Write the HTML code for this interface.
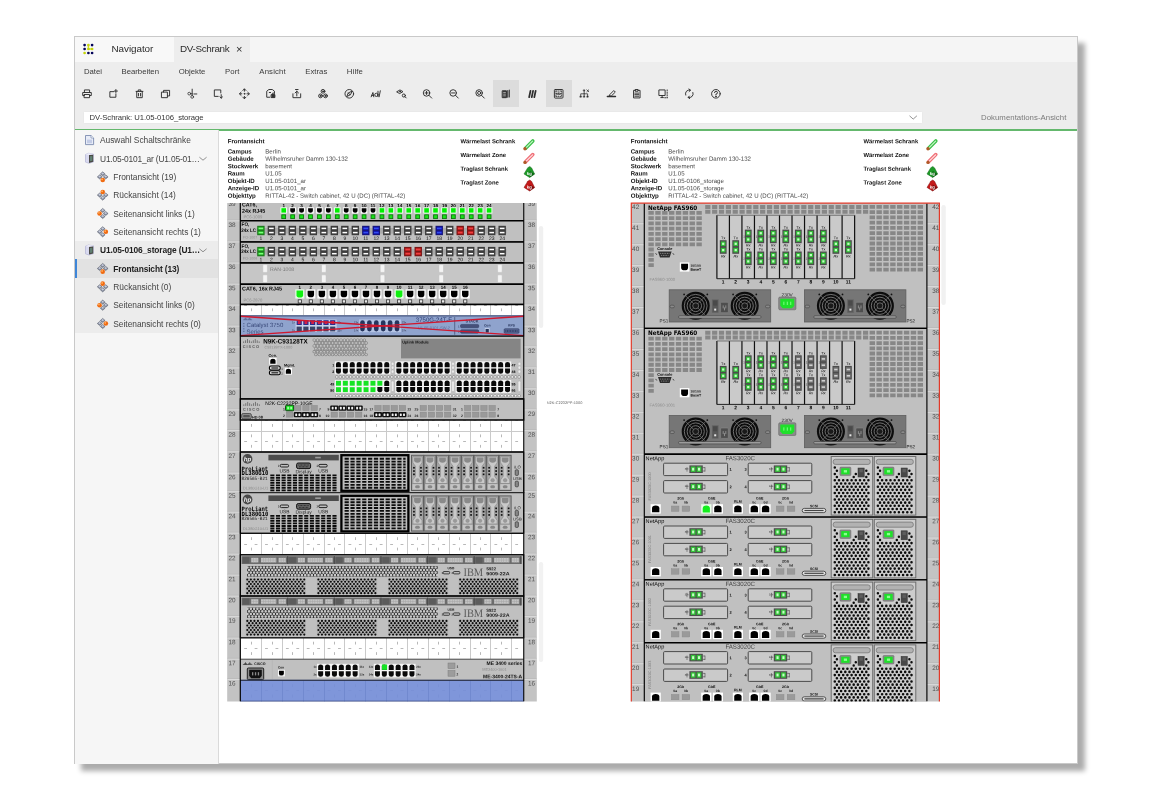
<!DOCTYPE html>
<html lang="de"><head><meta charset="utf-8"><title>DV-Schrank</title>
<style>

*{box-sizing:border-box}
html,body{margin:0;padding:0;background:#fff;width:1152px;height:800px;overflow:hidden}
body{font-family:"Liberation Sans",sans-serif;color:#333;position:relative}
.win{position:absolute;left:74px;top:36px;width:1004.3px;height:728.3px;background:#fff;border:1px solid #c9c9c9;box-shadow:7px 7px 5px rgba(0,0,0,.33)}
.abs{position:absolute;white-space:nowrap}
.tabbar{position:absolute;left:75px;top:37px;width:1002px;height:25px;background:#f5f5f5}
.tabnav{position:absolute;left:75px;top:37px;width:99px;height:25px;background:#f8f8f8}
.tabact{position:absolute;left:174px;top:37px;width:76px;height:25px;background:#ededed}
.menubar{position:absolute;left:75px;top:62px;width:1002px;height:48px;background:#ededed}
.tbline{position:absolute;left:75px;top:110px;width:1002px;height:1px;background:#ededed}
.comborow{position:absolute;left:75px;top:111px;width:1002px;height:18px;background:#ededed}
.combo{position:absolute;left:83px;top:110.6px;width:839.8px;height:13.6px;background:#fff;border:1px solid #e9e9e9;border-radius:1.5px}
.green{position:absolute;left:75px;top:128.8px;width:1002px;height:2.2px;background:#64b86d}
.side{position:absolute;left:75px;top:130px;width:144px;height:633.6px;background:#f6f6f6;border-right:1px solid #dadada}
.selgrp{position:absolute;left:75px;top:241px;width:143px;height:92px;background:#ececec}
.selrow{position:absolute;left:75px;top:259px;width:143px;height:19px;background:#e2e2e2}
.selbar{position:absolute;left:75px;top:259px;width:2.2px;height:19px;background:#3f86d8}
.mt{font-size:7.75px;color:#3a3a3a;top:66.6px;line-height:10px}
.tt{font-size:9.9px;color:#2b2b2b;top:43px;line-height:12px}
.st{font-size:8.4px;color:#444;letter-spacing:-.02px;line-height:10px}
.tbact{position:absolute;top:80px;width:26px;height:27px;background:#dcdcdc}

</style></head><body>
<div class="win"></div>
<div class="tabbar"></div><div class="tabnav"></div><div class="tabact"></div>
<div class="menubar"></div><div class="tbline"></div><div class="comborow"></div><div class="combo"></div><div class="green"></div>
<div class="side"></div><div class="selgrp"></div><div class="selrow"></div><div class="selbar"></div>
<div class="tbact" style="left:493px"></div><div class="tbact" style="left:546px"></div>
<div style="position:absolute;left:0;top:0;width:1152px;height:800px;will-change:transform">
<div class="abs tt" style="left:111.5px;letter-spacing:-0.06px">Navigator</div>
<div class="abs tt" style="left:180px;letter-spacing:-0.33px">DV-Schrank</div>
<div class="abs tt" style="left:236px;font-size:11px;top:42.5px">×</div>
<div class="abs mt" style="left:84px;letter-spacing:-0.02px">Datei</div>
<div class="abs mt" style="left:121.5px;letter-spacing:0px">Bearbeiten</div>
<div class="abs mt" style="left:178.7px;letter-spacing:0px">Objekte</div>
<div class="abs mt" style="left:225px;letter-spacing:0.1px">Port</div>
<div class="abs mt" style="left:259.3px;letter-spacing:0.17px">Ansicht</div>
<div class="abs mt" style="left:305.3px;letter-spacing:0px">Extras</div>
<div class="abs mt" style="left:346.8px;letter-spacing:0.13px">Hilfe</div>
<div class="abs" style="left:89.6px;top:112.8px;font-size:7.7px;line-height:10px;color:#333;letter-spacing:-0.05px">DV-Schrank: U1.05-0106_storage</div>
<div class="abs" style="left:981px;top:112.8px;font-size:7.8px;line-height:10px;color:#7a7a7a;letter-spacing:0.04px">Dokumentations-Ansicht</div>
<div class="abs st" style="left:100px;top:135.3px;font-weight:400;color:#444">Auswahl Schaltschränke</div>
<div class="abs st" style="left:100px;top:153.60000000000002px;font-weight:400;color:#444;letter-spacing:-.17px">U1.05-0101_ar (U1.05-01…</div>
<div class="abs st" style="left:113.3px;top:172.0px;font-weight:400;color:#444">Frontansicht (19)</div>
<div class="abs st" style="left:113.3px;top:190.20000000000002px;font-weight:400;color:#444">Rückansicht (14)</div>
<div class="abs st" style="left:113.3px;top:208.60000000000002px;font-weight:400;color:#444">Seitenansicht links (1)</div>
<div class="abs st" style="left:113.3px;top:226.9px;font-weight:400;color:#444">Seitenansicht rechts (1)</div>
<div class="abs st" style="left:100px;top:245.3px;font-weight:700;color:#222;letter-spacing:-.12px">U1.05-0106_storage (U1…</div>
<div class="abs st" style="left:113.3px;top:263.6px;font-weight:700;color:#222;letter-spacing:-.12px">Frontansicht (13)</div>
<div class="abs st" style="left:113.3px;top:281.90000000000003px;font-weight:400;color:#444">Rückansicht (0)</div>
<div class="abs st" style="left:113.3px;top:300.3px;font-weight:400;color:#444">Seitenansicht links (0)</div>
<div class="abs st" style="left:113.3px;top:318.6px;font-weight:400;color:#444">Seitenansicht rechts (0)</div>
</div>
<svg class="abs" style="left:0;top:0" width="1152" height="800" viewBox="0 0 1152 800"><path d="M88.4 45.1V49H92.1" stroke="#c4d40a" stroke-width="1.5" fill="none" stroke-linecap="round" opacity=".8"/><circle cx="84.6" cy="45.1" r="1.35" fill="#04045a"/><circle cx="88.4" cy="45.1" r="1.35" fill="#c4d40a"/><circle cx="92.1" cy="45.1" r="1.35" fill="#04045a"/><circle cx="84.6" cy="49" r="1.35" fill="#04045a"/><circle cx="88.4" cy="49" r="1.35" fill="#c4d40a"/><circle cx="92.1" cy="49" r="1.35" fill="#c4d40a"/><circle cx="84.6" cy="53" r="1.35" fill="#c4d40a"/><circle cx="88.4" cy="53" r="1.35" fill="#04045a"/><circle cx="92.1" cy="53" r="1.35" fill="#04045a"/><g transform="translate(87,93.8) scale(0.86)" stroke="#2e2e2e" stroke-width="1.1" fill="none" stroke-linecap="round" stroke-linejoin="round"><path d="M-3-1.5V-4.5H3V-1.5M-3 2H-5V-1.5H5V2H3M-3 .8H3V4.5H-3Z"/></g>
<g transform="translate(113.3,93.8) scale(0.86)" stroke="#2e2e2e" stroke-width="1.1" fill="none" stroke-linecap="round" stroke-linejoin="round"><path d="M0.5-2.5H-4V4H3V0M3-5V-1.5M1.2-3.2H4.8"/></g>
<g transform="translate(139.5,93.8) scale(0.86)" stroke="#2e2e2e" stroke-width="1.1" fill="none" stroke-linecap="round" stroke-linejoin="round"><path d="M-4-2.8H4M-1.5-2.8V-4.5H1.5V-2.8M-3.2-2.8V4.5H3.2V-2.8M-1.2-.5V2.5M1.2-.5V2.5"/></g>
<g transform="translate(165.7,93.8) scale(0.86)" stroke="#2e2e2e" stroke-width="1.1" fill="none" stroke-linecap="round" stroke-linejoin="round"><path d="M-4.5-2H2V4.5H-4.5ZM-2.5-2V-4H4.5V2.5H2"/></g>
<g transform="translate(192,93.8) scale(0.86)" stroke="#2e2e2e" stroke-width="1.1" fill="none" stroke-linecap="round" stroke-linejoin="round"><circle cx="-3.2" cy="-.2" r="1.6" stroke-width=".9"/><circle cx=".2" cy="3.6" r="1.6" stroke-width=".9"/><path d="M.2-5.4V2M-1.6 0H.2M2.2 .2H5.6"/></g>
<g transform="translate(218.2,93.8) scale(0.86)" stroke="#2e2e2e" stroke-width="1.1" fill="none" stroke-linecap="round" stroke-linejoin="round"><path d="M3-1V-4.5H-4.5V3H0M3.5 1V5M2 3.6L3.5 5L5 3.6"/></g>
<g transform="translate(244.4,93.8) scale(0.86)" stroke="#2e2e2e" stroke-width="1.1" fill="none" stroke-linecap="round" stroke-linejoin="round"><path d="M-1.8-3.9L0-5.8L1.8-3.9M-1.8 3.9L0 5.8L1.8 3.9M-3.9-1.8L-5.8 0L-3.9 1.8M3.9-1.8L5.8 0L3.9 1.8M0-5.4V-3M0 5.4V3M-5.4 0H-3M5.4 0H3"/><circle cx="0" cy="0" r=".5" fill="#333"/></g>
<g transform="translate(270.6,93.8) scale(0.86)" stroke="#2e2e2e" stroke-width="1.1" fill="none" stroke-linecap="round" stroke-linejoin="round"><path d="M-1 4H-4.5V-3L-2-5H2L4.5-3V-.5M-1.5-1.5H0"/><rect x="1" y="1" width="4" height="3.4" fill="#333"/><path d="M2 1V0A1 1 0 0 1 4 0V1"/></g>
<g transform="translate(296.8,93.8) scale(0.86)" stroke="#2e2e2e" stroke-width="1.1" fill="none" stroke-linecap="round" stroke-linejoin="round"><path d="M-4.5 0V4.5H4.5V0M0 2.5V-3M-2-1L0-3L2-1M-1.5-5H1.5"/></g>
<g transform="translate(323,93.8) scale(0.86)" stroke="#2e2e2e" stroke-width="1.1" fill="none" stroke-linecap="round" stroke-linejoin="round"><circle cx="0" cy="-2.9" r="2.2"/><circle cx="-2.9" cy="2.4" r="2.2"/><circle cx="2.9" cy="2.4" r="2.2"/><circle cx="0" cy="-2.9" r=".6" fill="#333"/><circle cx="-2.9" cy="2.4" r=".6" fill="#333"/><circle cx="2.9" cy="2.4" r=".6" fill="#333"/></g>
<g transform="translate(349.3,93.8) scale(0.86)" stroke="#2e2e2e" stroke-width="1.1" fill="none" stroke-linecap="round" stroke-linejoin="round"><circle cx="0" cy="0" r="5"/><path d="M3-3L-1.2-1L-3 3.2L1 1.2ZM-1.2-1L1 1.2"/></g>
<g transform="translate(375.5,93.8) scale(0.86)" stroke="#2e2e2e" stroke-width="1.1" fill="none" stroke-linecap="round" stroke-linejoin="round"><path d="M-5 3.5L-3-1.5L-2 3.5M-4.4 1.8H-2.4"/><circle cx="1" cy="1.2" r="1.9"/><path d="M2.9-3L2.9 3.3M4.2 3.5L5.6-3.5"/></g>
<g transform="translate(401.7,93.8) scale(0.86)" stroke="#2e2e2e" stroke-width="1.1" fill="none" stroke-linecap="round" stroke-linejoin="round"><path d="M-5.5-2.5L-2-4.5L1.5-2.5L-2-.5Z"/><circle cx="-2" cy="-2.5" r=".6"/><circle cx="2.5" cy="2" r="1.8"/><path d="M3.8 3.3L5.2 4.8"/></g>
<g transform="translate(427.4,93.8) scale(0.86)" stroke="#2e2e2e" stroke-width="1.1" fill="none" stroke-linecap="round" stroke-linejoin="round"><circle cx="-1" cy="-1" r="3.8"/><path d="M1.8 1.8L5 5M-1-2.8V.8M-2.8-1H.8"/></g>
<g transform="translate(454,93.8) scale(0.86)" stroke="#2e2e2e" stroke-width="1.1" fill="none" stroke-linecap="round" stroke-linejoin="round"><circle cx="-1" cy="-1" r="3.8"/><path d="M1.8 1.8L5 5M-2.8-1H.8"/></g>
<g transform="translate(480,93.8) scale(0.86)" stroke="#2e2e2e" stroke-width="1.1" fill="none" stroke-linecap="round" stroke-linejoin="round"><circle cx="-1" cy="-1" r="3.8"/><circle cx="-1" cy="-1" r="1.8"/><path d="M1.8 1.8L5 5"/></g>
<g transform="translate(506.2,93.8) scale(0.86)" stroke="#2e2e2e" stroke-width="1.1" fill="none" stroke-linecap="round" stroke-linejoin="round"><path d="M-4.2-3.5H.3V4.5H-4.2Z" fill="#333"/><path d="M-3-1.6H-.9M-3 .4H-.9M-3 2.4H-.9" stroke="#dcdcdc" stroke-width=".8"/><path d="M1.8-3.8V4M3.6-4.4V3.6" stroke-width="1.2"/></g>
<g transform="translate(532.4,93.8) scale(0.86)" stroke="#2e2e2e" stroke-width="1.1" fill="none" stroke-linecap="round" stroke-linejoin="round"><path d="M-3.8 4L-2.2-3.5M-.8 4L.8-3.5M2.2 4L3.8-3.5" stroke-width="2"/></g>
<g transform="translate(558.7,93.8) scale(0.86)" stroke="#2e2e2e" stroke-width="1.1" fill="none" stroke-linecap="round" stroke-linejoin="round"><rect x="-5" y="-5" width="10" height="10" rx="1"/><path d="M-3.2-3.2H3.2M-3.2 3.2H3.2M-3.2-3.2V3.2M3.2-3.2V3.2" stroke-dasharray="1 1.4" stroke-width=".9"/><path d="M-2.8 0Q0-2.6 2.8 0Q0 2.6-2.8 0Z" stroke-width=".8"/><circle cx="0" cy="0" r=".8" fill="#333" stroke="none"/></g>
<g transform="translate(584.6,93.8) scale(0.86)" stroke="#2e2e2e" stroke-width="1.1" fill="none" stroke-linecap="round" stroke-linejoin="round"><path d="M-.5-3.5V0M-4.5 3V0H3.5V3M-.5 0V3" stroke-width=".9"/><path d="M-5.2 2.6h1.4v1.4h-1.4zM-1.2 2.6h1.4v1.4h-1.4zM2.8 2.6h1.4v1.4h-1.4zM-1.2-4.6h1.4v1.4h-1.4z" fill="#333" stroke-width=".5"/><path d="M2.6-4.6L4.8-2.4M4.8-4.6L2.6-2.4" stroke-width=".9"/></g>
<g transform="translate(611.2,93.8) scale(0.86)" stroke="#2e2e2e" stroke-width="1.1" fill="none" stroke-linecap="round" stroke-linejoin="round"><path d="M-4.5 3.2H5" stroke-width="1.6"/><path d="M-1.5 .8L3-3.8L4.8-2L.3 2.4L-2 2.6Z"/></g>
<g transform="translate(636.8,93.8) scale(0.86)" stroke="#2e2e2e" stroke-width="1.1" fill="none" stroke-linecap="round" stroke-linejoin="round"><path d="M-1.5-4H-3.8V4.8H3.8V-4H1.5M-1.5-5H1.5V-3H-1.5ZM-2.3-.8H2.3M-2.3 1H2.3M-2.3 2.8H2.3"/></g>
<g transform="translate(663.4,93.8) scale(0.86)" stroke="#2e2e2e" stroke-width="1.1" fill="none" stroke-linecap="round" stroke-linejoin="round"><path d="M-4.8-4.5H2V2H-4.8ZM-1.5 2V4.4M-3 4.4H0" /><path d="M4.4-4.5V4.6M1.5 4.6H4.4" stroke-dasharray="1.2 1.6"/></g>
<g transform="translate(689.3,93.8) scale(0.86)" stroke="#2e2e2e" stroke-width="1.1" fill="none" stroke-linecap="round" stroke-linejoin="round"><path d="M-4.2 1.5A4.4 4.4 0 0 1 1.2-4.2M4.2-1.5A4.4 4.4 0 0 1-1.2 4.2M-.4-5.6L1.4-4.2L-.2-2.6M.4 5.6L-1.4 4.2L.2 2.6"/></g>
<g transform="translate(715.9,93.8) scale(0.86)" stroke="#2e2e2e" stroke-width="1.1" fill="none" stroke-linecap="round" stroke-linejoin="round"><circle cx="0" cy="0" r="5"/><path d="M-1.6-1.4A1.7 1.7 0 1 1 0 .4V1.3"/><circle cx="0" cy="3" r=".35" fill="#333"/></g><path d="M85.5 135.5H91L93.6 138V144.6H85.5Z" fill="#e8ecf7" stroke="#7d8cb0" stroke-width=".9"/><path d="M91 135.5V138H93.6" fill="#fff" stroke="#7d8cb0" stroke-width=".7"/><rect x="87" y="139.6" width="5" height="3.6" fill="#c3cce6"/><path d="M85.5 154.5L88.5 153.3L93.5 154.10000000000002V161.9L89 163.3L85.5 162.10000000000002Z" fill="#d9daf0" stroke="#a9abd0" stroke-width=".6"/><path d="M89 155.10000000000002L93.2 154.70000000000002V161.70000000000002L89 162.9Z" fill="#4a4a44"/><path d="M90 156.3L92.4 156.0V160.70000000000002L90 161.3Z" fill="#5f7f72"/><path d="M85.5 154.5L88.5 153.3L93.5 154.10000000000002L89 155.10000000000002Z" fill="#eeeefa"/><path d="M85.5 246.2L88.5 245L93.5 245.8V253.6L89 255L85.5 253.8Z" fill="#d9daf0" stroke="#a9abd0" stroke-width=".6"/><path d="M89 246.8L93.2 246.4V253.4L89 254.6Z" fill="#4a4a44"/><path d="M90 248L92.4 247.7V252.4L90 253Z" fill="#5f7f72"/><path d="M85.5 246.2L88.5 245L93.5 245.8L89 246.8Z" fill="#eeeefa"/><path d="M102.7 171.8L105.10000000000001 173.9L102.7 176.0L100.3 173.9Z" fill="#858c9e" stroke="#4f5462" stroke-width=".5"/><path d="M102.7 172.4L104.10000000000001 173.6L102.7 174.5L101.3 173.6Z" fill="#c9cede"/><path d="M99.7 174.8L102.10000000000001 176.9L99.7 179.0L97.3 176.9Z" fill="#858c9e" stroke="#4f5462" stroke-width=".5"/><path d="M99.7 175.4L101.10000000000001 176.6L99.7 177.5L98.3 176.6Z" fill="#c9cede"/><path d="M105.7 174.8L108.10000000000001 176.9L105.7 179.0L103.3 176.9Z" fill="#858c9e" stroke="#4f5462" stroke-width=".5"/><path d="M105.7 175.4L107.10000000000001 176.6L105.7 177.5L104.3 176.6Z" fill="#c9cede"/><circle cx="102.7" cy="180.05" r="2.3" fill="#f06a10"/><circle cx="102.10000000000001" cy="179.35000000000002" r=".9" fill="#ffb060"/><path d="M102.7 196.0L105.10000000000001 198.1L102.7 200.2L100.3 198.1Z" fill="#858c9e" stroke="#4f5462" stroke-width=".5"/><path d="M102.7 196.6L104.10000000000001 197.79999999999998L102.7 198.7L101.3 197.79999999999998Z" fill="#c9cede"/><path d="M99.7 193.0L102.10000000000001 195.1L99.7 197.2L97.3 195.1Z" fill="#858c9e" stroke="#4f5462" stroke-width=".5"/><path d="M99.7 193.6L101.10000000000001 194.79999999999998L99.7 195.7L98.3 194.79999999999998Z" fill="#c9cede"/><path d="M105.7 193.0L108.10000000000001 195.1L105.7 197.2L103.3 195.1Z" fill="#858c9e" stroke="#4f5462" stroke-width=".5"/><path d="M105.7 193.6L107.10000000000001 194.79999999999998L105.7 195.7L104.3 194.79999999999998Z" fill="#c9cede"/><circle cx="102.7" cy="191.95" r="2.3" fill="#f06a10"/><circle cx="102.10000000000001" cy="191.25" r=".9" fill="#ffb060"/><path d="M102.7 208.4L105.10000000000001 210.5L102.7 212.6L100.3 210.5Z" fill="#858c9e" stroke="#4f5462" stroke-width=".5"/><path d="M102.7 209.0L104.10000000000001 210.2L102.7 211.1L101.3 210.2Z" fill="#c9cede"/><path d="M102.7 214.4L105.10000000000001 216.5L102.7 218.6L100.3 216.5Z" fill="#858c9e" stroke="#4f5462" stroke-width=".5"/><path d="M102.7 215.0L104.10000000000001 216.2L102.7 217.1L101.3 216.2Z" fill="#c9cede"/><path d="M105.7 211.4L108.10000000000001 213.5L105.7 215.6L103.3 213.5Z" fill="#858c9e" stroke="#4f5462" stroke-width=".5"/><path d="M105.7 212.0L107.10000000000001 213.2L105.7 214.1L104.3 213.2Z" fill="#c9cede"/><circle cx="99.55" cy="213.5" r="2.3" fill="#f06a10"/><circle cx="98.95" cy="212.8" r=".9" fill="#ffb060"/><path d="M102.7 226.70000000000002L105.10000000000001 228.8L102.7 230.9L100.3 228.8Z" fill="#858c9e" stroke="#4f5462" stroke-width=".5"/><path d="M102.7 227.3L104.10000000000001 228.5L102.7 229.4L101.3 228.5Z" fill="#c9cede"/><path d="M102.7 232.70000000000002L105.10000000000001 234.8L102.7 236.9L100.3 234.8Z" fill="#858c9e" stroke="#4f5462" stroke-width=".5"/><path d="M102.7 233.3L104.10000000000001 234.5L102.7 235.4L101.3 234.5Z" fill="#c9cede"/><path d="M99.7 229.70000000000002L102.10000000000001 231.8L99.7 233.9L97.3 231.8Z" fill="#858c9e" stroke="#4f5462" stroke-width=".5"/><path d="M99.7 230.3L101.10000000000001 231.5L99.7 232.4L98.3 231.5Z" fill="#c9cede"/><circle cx="105.85000000000001" cy="231.8" r="2.3" fill="#f06a10"/><circle cx="105.25000000000001" cy="231.10000000000002" r=".9" fill="#ffb060"/><path d="M102.7 263.4L105.10000000000001 265.5L102.7 267.6L100.3 265.5Z" fill="#858c9e" stroke="#4f5462" stroke-width=".5"/><path d="M102.7 264.0L104.10000000000001 265.2L102.7 266.1L101.3 265.2Z" fill="#c9cede"/><path d="M99.7 266.4L102.10000000000001 268.5L99.7 270.6L97.3 268.5Z" fill="#858c9e" stroke="#4f5462" stroke-width=".5"/><path d="M99.7 267.0L101.10000000000001 268.2L99.7 269.1L98.3 268.2Z" fill="#c9cede"/><path d="M105.7 266.4L108.10000000000001 268.5L105.7 270.6L103.3 268.5Z" fill="#858c9e" stroke="#4f5462" stroke-width=".5"/><path d="M105.7 267.0L107.10000000000001 268.2L105.7 269.1L104.3 268.2Z" fill="#c9cede"/><circle cx="102.7" cy="271.65" r="2.3" fill="#f06a10"/><circle cx="102.10000000000001" cy="270.95" r=".9" fill="#ffb060"/><path d="M102.7 287.7L105.10000000000001 289.8L102.7 291.90000000000003L100.3 289.8Z" fill="#858c9e" stroke="#4f5462" stroke-width=".5"/><path d="M102.7 288.3L104.10000000000001 289.5L102.7 290.40000000000003L101.3 289.5Z" fill="#c9cede"/><path d="M99.7 284.7L102.10000000000001 286.8L99.7 288.90000000000003L97.3 286.8Z" fill="#858c9e" stroke="#4f5462" stroke-width=".5"/><path d="M99.7 285.3L101.10000000000001 286.5L99.7 287.40000000000003L98.3 286.5Z" fill="#c9cede"/><path d="M105.7 284.7L108.10000000000001 286.8L105.7 288.90000000000003L103.3 286.8Z" fill="#858c9e" stroke="#4f5462" stroke-width=".5"/><path d="M105.7 285.3L107.10000000000001 286.5L105.7 287.40000000000003L104.3 286.5Z" fill="#c9cede"/><circle cx="102.7" cy="283.65000000000003" r="2.3" fill="#f06a10"/><circle cx="102.10000000000001" cy="282.95000000000005" r=".9" fill="#ffb060"/><path d="M102.7 300.09999999999997L105.10000000000001 302.2L102.7 304.3L100.3 302.2Z" fill="#858c9e" stroke="#4f5462" stroke-width=".5"/><path d="M102.7 300.7L104.10000000000001 301.9L102.7 302.8L101.3 301.9Z" fill="#c9cede"/><path d="M102.7 306.09999999999997L105.10000000000001 308.2L102.7 310.3L100.3 308.2Z" fill="#858c9e" stroke="#4f5462" stroke-width=".5"/><path d="M102.7 306.7L104.10000000000001 307.9L102.7 308.8L101.3 307.9Z" fill="#c9cede"/><path d="M105.7 303.09999999999997L108.10000000000001 305.2L105.7 307.3L103.3 305.2Z" fill="#858c9e" stroke="#4f5462" stroke-width=".5"/><path d="M105.7 303.7L107.10000000000001 304.9L105.7 305.8L104.3 304.9Z" fill="#c9cede"/><circle cx="99.55" cy="305.2" r="2.3" fill="#f06a10"/><circle cx="98.95" cy="304.5" r=".9" fill="#ffb060"/><path d="M102.7 318.4L105.10000000000001 320.5L102.7 322.6L100.3 320.5Z" fill="#858c9e" stroke="#4f5462" stroke-width=".5"/><path d="M102.7 319.0L104.10000000000001 320.2L102.7 321.1L101.3 320.2Z" fill="#c9cede"/><path d="M102.7 324.4L105.10000000000001 326.5L102.7 328.6L100.3 326.5Z" fill="#858c9e" stroke="#4f5462" stroke-width=".5"/><path d="M102.7 325.0L104.10000000000001 326.2L102.7 327.1L101.3 326.2Z" fill="#c9cede"/><path d="M99.7 321.4L102.10000000000001 323.5L99.7 325.6L97.3 323.5Z" fill="#858c9e" stroke="#4f5462" stroke-width=".5"/><path d="M99.7 322.0L101.10000000000001 323.2L99.7 324.1L98.3 323.2Z" fill="#c9cede"/><circle cx="105.85000000000001" cy="323.5" r="2.3" fill="#f06a10"/><circle cx="105.25000000000001" cy="322.8" r=".9" fill="#ffb060"/><path d="M199.4 157.2L203 160.2L206.6 157.2" stroke="#777" stroke-width=".8" fill="none"/><path d="M199.4 248.8L203 251.8L206.6 248.8" stroke="#777" stroke-width=".8" fill="none"/><path d="M909.5 115.80000000000001L913.2 119.10000000000001L916.9000000000001 115.80000000000001" stroke="#777" stroke-width=".8" fill="none"/></svg>
<svg class="abs" style="left:0;top:0;will-change:transform" width="1152" height="800" viewBox="0 0 1152 800" font-family="Liberation Sans, sans-serif" text-rendering="geometricPrecision"><text x="227.7" y="143.3" transform="rotate(.03 227.7 143.3)" font-size="6.1" fill="#111" font-weight="700">Frontansicht</text><text x="227.7" y="153.4" transform="rotate(.03 227.7 153.4)" font-size="6.1" fill="#111" font-weight="700">Campus</text><text x="265.3" y="153.4" transform="rotate(.03 265.3 153.4)" font-size="6.1" fill="#4a4a4a">Berlin</text><text x="227.7" y="160.78" transform="rotate(.03 227.7 160.78)" font-size="6.1" fill="#111" font-weight="700">Gebäude</text><text x="265.3" y="160.78" transform="rotate(.03 265.3 160.78)" font-size="6.1" fill="#4a4a4a">Wilhelmsruher Damm 130-132</text><text x="227.7" y="168.16" transform="rotate(.03 227.7 168.16)" font-size="6.1" fill="#111" font-weight="700">Stockwerk</text><text x="265.3" y="168.16" transform="rotate(.03 265.3 168.16)" font-size="6.1" fill="#4a4a4a">basement</text><text x="227.7" y="175.54" transform="rotate(.03 227.7 175.54)" font-size="6.1" fill="#111" font-weight="700">Raum</text><text x="265.3" y="175.54" transform="rotate(.03 265.3 175.54)" font-size="6.1" fill="#4a4a4a">U1.05</text><text x="227.7" y="182.92" transform="rotate(.03 227.7 182.92)" font-size="6.1" fill="#111" font-weight="700">Objekt-ID</text><text x="265.3" y="182.92" transform="rotate(.03 265.3 182.92)" font-size="6.1" fill="#4a4a4a">U1.05-0101_ar</text><text x="227.7" y="190.3" transform="rotate(.03 227.7 190.3)" font-size="6.1" fill="#111" font-weight="700">Anzeige-ID</text><text x="265.3" y="190.3" transform="rotate(.03 265.3 190.3)" font-size="6.1" fill="#4a4a4a">U1.05-0101_ar</text><text x="227.7" y="197.68" transform="rotate(.03 227.7 197.68)" font-size="6.1" fill="#111" font-weight="700">Objekttyp</text><text x="265.3" y="197.68" transform="rotate(.03 265.3 197.68)" font-size="6.1" fill="#4a4a4a">RITTAL-42 - Switch cabinet, 42 U (DC) (RITTAL-42)</text><text x="460.5" y="143.3" transform="rotate(.03 460.5 143.3)" font-size="5.9" fill="#111" font-weight="700">Wärmelast Schrank</text><text x="460.5" y="157" transform="rotate(.03 460.5 157)" font-size="5.9" fill="#111" font-weight="700">Wärmelast Zone</text><text x="460.5" y="170.7" transform="rotate(.03 460.5 170.7)" font-size="5.9" fill="#111" font-weight="700">Traglast Schrank</text><text x="460.5" y="184.4" transform="rotate(.03 460.5 184.4)" font-size="5.9" fill="#111" font-weight="700">Traglast Zone</text><path d="M525.6 148.2L532.8 141" fill="none" stroke="#3cc04a" stroke-width="3.6" stroke-linecap="round"/><path d="M526.2 147.6L532.6 141.2" fill="none" stroke="#c8f5c8" stroke-width="1.2" stroke-linecap="round"/><circle cx="525" cy="148.8" r="1.7" fill="#b05a28"/><path d="M525.6 161.8L532.8 154.6" fill="none" stroke="#f07078" stroke-width="3.6" stroke-linecap="round"/><path d="M526.2 161.2L532.6 154.8" fill="none" stroke="#ffe0e0" stroke-width="1.2" stroke-linecap="round"/><circle cx="525" cy="162.4" r="1.7" fill="#b05a28"/><path d="M527.8 167.7L529.8 166.5L531.6 167.9L534.6 174.1L529.6 177.5L524 173.9Z" fill="#1e9a28" stroke="#0c6414" stroke-width="0.5"/><path d="M529.6 171.1L534.6 174.1L529.6 177.5Z" fill="#0c6414"/><text x="529.3" y="175.1" transform="rotate(.03 529.3 175.1)" font-size="4.2" fill="#fff" font-weight="700" text-anchor="middle">kg</text><path d="M527.8 181.2L529.8 180L531.6 181.4L534.6 187.6L529.6 191L524 187.4Z" fill="#c41a1a" stroke="#7c0c0c" stroke-width="0.5"/><path d="M529.6 184.6L534.6 187.6L529.6 191Z" fill="#7c0c0c"/><text x="529.3" y="188.6" transform="rotate(.03 529.3 188.6)" font-size="4.2" fill="#fff" font-weight="700" text-anchor="middle">kg</text><rect x="227.2" y="203" width="309.6" height="498.5" fill="#c3c3c3"/><clipPath id="clipL"><rect x="227.2" y="203" width="309.6" height="498.5"/></clipPath><g clip-path="url(#clipL)"><text x="228.4" y="206" transform="rotate(.03 228.4 206)" font-size="6.4" fill="#505050">39</text><text x="527.95" y="206" transform="rotate(.03 527.95 206)" font-size="6.4" fill="#505050">39</text><path d="M227.2 199.1L240.2 199.1" stroke="#b4b4b4" stroke-width="0.7"/><path d="M227.2 199.9L240.2 199.9" stroke="#dedede" stroke-width="0.9"/><path d="M523.75 199.1L536.75 199.1" stroke="#b4b4b4" stroke-width="0.7"/><path d="M523.75 199.9L536.75 199.9" stroke="#dedede" stroke-width="0.9"/><text x="228.4" y="226.9" transform="rotate(.03 228.4 226.9)" font-size="6.4" fill="#505050">38</text><text x="527.95" y="226.9" transform="rotate(.03 527.95 226.9)" font-size="6.4" fill="#505050">38</text><path d="M227.2 220L240.2 220" stroke="#b4b4b4" stroke-width="0.7"/><path d="M227.2 220.8L240.2 220.8" stroke="#dedede" stroke-width="0.9"/><path d="M523.75 220L536.75 220" stroke="#b4b4b4" stroke-width="0.7"/><path d="M523.75 220.8L536.75 220.8" stroke="#dedede" stroke-width="0.9"/><text x="228.4" y="248" transform="rotate(.03 228.4 248)" font-size="6.4" fill="#505050">37</text><text x="527.95" y="248" transform="rotate(.03 527.95 248)" font-size="6.4" fill="#505050">37</text><path d="M227.2 241.1L240.2 241.1" stroke="#b4b4b4" stroke-width="0.7"/><path d="M227.2 241.9L240.2 241.9" stroke="#dedede" stroke-width="0.9"/><path d="M523.75 241.1L536.75 241.1" stroke="#b4b4b4" stroke-width="0.7"/><path d="M523.75 241.9L536.75 241.9" stroke="#dedede" stroke-width="0.9"/><text x="228.4" y="269.1" transform="rotate(.03 228.4 269.1)" font-size="6.4" fill="#505050">36</text><text x="527.95" y="269.1" transform="rotate(.03 527.95 269.1)" font-size="6.4" fill="#505050">36</text><path d="M227.2 262.2L240.2 262.2" stroke="#b4b4b4" stroke-width="0.7"/><path d="M227.2 263L240.2 263" stroke="#dedede" stroke-width="0.9"/><path d="M523.75 262.2L536.75 262.2" stroke="#b4b4b4" stroke-width="0.7"/><path d="M523.75 263L536.75 263" stroke="#dedede" stroke-width="0.9"/><text x="228.4" y="290.2" transform="rotate(.03 228.4 290.2)" font-size="6.4" fill="#505050">35</text><text x="527.95" y="290.2" transform="rotate(.03 527.95 290.2)" font-size="6.4" fill="#505050">35</text><path d="M227.2 283.3L240.2 283.3" stroke="#b4b4b4" stroke-width="0.7"/><path d="M227.2 284.1L240.2 284.1" stroke="#dedede" stroke-width="0.9"/><path d="M523.75 283.3L536.75 283.3" stroke="#b4b4b4" stroke-width="0.7"/><path d="M523.75 284.1L536.75 284.1" stroke="#dedede" stroke-width="0.9"/><text x="228.4" y="311.1" transform="rotate(.03 228.4 311.1)" font-size="6.4" fill="#505050">34</text><text x="527.95" y="311.1" transform="rotate(.03 527.95 311.1)" font-size="6.4" fill="#505050">34</text><path d="M227.2 304.2L240.2 304.2" stroke="#b4b4b4" stroke-width="0.7"/><path d="M227.2 305L240.2 305" stroke="#dedede" stroke-width="0.9"/><path d="M523.75 304.2L536.75 304.2" stroke="#b4b4b4" stroke-width="0.7"/><path d="M523.75 305L536.75 305" stroke="#dedede" stroke-width="0.9"/><text x="228.4" y="332.2" transform="rotate(.03 228.4 332.2)" font-size="6.4" fill="#505050">33</text><text x="527.95" y="332.2" transform="rotate(.03 527.95 332.2)" font-size="6.4" fill="#505050">33</text><path d="M227.2 325.3L240.2 325.3" stroke="#b4b4b4" stroke-width="0.7"/><path d="M227.2 326.1L240.2 326.1" stroke="#dedede" stroke-width="0.9"/><path d="M523.75 325.3L536.75 325.3" stroke="#b4b4b4" stroke-width="0.7"/><path d="M523.75 326.1L536.75 326.1" stroke="#dedede" stroke-width="0.9"/><text x="228.4" y="353" transform="rotate(.03 228.4 353)" font-size="6.4" fill="#505050">32</text><text x="527.95" y="353" transform="rotate(.03 527.95 353)" font-size="6.4" fill="#505050">32</text><path d="M227.2 346.1L240.2 346.1" stroke="#b4b4b4" stroke-width="0.7"/><path d="M227.2 346.9L240.2 346.9" stroke="#dedede" stroke-width="0.9"/><path d="M523.75 346.1L536.75 346.1" stroke="#b4b4b4" stroke-width="0.7"/><path d="M523.75 346.9L536.75 346.9" stroke="#dedede" stroke-width="0.9"/><text x="228.4" y="374" transform="rotate(.03 228.4 374)" font-size="6.4" fill="#505050">31</text><text x="527.95" y="374" transform="rotate(.03 527.95 374)" font-size="6.4" fill="#505050">31</text><path d="M227.2 367.1L240.2 367.1" stroke="#b4b4b4" stroke-width="0.7"/><path d="M227.2 367.9L240.2 367.9" stroke="#dedede" stroke-width="0.9"/><path d="M523.75 367.1L536.75 367.1" stroke="#b4b4b4" stroke-width="0.7"/><path d="M523.75 367.9L536.75 367.9" stroke="#dedede" stroke-width="0.9"/><text x="228.4" y="394.9" transform="rotate(.03 228.4 394.9)" font-size="6.4" fill="#505050">30</text><text x="527.95" y="394.9" transform="rotate(.03 527.95 394.9)" font-size="6.4" fill="#505050">30</text><path d="M227.2 388L240.2 388" stroke="#b4b4b4" stroke-width="0.7"/><path d="M227.2 388.8L240.2 388.8" stroke="#dedede" stroke-width="0.9"/><path d="M523.75 388L536.75 388" stroke="#b4b4b4" stroke-width="0.7"/><path d="M523.75 388.8L536.75 388.8" stroke="#dedede" stroke-width="0.9"/><text x="228.4" y="415.95" transform="rotate(.03 228.4 415.95)" font-size="6.4" fill="#505050">29</text><text x="527.95" y="415.95" transform="rotate(.03 527.95 415.95)" font-size="6.4" fill="#505050">29</text><path d="M227.2 409.05L240.2 409.05" stroke="#b4b4b4" stroke-width="0.7"/><path d="M227.2 409.85L240.2 409.85" stroke="#dedede" stroke-width="0.9"/><path d="M523.75 409.05L536.75 409.05" stroke="#b4b4b4" stroke-width="0.7"/><path d="M523.75 409.85L536.75 409.85" stroke="#dedede" stroke-width="0.9"/><text x="228.4" y="436.7" transform="rotate(.03 228.4 436.7)" font-size="6.4" fill="#505050">28</text><text x="527.95" y="436.7" transform="rotate(.03 527.95 436.7)" font-size="6.4" fill="#505050">28</text><path d="M227.2 429.8L240.2 429.8" stroke="#b4b4b4" stroke-width="0.7"/><path d="M227.2 430.6L240.2 430.6" stroke="#dedede" stroke-width="0.9"/><path d="M523.75 429.8L536.75 429.8" stroke="#b4b4b4" stroke-width="0.7"/><path d="M523.75 430.6L536.75 430.6" stroke="#dedede" stroke-width="0.9"/><text x="228.4" y="457.9" transform="rotate(.03 228.4 457.9)" font-size="6.4" fill="#505050">27</text><text x="527.95" y="457.9" transform="rotate(.03 527.95 457.9)" font-size="6.4" fill="#505050">27</text><path d="M227.2 451L240.2 451" stroke="#b4b4b4" stroke-width="0.7"/><path d="M227.2 451.8L240.2 451.8" stroke="#dedede" stroke-width="0.9"/><path d="M523.75 451L536.75 451" stroke="#b4b4b4" stroke-width="0.7"/><path d="M523.75 451.8L536.75 451.8" stroke="#dedede" stroke-width="0.9"/><text x="228.4" y="479.2" transform="rotate(.03 228.4 479.2)" font-size="6.4" fill="#505050">26</text><text x="527.95" y="479.2" transform="rotate(.03 527.95 479.2)" font-size="6.4" fill="#505050">26</text><path d="M227.2 472.3L240.2 472.3" stroke="#b4b4b4" stroke-width="0.7"/><path d="M227.2 473.1L240.2 473.1" stroke="#dedede" stroke-width="0.9"/><path d="M523.75 472.3L536.75 472.3" stroke="#b4b4b4" stroke-width="0.7"/><path d="M523.75 473.1L536.75 473.1" stroke="#dedede" stroke-width="0.9"/><text x="228.4" y="497.8" transform="rotate(.03 228.4 497.8)" font-size="6.4" fill="#505050">25</text><text x="527.95" y="497.8" transform="rotate(.03 527.95 497.8)" font-size="6.4" fill="#505050">25</text><path d="M227.2 490.9L240.2 490.9" stroke="#b4b4b4" stroke-width="0.7"/><path d="M227.2 491.7L240.2 491.7" stroke="#dedede" stroke-width="0.9"/><path d="M523.75 490.9L536.75 490.9" stroke="#b4b4b4" stroke-width="0.7"/><path d="M523.75 491.7L536.75 491.7" stroke="#dedede" stroke-width="0.9"/><text x="228.4" y="518.3" transform="rotate(.03 228.4 518.3)" font-size="6.4" fill="#505050">24</text><text x="527.95" y="518.3" transform="rotate(.03 527.95 518.3)" font-size="6.4" fill="#505050">24</text><path d="M227.2 511.4L240.2 511.4" stroke="#b4b4b4" stroke-width="0.7"/><path d="M227.2 512.2L240.2 512.2" stroke="#dedede" stroke-width="0.9"/><path d="M523.75 511.4L536.75 511.4" stroke="#b4b4b4" stroke-width="0.7"/><path d="M523.75 512.2L536.75 512.2" stroke="#dedede" stroke-width="0.9"/><text x="228.4" y="539.2" transform="rotate(.03 228.4 539.2)" font-size="6.4" fill="#505050">23</text><text x="527.95" y="539.2" transform="rotate(.03 527.95 539.2)" font-size="6.4" fill="#505050">23</text><path d="M227.2 532.3L240.2 532.3" stroke="#b4b4b4" stroke-width="0.7"/><path d="M227.2 533.1L240.2 533.1" stroke="#dedede" stroke-width="0.9"/><path d="M523.75 532.3L536.75 532.3" stroke="#b4b4b4" stroke-width="0.7"/><path d="M523.75 533.1L536.75 533.1" stroke="#dedede" stroke-width="0.9"/><text x="228.4" y="560.2" transform="rotate(.03 228.4 560.2)" font-size="6.4" fill="#505050">22</text><text x="527.95" y="560.2" transform="rotate(.03 527.95 560.2)" font-size="6.4" fill="#505050">22</text><path d="M227.2 553.3L240.2 553.3" stroke="#b4b4b4" stroke-width="0.7"/><path d="M227.2 554.1L240.2 554.1" stroke="#dedede" stroke-width="0.9"/><path d="M523.75 553.3L536.75 553.3" stroke="#b4b4b4" stroke-width="0.7"/><path d="M523.75 554.1L536.75 554.1" stroke="#dedede" stroke-width="0.9"/><text x="228.4" y="581.2" transform="rotate(.03 228.4 581.2)" font-size="6.4" fill="#505050">21</text><text x="527.95" y="581.2" transform="rotate(.03 527.95 581.2)" font-size="6.4" fill="#505050">21</text><path d="M227.2 574.3L240.2 574.3" stroke="#b4b4b4" stroke-width="0.7"/><path d="M227.2 575.1L240.2 575.1" stroke="#dedede" stroke-width="0.9"/><path d="M523.75 574.3L536.75 574.3" stroke="#b4b4b4" stroke-width="0.7"/><path d="M523.75 575.1L536.75 575.1" stroke="#dedede" stroke-width="0.9"/><text x="228.4" y="602.2" transform="rotate(.03 228.4 602.2)" font-size="6.4" fill="#505050">20</text><text x="527.95" y="602.2" transform="rotate(.03 527.95 602.2)" font-size="6.4" fill="#505050">20</text><path d="M227.2 595.3L240.2 595.3" stroke="#b4b4b4" stroke-width="0.7"/><path d="M227.2 596.1L240.2 596.1" stroke="#dedede" stroke-width="0.9"/><path d="M523.75 595.3L536.75 595.3" stroke="#b4b4b4" stroke-width="0.7"/><path d="M523.75 596.1L536.75 596.1" stroke="#dedede" stroke-width="0.9"/><text x="228.4" y="622.7" transform="rotate(.03 228.4 622.7)" font-size="6.4" fill="#505050">19</text><text x="527.95" y="622.7" transform="rotate(.03 527.95 622.7)" font-size="6.4" fill="#505050">19</text><path d="M227.2 615.8L240.2 615.8" stroke="#b4b4b4" stroke-width="0.7"/><path d="M227.2 616.6L240.2 616.6" stroke="#dedede" stroke-width="0.9"/><path d="M523.75 615.8L536.75 615.8" stroke="#b4b4b4" stroke-width="0.7"/><path d="M523.75 616.6L536.75 616.6" stroke="#dedede" stroke-width="0.9"/><text x="228.4" y="644.2" transform="rotate(.03 228.4 644.2)" font-size="6.4" fill="#505050">18</text><text x="527.95" y="644.2" transform="rotate(.03 527.95 644.2)" font-size="6.4" fill="#505050">18</text><path d="M227.2 637.3L240.2 637.3" stroke="#b4b4b4" stroke-width="0.7"/><path d="M227.2 638.1L240.2 638.1" stroke="#dedede" stroke-width="0.9"/><path d="M523.75 637.3L536.75 637.3" stroke="#b4b4b4" stroke-width="0.7"/><path d="M523.75 638.1L536.75 638.1" stroke="#dedede" stroke-width="0.9"/><text x="228.4" y="665.3" transform="rotate(.03 228.4 665.3)" font-size="6.4" fill="#505050">17</text><text x="527.95" y="665.3" transform="rotate(.03 527.95 665.3)" font-size="6.4" fill="#505050">17</text><path d="M227.2 658.4L240.2 658.4" stroke="#b4b4b4" stroke-width="0.7"/><path d="M227.2 659.2L240.2 659.2" stroke="#dedede" stroke-width="0.9"/><path d="M523.75 658.4L536.75 658.4" stroke="#b4b4b4" stroke-width="0.7"/><path d="M523.75 659.2L536.75 659.2" stroke="#dedede" stroke-width="0.9"/><text x="228.4" y="685.6" transform="rotate(.03 228.4 685.6)" font-size="6.4" fill="#505050">16</text><text x="527.95" y="685.6" transform="rotate(.03 527.95 685.6)" font-size="6.4" fill="#505050">16</text><path d="M227.2 678.7L240.2 678.7" stroke="#b4b4b4" stroke-width="0.7"/><path d="M227.2 679.5L240.2 679.5" stroke="#dedede" stroke-width="0.9"/><path d="M523.75 678.7L536.75 678.7" stroke="#b4b4b4" stroke-width="0.7"/><path d="M523.75 679.5L536.75 679.5" stroke="#dedede" stroke-width="0.9"/><rect x="240.3" y="203" width="283.45" height="17.8" fill="#c0c0c0"/><text x="242" y="206.6" transform="rotate(.03 242 206.6)" font-size="5.6" fill="#000" font-weight="700" textLength="15" lengthAdjust="spacingAndGlyphs">CAT6,</text><text x="242" y="212.7" transform="rotate(.03 242 212.7)" font-size="5.6" fill="#000" font-weight="700" textLength="23.2" lengthAdjust="spacingAndGlyphs">24x RJ45</text><text x="243.5" y="218.3" transform="rotate(.03 243.5 218.3)" font-size="4.2" fill="#8c8c8c">PC6-1009</text><text x="283.7" y="207.2" transform="rotate(.03 283.7 207.2)" font-size="4.6" fill="#000" font-weight="700" text-anchor="middle">1</text><rect x="280.4" y="207.3" width="6.6" height="6.2" fill="#e6ffe6"/><rect x="281.4" y="208.2" width="4.6" height="4.4" fill="#00f000"/><rect x="281.8" y="214.8" width="3.8" height="3.8" fill="#18e018" stroke="#0a7a0a" stroke-width="0.9"/><text x="292.63" y="207.2" transform="rotate(.03 292.63 207.2)" font-size="4.6" fill="#000" font-weight="700" text-anchor="middle">2</text><rect x="289.33" y="207.3" width="6.6" height="6.2" fill="#fff"/><path d="M290.25 208.29H295.01V210.9Q295.01 212.63 292.63 212.63Q290.25 212.63 290.25 210.9Z" fill="#000"/><rect x="290.73" y="214.8" width="3.8" height="3.8" fill="#18e018" stroke="#0a7a0a" stroke-width="0.9"/><text x="301.56" y="207.2" transform="rotate(.03 301.56 207.2)" font-size="4.6" fill="#000" font-weight="700" text-anchor="middle">3</text><rect x="298.26" y="207.3" width="6.6" height="6.2" fill="#fff"/><path d="M299.18 208.29H303.94V210.9Q303.94 212.63 301.56 212.63Q299.18 212.63 299.18 210.9Z" fill="#000"/><rect x="299.66" y="214.8" width="3.8" height="3.8" fill="#18e018" stroke="#0a7a0a" stroke-width="0.9"/><text x="310.49" y="207.2" transform="rotate(.03 310.49 207.2)" font-size="4.6" fill="#000" font-weight="700" text-anchor="middle">4</text><rect x="307.19" y="207.3" width="6.6" height="6.2" fill="#fff"/><path d="M308.11 208.29H312.87V210.9Q312.87 212.63 310.49 212.63Q308.11 212.63 308.11 210.9Z" fill="#000"/><rect x="308.59" y="214.8" width="3.8" height="3.8" fill="#18e018" stroke="#0a7a0a" stroke-width="0.9"/><text x="319.42" y="207.2" transform="rotate(.03 319.42 207.2)" font-size="4.6" fill="#000" font-weight="700" text-anchor="middle">5</text><rect x="316.12" y="207.3" width="6.6" height="6.2" fill="#fff"/><path d="M317.04 208.29H321.8V210.9Q321.8 212.63 319.42 212.63Q317.04 212.63 317.04 210.9Z" fill="#000"/><rect x="317.52" y="214.8" width="3.8" height="3.8" fill="#18e018" stroke="#0a7a0a" stroke-width="0.9"/><text x="328.35" y="207.2" transform="rotate(.03 328.35 207.2)" font-size="4.6" fill="#000" font-weight="700" text-anchor="middle">6</text><rect x="325.05" y="207.3" width="6.6" height="6.2" fill="#fff"/><path d="M325.97 208.29H330.73V210.9Q330.73 212.63 328.35 212.63Q325.97 212.63 325.97 210.9Z" fill="#000"/><rect x="326.45" y="214.8" width="3.8" height="3.8" fill="#18e018" stroke="#0a7a0a" stroke-width="0.9"/><text x="337.28" y="207.2" transform="rotate(.03 337.28 207.2)" font-size="4.6" fill="#000" font-weight="700" text-anchor="middle">7</text><rect x="333.98" y="207.3" width="6.6" height="6.2" fill="#e6ffe6"/><rect x="334.98" y="208.2" width="4.6" height="4.4" fill="#00f000"/><rect x="335.38" y="214.8" width="3.8" height="3.8" fill="#18e018" stroke="#0a7a0a" stroke-width="0.9"/><text x="346.21" y="207.2" transform="rotate(.03 346.21 207.2)" font-size="4.6" fill="#000" font-weight="700" text-anchor="middle">8</text><rect x="342.91" y="207.3" width="6.6" height="6.2" fill="#fff"/><path d="M343.83 208.29H348.59V210.9Q348.59 212.63 346.21 212.63Q343.83 212.63 343.83 210.9Z" fill="#000"/><rect x="344.31" y="214.8" width="3.8" height="3.8" fill="#18e018" stroke="#0a7a0a" stroke-width="0.9"/><text x="355.14" y="207.2" transform="rotate(.03 355.14 207.2)" font-size="4.6" fill="#000" font-weight="700" text-anchor="middle">9</text><rect x="351.84" y="207.3" width="6.6" height="6.2" fill="#fff"/><path d="M352.76 208.29H357.52V210.9Q357.52 212.63 355.14 212.63Q352.76 212.63 352.76 210.9Z" fill="#000"/><rect x="353.24" y="214.8" width="3.8" height="3.8" fill="#18e018" stroke="#0a7a0a" stroke-width="0.9"/><text x="364.07" y="207.2" transform="rotate(.03 364.07 207.2)" font-size="4.6" fill="#000" font-weight="700" text-anchor="middle">10</text><rect x="360.77" y="207.3" width="6.6" height="6.2" fill="#fff"/><path d="M361.69 208.29H366.45V210.9Q366.45 212.63 364.07 212.63Q361.69 212.63 361.69 210.9Z" fill="#000"/><rect x="362.17" y="214.8" width="3.8" height="3.8" fill="#18e018" stroke="#0a7a0a" stroke-width="0.9"/><text x="373" y="207.2" transform="rotate(.03 373 207.2)" font-size="4.6" fill="#000" font-weight="700" text-anchor="middle">11</text><rect x="369.7" y="207.3" width="6.6" height="6.2" fill="#fff"/><path d="M370.62 208.29H375.38V210.9Q375.38 212.63 373 212.63Q370.62 212.63 370.62 210.9Z" fill="#000"/><rect x="371.1" y="214.8" width="3.8" height="3.8" fill="#18e018" stroke="#0a7a0a" stroke-width="0.9"/><text x="381.93" y="207.2" transform="rotate(.03 381.93 207.2)" font-size="4.6" fill="#000" font-weight="700" text-anchor="middle">12</text><rect x="378.63" y="207.3" width="6.6" height="6.2" fill="#e6ffe6"/><rect x="379.63" y="208.2" width="4.6" height="4.4" fill="#00f000"/><rect x="380.03" y="214.8" width="3.8" height="3.8" fill="#18e018" stroke="#0a7a0a" stroke-width="0.9"/><text x="390.86" y="207.2" transform="rotate(.03 390.86 207.2)" font-size="4.6" fill="#000" font-weight="700" text-anchor="middle">13</text><rect x="387.56" y="207.3" width="6.6" height="6.2" fill="#e6ffe6"/><rect x="388.56" y="208.2" width="4.6" height="4.4" fill="#00f000"/><rect x="388.96" y="214.8" width="3.8" height="3.8" fill="#18e018" stroke="#0a7a0a" stroke-width="0.9"/><text x="399.79" y="207.2" transform="rotate(.03 399.79 207.2)" font-size="4.6" fill="#000" font-weight="700" text-anchor="middle">14</text><rect x="396.49" y="207.3" width="6.6" height="6.2" fill="#e6ffe6"/><rect x="397.49" y="208.2" width="4.6" height="4.4" fill="#00f000"/><rect x="397.89" y="214.8" width="3.8" height="3.8" fill="#18e018" stroke="#0a7a0a" stroke-width="0.9"/><text x="408.72" y="207.2" transform="rotate(.03 408.72 207.2)" font-size="4.6" fill="#000" font-weight="700" text-anchor="middle">15</text><rect x="405.42" y="207.3" width="6.6" height="6.2" fill="#e6ffe6"/><rect x="406.42" y="208.2" width="4.6" height="4.4" fill="#00f000"/><rect x="406.82" y="214.8" width="3.8" height="3.8" fill="#18e018" stroke="#0a7a0a" stroke-width="0.9"/><text x="417.65" y="207.2" transform="rotate(.03 417.65 207.2)" font-size="4.6" fill="#000" font-weight="700" text-anchor="middle">16</text><rect x="414.35" y="207.3" width="6.6" height="6.2" fill="#e6ffe6"/><rect x="415.35" y="208.2" width="4.6" height="4.4" fill="#00f000"/><rect x="415.75" y="214.8" width="3.8" height="3.8" fill="#18e018" stroke="#0a7a0a" stroke-width="0.9"/><text x="426.58" y="207.2" transform="rotate(.03 426.58 207.2)" font-size="4.6" fill="#000" font-weight="700" text-anchor="middle">17</text><rect x="423.28" y="207.3" width="6.6" height="6.2" fill="#e6ffe6"/><rect x="424.28" y="208.2" width="4.6" height="4.4" fill="#00f000"/><rect x="424.68" y="214.8" width="3.8" height="3.8" fill="#18e018" stroke="#0a7a0a" stroke-width="0.9"/><text x="435.51" y="207.2" transform="rotate(.03 435.51 207.2)" font-size="4.6" fill="#000" font-weight="700" text-anchor="middle">18</text><rect x="432.21" y="207.3" width="6.6" height="6.2" fill="#e6ffe6"/><rect x="433.21" y="208.2" width="4.6" height="4.4" fill="#00f000"/><rect x="433.61" y="214.8" width="3.8" height="3.8" fill="#18e018" stroke="#0a7a0a" stroke-width="0.9"/><text x="444.44" y="207.2" transform="rotate(.03 444.44 207.2)" font-size="4.6" fill="#000" font-weight="700" text-anchor="middle">19</text><rect x="441.14" y="207.3" width="6.6" height="6.2" fill="#e6ffe6"/><rect x="442.14" y="208.2" width="4.6" height="4.4" fill="#00f000"/><rect x="442.54" y="214.8" width="3.8" height="3.8" fill="#18e018" stroke="#0a7a0a" stroke-width="0.9"/><text x="453.37" y="207.2" transform="rotate(.03 453.37 207.2)" font-size="4.6" fill="#000" font-weight="700" text-anchor="middle">20</text><rect x="450.07" y="207.3" width="6.6" height="6.2" fill="#e6ffe6"/><rect x="451.07" y="208.2" width="4.6" height="4.4" fill="#00f000"/><rect x="451.47" y="214.8" width="3.8" height="3.8" fill="#18e018" stroke="#0a7a0a" stroke-width="0.9"/><text x="462.3" y="207.2" transform="rotate(.03 462.3 207.2)" font-size="4.6" fill="#000" font-weight="700" text-anchor="middle">21</text><rect x="459" y="207.3" width="6.6" height="6.2" fill="#e6ffe6"/><rect x="460" y="208.2" width="4.6" height="4.4" fill="#00f000"/><rect x="460.4" y="214.8" width="3.8" height="3.8" fill="#18e018" stroke="#0a7a0a" stroke-width="0.9"/><text x="471.23" y="207.2" transform="rotate(.03 471.23 207.2)" font-size="4.6" fill="#000" font-weight="700" text-anchor="middle">22</text><rect x="467.93" y="207.3" width="6.6" height="6.2" fill="#e6ffe6"/><rect x="468.93" y="208.2" width="4.6" height="4.4" fill="#00f000"/><rect x="469.33" y="214.8" width="3.8" height="3.8" fill="#18e018" stroke="#0a7a0a" stroke-width="0.9"/><text x="480.16" y="207.2" transform="rotate(.03 480.16 207.2)" font-size="4.6" fill="#000" font-weight="700" text-anchor="middle">23</text><rect x="476.86" y="207.3" width="6.6" height="6.2" fill="#e6ffe6"/><rect x="477.86" y="208.2" width="4.6" height="4.4" fill="#00f000"/><rect x="478.26" y="214.8" width="3.8" height="3.8" fill="#18e018" stroke="#0a7a0a" stroke-width="0.9"/><text x="489.09" y="207.2" transform="rotate(.03 489.09 207.2)" font-size="4.6" fill="#000" font-weight="700" text-anchor="middle">24</text><rect x="485.79" y="207.3" width="6.6" height="6.2" fill="#e6ffe6"/><rect x="486.79" y="208.2" width="4.6" height="4.4" fill="#00f000"/><rect x="487.19" y="214.8" width="3.8" height="3.8" fill="#18e018" stroke="#0a7a0a" stroke-width="0.9"/><path d="M240.3 220.8L523.75 220.8" stroke="#000" stroke-width="1.3"/><rect x="240.3" y="220.8" width="283.45" height="21.1" fill="#c0c0c0"/><text x="241.6" y="226.4" transform="rotate(.03 241.6 226.4)" font-size="5.2" fill="#000" font-weight="700" textLength="7.6" lengthAdjust="spacingAndGlyphs">FO,</text><text x="241.3" y="232.2" transform="rotate(.03 241.3 232.2)" font-size="5.2" fill="#000" font-weight="700" textLength="14.6" lengthAdjust="spacingAndGlyphs">24x LC</text><text x="243" y="238.4" transform="rotate(.03 243 238.4)" font-size="3.6" fill="#8c8c8c">FO-1007</text><rect x="256.6" y="228" width="250" height="5.6" fill="#aaaaaa"/><rect x="257.2" y="225.8" width="7.4" height="9.4" fill="#1f7a1f"/><rect x="258.3" y="226.9" width="5.2" height="3.1" fill="#22b022"/><rect x="258.3" y="231" width="5.2" height="3.1" fill="#22b022"/><rect x="258.6" y="227.7" width="4.6" height="1.4" fill="#7dff7d"/><rect x="258.6" y="231.9" width="4.6" height="1.4" fill="#7dff7d"/><text x="260.9" y="240.1" transform="rotate(.03 260.9 240.1)" font-size="5" fill="#111" text-anchor="middle">1</text><rect x="267.69" y="225.8" width="7.4" height="9.4" fill="#3c3c3c"/><rect x="268.79" y="226.9" width="5.2" height="3.1" fill="#4a4a4a"/><rect x="268.79" y="231" width="5.2" height="3.1" fill="#4a4a4a"/><rect x="269.09" y="227.7" width="4.6" height="1.4" fill="#fff"/><rect x="269.09" y="231.9" width="4.6" height="1.4" fill="#fff"/><text x="271.39" y="240.1" transform="rotate(.03 271.39 240.1)" font-size="5" fill="#111" text-anchor="middle">2</text><rect x="278.18" y="225.8" width="7.4" height="9.4" fill="#3c3c3c"/><rect x="279.28" y="226.9" width="5.2" height="3.1" fill="#4a4a4a"/><rect x="279.28" y="231" width="5.2" height="3.1" fill="#4a4a4a"/><rect x="279.58" y="227.7" width="4.6" height="1.4" fill="#fff"/><rect x="279.58" y="231.9" width="4.6" height="1.4" fill="#fff"/><text x="281.88" y="240.1" transform="rotate(.03 281.88 240.1)" font-size="5" fill="#111" text-anchor="middle">3</text><rect x="288.67" y="225.8" width="7.4" height="9.4" fill="#3c3c3c"/><rect x="289.77" y="226.9" width="5.2" height="3.1" fill="#4a4a4a"/><rect x="289.77" y="231" width="5.2" height="3.1" fill="#4a4a4a"/><rect x="290.07" y="227.7" width="4.6" height="1.4" fill="#fff"/><rect x="290.07" y="231.9" width="4.6" height="1.4" fill="#fff"/><text x="292.37" y="240.1" transform="rotate(.03 292.37 240.1)" font-size="5" fill="#111" text-anchor="middle">4</text><rect x="299.16" y="225.8" width="7.4" height="9.4" fill="#3c3c3c"/><rect x="300.26" y="226.9" width="5.2" height="3.1" fill="#4a4a4a"/><rect x="300.26" y="231" width="5.2" height="3.1" fill="#4a4a4a"/><rect x="300.56" y="227.7" width="4.6" height="1.4" fill="#fff"/><rect x="300.56" y="231.9" width="4.6" height="1.4" fill="#fff"/><text x="302.86" y="240.1" transform="rotate(.03 302.86 240.1)" font-size="5" fill="#111" text-anchor="middle">5</text><rect x="309.65" y="225.8" width="7.4" height="9.4" fill="#3c3c3c"/><rect x="310.75" y="226.9" width="5.2" height="3.1" fill="#4a4a4a"/><rect x="310.75" y="231" width="5.2" height="3.1" fill="#4a4a4a"/><rect x="311.05" y="227.7" width="4.6" height="1.4" fill="#fff"/><rect x="311.05" y="231.9" width="4.6" height="1.4" fill="#fff"/><text x="313.35" y="240.1" transform="rotate(.03 313.35 240.1)" font-size="5" fill="#111" text-anchor="middle">6</text><rect x="320.14" y="225.8" width="7.4" height="9.4" fill="#3c3c3c"/><rect x="321.24" y="226.9" width="5.2" height="3.1" fill="#4a4a4a"/><rect x="321.24" y="231" width="5.2" height="3.1" fill="#4a4a4a"/><rect x="321.54" y="227.7" width="4.6" height="1.4" fill="#fff"/><rect x="321.54" y="231.9" width="4.6" height="1.4" fill="#fff"/><text x="323.84" y="240.1" transform="rotate(.03 323.84 240.1)" font-size="5" fill="#111" text-anchor="middle">7</text><rect x="330.63" y="225.8" width="7.4" height="9.4" fill="#3c3c3c"/><rect x="331.73" y="226.9" width="5.2" height="3.1" fill="#4a4a4a"/><rect x="331.73" y="231" width="5.2" height="3.1" fill="#4a4a4a"/><rect x="332.03" y="227.7" width="4.6" height="1.4" fill="#fff"/><rect x="332.03" y="231.9" width="4.6" height="1.4" fill="#fff"/><text x="334.33" y="240.1" transform="rotate(.03 334.33 240.1)" font-size="5" fill="#111" text-anchor="middle">8</text><rect x="341.12" y="225.8" width="7.4" height="9.4" fill="#3c3c3c"/><rect x="342.22" y="226.9" width="5.2" height="3.1" fill="#4a4a4a"/><rect x="342.22" y="231" width="5.2" height="3.1" fill="#4a4a4a"/><rect x="342.52" y="227.7" width="4.6" height="1.4" fill="#fff"/><rect x="342.52" y="231.9" width="4.6" height="1.4" fill="#fff"/><text x="344.82" y="240.1" transform="rotate(.03 344.82 240.1)" font-size="5" fill="#111" text-anchor="middle">9</text><rect x="351.61" y="225.8" width="7.4" height="9.4" fill="#3c3c3c"/><rect x="352.71" y="226.9" width="5.2" height="3.1" fill="#4a4a4a"/><rect x="352.71" y="231" width="5.2" height="3.1" fill="#4a4a4a"/><rect x="353.01" y="227.7" width="4.6" height="1.4" fill="#fff"/><rect x="353.01" y="231.9" width="4.6" height="1.4" fill="#fff"/><text x="355.31" y="240.1" transform="rotate(.03 355.31 240.1)" font-size="5" fill="#111" text-anchor="middle">10</text><rect x="362.1" y="225.8" width="7.4" height="9.4" fill="#16167a"/><rect x="363.2" y="226.9" width="5.2" height="3.1" fill="#1414b4"/><rect x="363.2" y="231" width="5.2" height="3.1" fill="#1414b4"/><rect x="363.5" y="227.7" width="4.6" height="1.4" fill="#3450f0"/><rect x="363.5" y="231.9" width="4.6" height="1.4" fill="#3450f0"/><text x="365.8" y="240.1" transform="rotate(.03 365.8 240.1)" font-size="5" fill="#111" text-anchor="middle">11</text><rect x="372.59" y="225.8" width="7.4" height="9.4" fill="#16167a"/><rect x="373.69" y="226.9" width="5.2" height="3.1" fill="#1414b4"/><rect x="373.69" y="231" width="5.2" height="3.1" fill="#1414b4"/><rect x="373.99" y="227.7" width="4.6" height="1.4" fill="#3450f0"/><rect x="373.99" y="231.9" width="4.6" height="1.4" fill="#3450f0"/><text x="376.29" y="240.1" transform="rotate(.03 376.29 240.1)" font-size="5" fill="#111" text-anchor="middle">12</text><rect x="383.08" y="225.8" width="7.4" height="9.4" fill="#3c3c3c"/><rect x="384.18" y="226.9" width="5.2" height="3.1" fill="#4a4a4a"/><rect x="384.18" y="231" width="5.2" height="3.1" fill="#4a4a4a"/><rect x="384.48" y="227.7" width="4.6" height="1.4" fill="#fff"/><rect x="384.48" y="231.9" width="4.6" height="1.4" fill="#fff"/><text x="386.78" y="240.1" transform="rotate(.03 386.78 240.1)" font-size="5" fill="#111" text-anchor="middle">13</text><rect x="393.57" y="225.8" width="7.4" height="9.4" fill="#3c3c3c"/><rect x="394.67" y="226.9" width="5.2" height="3.1" fill="#4a4a4a"/><rect x="394.67" y="231" width="5.2" height="3.1" fill="#4a4a4a"/><rect x="394.97" y="227.7" width="4.6" height="1.4" fill="#fff"/><rect x="394.97" y="231.9" width="4.6" height="1.4" fill="#fff"/><text x="397.27" y="240.1" transform="rotate(.03 397.27 240.1)" font-size="5" fill="#111" text-anchor="middle">14</text><rect x="404.06" y="225.8" width="7.4" height="9.4" fill="#3c3c3c"/><rect x="405.16" y="226.9" width="5.2" height="3.1" fill="#4a4a4a"/><rect x="405.16" y="231" width="5.2" height="3.1" fill="#4a4a4a"/><rect x="405.46" y="227.7" width="4.6" height="1.4" fill="#fff"/><rect x="405.46" y="231.9" width="4.6" height="1.4" fill="#fff"/><text x="407.76" y="240.1" transform="rotate(.03 407.76 240.1)" font-size="5" fill="#111" text-anchor="middle">15</text><rect x="414.55" y="225.8" width="7.4" height="9.4" fill="#3c3c3c"/><rect x="415.65" y="226.9" width="5.2" height="3.1" fill="#4a4a4a"/><rect x="415.65" y="231" width="5.2" height="3.1" fill="#4a4a4a"/><rect x="415.95" y="227.7" width="4.6" height="1.4" fill="#fff"/><rect x="415.95" y="231.9" width="4.6" height="1.4" fill="#fff"/><text x="418.25" y="240.1" transform="rotate(.03 418.25 240.1)" font-size="5" fill="#111" text-anchor="middle">16</text><rect x="425.04" y="225.8" width="7.4" height="9.4" fill="#3c3c3c"/><rect x="426.14" y="226.9" width="5.2" height="3.1" fill="#4a4a4a"/><rect x="426.14" y="231" width="5.2" height="3.1" fill="#4a4a4a"/><rect x="426.44" y="227.7" width="4.6" height="1.4" fill="#fff"/><rect x="426.44" y="231.9" width="4.6" height="1.4" fill="#fff"/><text x="428.74" y="240.1" transform="rotate(.03 428.74 240.1)" font-size="5" fill="#111" text-anchor="middle">17</text><rect x="435.53" y="225.8" width="7.4" height="9.4" fill="#16167a"/><rect x="436.63" y="226.9" width="5.2" height="3.1" fill="#1414b4"/><rect x="436.63" y="231" width="5.2" height="3.1" fill="#1414b4"/><rect x="436.93" y="227.7" width="4.6" height="1.4" fill="#3450f0"/><rect x="436.93" y="231.9" width="4.6" height="1.4" fill="#3450f0"/><text x="439.23" y="240.1" transform="rotate(.03 439.23 240.1)" font-size="5" fill="#111" text-anchor="middle">18</text><rect x="446.02" y="225.8" width="7.4" height="9.4" fill="#3c3c3c"/><rect x="447.12" y="226.9" width="5.2" height="3.1" fill="#4a4a4a"/><rect x="447.12" y="231" width="5.2" height="3.1" fill="#4a4a4a"/><rect x="447.42" y="227.7" width="4.6" height="1.4" fill="#fff"/><rect x="447.42" y="231.9" width="4.6" height="1.4" fill="#fff"/><text x="449.72" y="240.1" transform="rotate(.03 449.72 240.1)" font-size="5" fill="#111" text-anchor="middle">19</text><rect x="456.51" y="225.8" width="7.4" height="9.4" fill="#7a1616"/><rect x="457.61" y="226.9" width="5.2" height="3.1" fill="#b41c1c"/><rect x="457.61" y="231" width="5.2" height="3.1" fill="#b41c1c"/><rect x="457.91" y="227.7" width="4.6" height="1.4" fill="#f04040"/><rect x="457.91" y="231.9" width="4.6" height="1.4" fill="#f04040"/><text x="460.21" y="240.1" transform="rotate(.03 460.21 240.1)" font-size="5" fill="#111" text-anchor="middle">20</text><rect x="467" y="225.8" width="7.4" height="9.4" fill="#7a1616"/><rect x="468.1" y="226.9" width="5.2" height="3.1" fill="#b41c1c"/><rect x="468.1" y="231" width="5.2" height="3.1" fill="#b41c1c"/><rect x="468.4" y="227.7" width="4.6" height="1.4" fill="#f04040"/><rect x="468.4" y="231.9" width="4.6" height="1.4" fill="#f04040"/><text x="470.7" y="240.1" transform="rotate(.03 470.7 240.1)" font-size="5" fill="#111" text-anchor="middle">21</text><rect x="477.49" y="225.8" width="7.4" height="9.4" fill="#3c3c3c"/><rect x="478.59" y="226.9" width="5.2" height="3.1" fill="#4a4a4a"/><rect x="478.59" y="231" width="5.2" height="3.1" fill="#4a4a4a"/><rect x="478.89" y="227.7" width="4.6" height="1.4" fill="#fff"/><rect x="478.89" y="231.9" width="4.6" height="1.4" fill="#fff"/><text x="481.19" y="240.1" transform="rotate(.03 481.19 240.1)" font-size="5" fill="#111" text-anchor="middle">22</text><rect x="487.98" y="225.8" width="7.4" height="9.4" fill="#3c3c3c"/><rect x="489.08" y="226.9" width="5.2" height="3.1" fill="#4a4a4a"/><rect x="489.08" y="231" width="5.2" height="3.1" fill="#4a4a4a"/><rect x="489.38" y="227.7" width="4.6" height="1.4" fill="#fff"/><rect x="489.38" y="231.9" width="4.6" height="1.4" fill="#fff"/><text x="491.68" y="240.1" transform="rotate(.03 491.68 240.1)" font-size="5" fill="#111" text-anchor="middle">23</text><rect x="498.47" y="225.8" width="7.4" height="9.4" fill="#3c3c3c"/><rect x="499.57" y="226.9" width="5.2" height="3.1" fill="#4a4a4a"/><rect x="499.57" y="231" width="5.2" height="3.1" fill="#4a4a4a"/><rect x="499.87" y="227.7" width="4.6" height="1.4" fill="#fff"/><rect x="499.87" y="231.9" width="4.6" height="1.4" fill="#fff"/><text x="502.17" y="240.1" transform="rotate(.03 502.17 240.1)" font-size="5" fill="#111" text-anchor="middle">24</text><path d="M240.3 241.9L523.75 241.9" stroke="#000" stroke-width="1.3"/><rect x="240.3" y="241.9" width="283.45" height="21.1" fill="#c0c0c0"/><text x="241.6" y="247.5" transform="rotate(.03 241.6 247.5)" font-size="5.2" fill="#000" font-weight="700" textLength="7.6" lengthAdjust="spacingAndGlyphs">FO,</text><text x="241.3" y="253.3" transform="rotate(.03 241.3 253.3)" font-size="5.2" fill="#000" font-weight="700" textLength="14.6" lengthAdjust="spacingAndGlyphs">24x LC</text><text x="243" y="259.5" transform="rotate(.03 243 259.5)" font-size="3.6" fill="#8c8c8c">FO-1008</text><rect x="256.6" y="249.1" width="250" height="5.6" fill="#aaaaaa"/><rect x="257.2" y="246.9" width="7.4" height="9.4" fill="#1f7a1f"/><rect x="258.3" y="248" width="5.2" height="3.1" fill="#22b022"/><rect x="258.3" y="252.1" width="5.2" height="3.1" fill="#22b022"/><rect x="258.6" y="248.8" width="4.6" height="1.4" fill="#7dff7d"/><rect x="258.6" y="253" width="4.6" height="1.4" fill="#7dff7d"/><text x="260.9" y="261.2" transform="rotate(.03 260.9 261.2)" font-size="5" fill="#111" text-anchor="middle">1</text><rect x="267.69" y="246.9" width="7.4" height="9.4" fill="#3c3c3c"/><rect x="268.79" y="248" width="5.2" height="3.1" fill="#4a4a4a"/><rect x="268.79" y="252.1" width="5.2" height="3.1" fill="#4a4a4a"/><rect x="269.09" y="248.8" width="4.6" height="1.4" fill="#fff"/><rect x="269.09" y="253" width="4.6" height="1.4" fill="#fff"/><text x="271.39" y="261.2" transform="rotate(.03 271.39 261.2)" font-size="5" fill="#111" text-anchor="middle">2</text><rect x="278.18" y="246.9" width="7.4" height="9.4" fill="#3c3c3c"/><rect x="279.28" y="248" width="5.2" height="3.1" fill="#4a4a4a"/><rect x="279.28" y="252.1" width="5.2" height="3.1" fill="#4a4a4a"/><rect x="279.58" y="248.8" width="4.6" height="1.4" fill="#fff"/><rect x="279.58" y="253" width="4.6" height="1.4" fill="#fff"/><text x="281.88" y="261.2" transform="rotate(.03 281.88 261.2)" font-size="5" fill="#111" text-anchor="middle">3</text><rect x="288.67" y="246.9" width="7.4" height="9.4" fill="#3c3c3c"/><rect x="289.77" y="248" width="5.2" height="3.1" fill="#4a4a4a"/><rect x="289.77" y="252.1" width="5.2" height="3.1" fill="#4a4a4a"/><rect x="290.07" y="248.8" width="4.6" height="1.4" fill="#fff"/><rect x="290.07" y="253" width="4.6" height="1.4" fill="#fff"/><text x="292.37" y="261.2" transform="rotate(.03 292.37 261.2)" font-size="5" fill="#111" text-anchor="middle">4</text><rect x="299.16" y="246.9" width="7.4" height="9.4" fill="#3c3c3c"/><rect x="300.26" y="248" width="5.2" height="3.1" fill="#4a4a4a"/><rect x="300.26" y="252.1" width="5.2" height="3.1" fill="#4a4a4a"/><rect x="300.56" y="248.8" width="4.6" height="1.4" fill="#fff"/><rect x="300.56" y="253" width="4.6" height="1.4" fill="#fff"/><text x="302.86" y="261.2" transform="rotate(.03 302.86 261.2)" font-size="5" fill="#111" text-anchor="middle">5</text><rect x="309.65" y="246.9" width="7.4" height="9.4" fill="#3c3c3c"/><rect x="310.75" y="248" width="5.2" height="3.1" fill="#4a4a4a"/><rect x="310.75" y="252.1" width="5.2" height="3.1" fill="#4a4a4a"/><rect x="311.05" y="248.8" width="4.6" height="1.4" fill="#fff"/><rect x="311.05" y="253" width="4.6" height="1.4" fill="#fff"/><text x="313.35" y="261.2" transform="rotate(.03 313.35 261.2)" font-size="5" fill="#111" text-anchor="middle">6</text><rect x="320.14" y="246.9" width="7.4" height="9.4" fill="#3c3c3c"/><rect x="321.24" y="248" width="5.2" height="3.1" fill="#4a4a4a"/><rect x="321.24" y="252.1" width="5.2" height="3.1" fill="#4a4a4a"/><rect x="321.54" y="248.8" width="4.6" height="1.4" fill="#fff"/><rect x="321.54" y="253" width="4.6" height="1.4" fill="#fff"/><text x="323.84" y="261.2" transform="rotate(.03 323.84 261.2)" font-size="5" fill="#111" text-anchor="middle">7</text><rect x="330.63" y="246.9" width="7.4" height="9.4" fill="#3c3c3c"/><rect x="331.73" y="248" width="5.2" height="3.1" fill="#4a4a4a"/><rect x="331.73" y="252.1" width="5.2" height="3.1" fill="#4a4a4a"/><rect x="332.03" y="248.8" width="4.6" height="1.4" fill="#fff"/><rect x="332.03" y="253" width="4.6" height="1.4" fill="#fff"/><text x="334.33" y="261.2" transform="rotate(.03 334.33 261.2)" font-size="5" fill="#111" text-anchor="middle">8</text><rect x="341.12" y="246.9" width="7.4" height="9.4" fill="#3c3c3c"/><rect x="342.22" y="248" width="5.2" height="3.1" fill="#4a4a4a"/><rect x="342.22" y="252.1" width="5.2" height="3.1" fill="#4a4a4a"/><rect x="342.52" y="248.8" width="4.6" height="1.4" fill="#fff"/><rect x="342.52" y="253" width="4.6" height="1.4" fill="#fff"/><text x="344.82" y="261.2" transform="rotate(.03 344.82 261.2)" font-size="5" fill="#111" text-anchor="middle">9</text><rect x="351.61" y="246.9" width="7.4" height="9.4" fill="#3c3c3c"/><rect x="352.71" y="248" width="5.2" height="3.1" fill="#4a4a4a"/><rect x="352.71" y="252.1" width="5.2" height="3.1" fill="#4a4a4a"/><rect x="353.01" y="248.8" width="4.6" height="1.4" fill="#fff"/><rect x="353.01" y="253" width="4.6" height="1.4" fill="#fff"/><text x="355.31" y="261.2" transform="rotate(.03 355.31 261.2)" font-size="5" fill="#111" text-anchor="middle">10</text><rect x="362.1" y="246.9" width="7.4" height="9.4" fill="#3c3c3c"/><rect x="363.2" y="248" width="5.2" height="3.1" fill="#4a4a4a"/><rect x="363.2" y="252.1" width="5.2" height="3.1" fill="#4a4a4a"/><rect x="363.5" y="248.8" width="4.6" height="1.4" fill="#fff"/><rect x="363.5" y="253" width="4.6" height="1.4" fill="#fff"/><text x="365.8" y="261.2" transform="rotate(.03 365.8 261.2)" font-size="5" fill="#111" text-anchor="middle">11</text><rect x="372.59" y="246.9" width="7.4" height="9.4" fill="#3c3c3c"/><rect x="373.69" y="248" width="5.2" height="3.1" fill="#4a4a4a"/><rect x="373.69" y="252.1" width="5.2" height="3.1" fill="#4a4a4a"/><rect x="373.99" y="248.8" width="4.6" height="1.4" fill="#fff"/><rect x="373.99" y="253" width="4.6" height="1.4" fill="#fff"/><text x="376.29" y="261.2" transform="rotate(.03 376.29 261.2)" font-size="5" fill="#111" text-anchor="middle">12</text><rect x="383.08" y="246.9" width="7.4" height="9.4" fill="#3c3c3c"/><rect x="384.18" y="248" width="5.2" height="3.1" fill="#4a4a4a"/><rect x="384.18" y="252.1" width="5.2" height="3.1" fill="#4a4a4a"/><rect x="384.48" y="248.8" width="4.6" height="1.4" fill="#fff"/><rect x="384.48" y="253" width="4.6" height="1.4" fill="#fff"/><text x="386.78" y="261.2" transform="rotate(.03 386.78 261.2)" font-size="5" fill="#111" text-anchor="middle">13</text><rect x="393.57" y="246.9" width="7.4" height="9.4" fill="#3c3c3c"/><rect x="394.67" y="248" width="5.2" height="3.1" fill="#4a4a4a"/><rect x="394.67" y="252.1" width="5.2" height="3.1" fill="#4a4a4a"/><rect x="394.97" y="248.8" width="4.6" height="1.4" fill="#fff"/><rect x="394.97" y="253" width="4.6" height="1.4" fill="#fff"/><text x="397.27" y="261.2" transform="rotate(.03 397.27 261.2)" font-size="5" fill="#111" text-anchor="middle">14</text><rect x="404.06" y="246.9" width="7.4" height="9.4" fill="#7a1616"/><rect x="405.16" y="248" width="5.2" height="3.1" fill="#b41c1c"/><rect x="405.16" y="252.1" width="5.2" height="3.1" fill="#b41c1c"/><rect x="405.46" y="248.8" width="4.6" height="1.4" fill="#f04040"/><rect x="405.46" y="253" width="4.6" height="1.4" fill="#f04040"/><text x="407.76" y="261.2" transform="rotate(.03 407.76 261.2)" font-size="5" fill="#111" text-anchor="middle">15</text><rect x="414.55" y="246.9" width="7.4" height="9.4" fill="#7a1616"/><rect x="415.65" y="248" width="5.2" height="3.1" fill="#b41c1c"/><rect x="415.65" y="252.1" width="5.2" height="3.1" fill="#b41c1c"/><rect x="415.95" y="248.8" width="4.6" height="1.4" fill="#f04040"/><rect x="415.95" y="253" width="4.6" height="1.4" fill="#f04040"/><text x="418.25" y="261.2" transform="rotate(.03 418.25 261.2)" font-size="5" fill="#111" text-anchor="middle">16</text><rect x="425.04" y="246.9" width="7.4" height="9.4" fill="#3c3c3c"/><rect x="426.14" y="248" width="5.2" height="3.1" fill="#4a4a4a"/><rect x="426.14" y="252.1" width="5.2" height="3.1" fill="#4a4a4a"/><rect x="426.44" y="248.8" width="4.6" height="1.4" fill="#fff"/><rect x="426.44" y="253" width="4.6" height="1.4" fill="#fff"/><text x="428.74" y="261.2" transform="rotate(.03 428.74 261.2)" font-size="5" fill="#111" text-anchor="middle">17</text><rect x="435.53" y="246.9" width="7.4" height="9.4" fill="#3c3c3c"/><rect x="436.63" y="248" width="5.2" height="3.1" fill="#4a4a4a"/><rect x="436.63" y="252.1" width="5.2" height="3.1" fill="#4a4a4a"/><rect x="436.93" y="248.8" width="4.6" height="1.4" fill="#fff"/><rect x="436.93" y="253" width="4.6" height="1.4" fill="#fff"/><text x="439.23" y="261.2" transform="rotate(.03 439.23 261.2)" font-size="5" fill="#111" text-anchor="middle">18</text><rect x="446.02" y="246.9" width="7.4" height="9.4" fill="#3c3c3c"/><rect x="447.12" y="248" width="5.2" height="3.1" fill="#4a4a4a"/><rect x="447.12" y="252.1" width="5.2" height="3.1" fill="#4a4a4a"/><rect x="447.42" y="248.8" width="4.6" height="1.4" fill="#fff"/><rect x="447.42" y="253" width="4.6" height="1.4" fill="#fff"/><text x="449.72" y="261.2" transform="rotate(.03 449.72 261.2)" font-size="5" fill="#111" text-anchor="middle">19</text><rect x="456.51" y="246.9" width="7.4" height="9.4" fill="#3c3c3c"/><rect x="457.61" y="248" width="5.2" height="3.1" fill="#4a4a4a"/><rect x="457.61" y="252.1" width="5.2" height="3.1" fill="#4a4a4a"/><rect x="457.91" y="248.8" width="4.6" height="1.4" fill="#fff"/><rect x="457.91" y="253" width="4.6" height="1.4" fill="#fff"/><text x="460.21" y="261.2" transform="rotate(.03 460.21 261.2)" font-size="5" fill="#111" text-anchor="middle">20</text><rect x="467" y="246.9" width="7.4" height="9.4" fill="#3c3c3c"/><rect x="468.1" y="248" width="5.2" height="3.1" fill="#4a4a4a"/><rect x="468.1" y="252.1" width="5.2" height="3.1" fill="#4a4a4a"/><rect x="468.4" y="248.8" width="4.6" height="1.4" fill="#fff"/><rect x="468.4" y="253" width="4.6" height="1.4" fill="#fff"/><text x="470.7" y="261.2" transform="rotate(.03 470.7 261.2)" font-size="5" fill="#111" text-anchor="middle">21</text><rect x="477.49" y="246.9" width="7.4" height="9.4" fill="#3c3c3c"/><rect x="478.59" y="248" width="5.2" height="3.1" fill="#4a4a4a"/><rect x="478.59" y="252.1" width="5.2" height="3.1" fill="#4a4a4a"/><rect x="478.89" y="248.8" width="4.6" height="1.4" fill="#fff"/><rect x="478.89" y="253" width="4.6" height="1.4" fill="#fff"/><text x="481.19" y="261.2" transform="rotate(.03 481.19 261.2)" font-size="5" fill="#111" text-anchor="middle">22</text><rect x="487.98" y="246.9" width="7.4" height="9.4" fill="#3c3c3c"/><rect x="489.08" y="248" width="5.2" height="3.1" fill="#4a4a4a"/><rect x="489.08" y="252.1" width="5.2" height="3.1" fill="#4a4a4a"/><rect x="489.38" y="248.8" width="4.6" height="1.4" fill="#fff"/><rect x="489.38" y="253" width="4.6" height="1.4" fill="#fff"/><text x="491.68" y="261.2" transform="rotate(.03 491.68 261.2)" font-size="5" fill="#111" text-anchor="middle">23</text><rect x="498.47" y="246.9" width="7.4" height="9.4" fill="#3c3c3c"/><rect x="499.57" y="248" width="5.2" height="3.1" fill="#4a4a4a"/><rect x="499.57" y="252.1" width="5.2" height="3.1" fill="#4a4a4a"/><rect x="499.87" y="248.8" width="4.6" height="1.4" fill="#fff"/><rect x="499.87" y="253" width="4.6" height="1.4" fill="#fff"/><text x="502.17" y="261.2" transform="rotate(.03 502.17 261.2)" font-size="5" fill="#111" text-anchor="middle">24</text><path d="M240.3 263L523.75 263" stroke="#000" stroke-width="1.3"/><rect x="240.3" y="263" width="283.45" height="21.2" fill="#c6c6c6"/><rect x="262.8" y="264.6" width="4.6" height="7.8" fill="#f4f4f4" stroke="#bdbdbd" stroke-width="0.5" rx="1"/><rect x="262.8" y="274.8" width="4.6" height="7.8" fill="#f4f4f4" stroke="#bdbdbd" stroke-width="0.5" rx="1"/><rect x="321.5" y="264.6" width="4.6" height="7.8" fill="#f4f4f4" stroke="#bdbdbd" stroke-width="0.5" rx="1"/><rect x="321.5" y="274.8" width="4.6" height="7.8" fill="#f4f4f4" stroke="#bdbdbd" stroke-width="0.5" rx="1"/><rect x="380.2" y="264.6" width="4.6" height="7.8" fill="#f4f4f4" stroke="#bdbdbd" stroke-width="0.5" rx="1"/><rect x="380.2" y="274.8" width="4.6" height="7.8" fill="#f4f4f4" stroke="#bdbdbd" stroke-width="0.5" rx="1"/><rect x="438.9" y="264.6" width="4.6" height="7.8" fill="#f4f4f4" stroke="#bdbdbd" stroke-width="0.5" rx="1"/><rect x="438.9" y="274.8" width="4.6" height="7.8" fill="#f4f4f4" stroke="#bdbdbd" stroke-width="0.5" rx="1"/><rect x="497.6" y="264.6" width="4.6" height="7.8" fill="#f4f4f4" stroke="#bdbdbd" stroke-width="0.5" rx="1"/><rect x="497.6" y="274.8" width="4.6" height="7.8" fill="#f4f4f4" stroke="#bdbdbd" stroke-width="0.5" rx="1"/><text x="270" y="271" transform="rotate(.03 270 271)" font-size="5.2" fill="#7a7a7a">RAN-1008</text><path d="M240.3 284.2L523.75 284.2" stroke="#000" stroke-width="1.3"/><rect x="240.3" y="284.2" width="283.45" height="20.3" fill="#c0c0c0"/><text x="242" y="290.4" transform="rotate(.03 242 290.4)" font-size="5.5" fill="#000" font-weight="700" textLength="40" lengthAdjust="spacingAndGlyphs">CAT6, 16x RJ45</text><text x="243.5" y="301.6" transform="rotate(.03 243.5 301.6)" font-size="4.2" fill="#8c8c8c">PC6-2870</text><text x="299.8" y="288.8" transform="rotate(.03 299.8 288.8)" font-size="4.4" fill="#000" font-weight="700" text-anchor="middle">1</text><rect x="295.3" y="289.4" width="9" height="9.2" fill="#e8ffe8"/><path d="M296.5 290.6H303.1V295.2Q303.1 297.6 299.8 297.6Q296.5 297.6 296.5 295.2Z" fill="#10f010"/><rect x="298.2" y="299.8" width="3.2" height="3.2" fill="#e8e8e8" stroke="#333" stroke-width="0.8"/><text x="310.83" y="288.8" transform="rotate(.03 310.83 288.8)" font-size="4.4" fill="#000" font-weight="700" text-anchor="middle">2</text><rect x="306.33" y="289.4" width="9" height="9.2" fill="#fff"/><path d="M307.59 290.87H314.07V294.74Q314.07 297.31 310.83 297.31Q307.59 297.31 307.59 294.74Z" fill="#000"/><rect x="309.23" y="299.8" width="3.2" height="3.2" fill="#e8e8e8" stroke="#333" stroke-width="0.8"/><text x="321.86" y="288.8" transform="rotate(.03 321.86 288.8)" font-size="4.4" fill="#000" font-weight="700" text-anchor="middle">3</text><rect x="317.36" y="289.4" width="9" height="9.2" fill="#fff"/><path d="M318.62 290.87H325.1V294.74Q325.1 297.31 321.86 297.31Q318.62 297.31 318.62 294.74Z" fill="#000"/><rect x="320.26" y="299.8" width="3.2" height="3.2" fill="#e8e8e8" stroke="#333" stroke-width="0.8"/><text x="332.89" y="288.8" transform="rotate(.03 332.89 288.8)" font-size="4.4" fill="#000" font-weight="700" text-anchor="middle">4</text><rect x="328.39" y="289.4" width="9" height="9.2" fill="#fff"/><path d="M329.65 290.87H336.13V294.74Q336.13 297.31 332.89 297.31Q329.65 297.31 329.65 294.74Z" fill="#000"/><rect x="331.29" y="299.8" width="3.2" height="3.2" fill="#e8e8e8" stroke="#333" stroke-width="0.8"/><text x="343.92" y="288.8" transform="rotate(.03 343.92 288.8)" font-size="4.4" fill="#000" font-weight="700" text-anchor="middle">5</text><rect x="339.42" y="289.4" width="9" height="9.2" fill="#fff"/><path d="M340.68 290.87H347.16V294.74Q347.16 297.31 343.92 297.31Q340.68 297.31 340.68 294.74Z" fill="#000"/><rect x="342.32" y="299.8" width="3.2" height="3.2" fill="#e8e8e8" stroke="#333" stroke-width="0.8"/><text x="354.95" y="288.8" transform="rotate(.03 354.95 288.8)" font-size="4.4" fill="#000" font-weight="700" text-anchor="middle">6</text><rect x="350.45" y="289.4" width="9" height="9.2" fill="#fff"/><path d="M351.71 290.87H358.19V294.74Q358.19 297.31 354.95 297.31Q351.71 297.31 351.71 294.74Z" fill="#000"/><rect x="353.35" y="299.8" width="3.2" height="3.2" fill="#e8e8e8" stroke="#333" stroke-width="0.8"/><text x="365.98" y="288.8" transform="rotate(.03 365.98 288.8)" font-size="4.4" fill="#000" font-weight="700" text-anchor="middle">7</text><rect x="361.48" y="289.4" width="9" height="9.2" fill="#fff"/><path d="M362.74 290.87H369.22V294.74Q369.22 297.31 365.98 297.31Q362.74 297.31 362.74 294.74Z" fill="#000"/><rect x="364.38" y="299.8" width="3.2" height="3.2" fill="#e8e8e8" stroke="#333" stroke-width="0.8"/><text x="377.01" y="288.8" transform="rotate(.03 377.01 288.8)" font-size="4.4" fill="#000" font-weight="700" text-anchor="middle">8</text><rect x="372.51" y="289.4" width="9" height="9.2" fill="#fff"/><path d="M373.77 290.87H380.25V294.74Q380.25 297.31 377.01 297.31Q373.77 297.31 373.77 294.74Z" fill="#000"/><rect x="375.41" y="299.8" width="3.2" height="3.2" fill="#e8e8e8" stroke="#333" stroke-width="0.8"/><text x="388.04" y="288.8" transform="rotate(.03 388.04 288.8)" font-size="4.4" fill="#000" font-weight="700" text-anchor="middle">9</text><rect x="383.54" y="289.4" width="9" height="9.2" fill="#fff"/><path d="M384.8 290.87H391.28V294.74Q391.28 297.31 388.04 297.31Q384.8 297.31 384.8 294.74Z" fill="#000"/><rect x="386.44" y="299.8" width="3.2" height="3.2" fill="#e8e8e8" stroke="#333" stroke-width="0.8"/><text x="399.07" y="288.8" transform="rotate(.03 399.07 288.8)" font-size="4.4" fill="#000" font-weight="700" text-anchor="middle">10</text><rect x="394.57" y="289.4" width="9" height="9.2" fill="#e8ffe8"/><path d="M395.77 290.6H402.37V295.2Q402.37 297.6 399.07 297.6Q395.77 297.6 395.77 295.2Z" fill="#10f010"/><rect x="397.47" y="299.8" width="3.2" height="3.2" fill="#e8e8e8" stroke="#333" stroke-width="0.8"/><text x="410.1" y="288.8" transform="rotate(.03 410.1 288.8)" font-size="4.4" fill="#000" font-weight="700" text-anchor="middle">11</text><rect x="405.6" y="289.4" width="9" height="9.2" fill="#fff"/><path d="M406.86 290.87H413.34V294.74Q413.34 297.31 410.1 297.31Q406.86 297.31 406.86 294.74Z" fill="#000"/><rect x="408.5" y="299.8" width="3.2" height="3.2" fill="#e8e8e8" stroke="#333" stroke-width="0.8"/><text x="421.13" y="288.8" transform="rotate(.03 421.13 288.8)" font-size="4.4" fill="#000" font-weight="700" text-anchor="middle">12</text><rect x="416.63" y="289.4" width="9" height="9.2" fill="#fff"/><path d="M417.89 290.87H424.37V294.74Q424.37 297.31 421.13 297.31Q417.89 297.31 417.89 294.74Z" fill="#000"/><rect x="419.53" y="299.8" width="3.2" height="3.2" fill="#e8e8e8" stroke="#333" stroke-width="0.8"/><text x="432.16" y="288.8" transform="rotate(.03 432.16 288.8)" font-size="4.4" fill="#000" font-weight="700" text-anchor="middle">13</text><rect x="427.66" y="289.4" width="9" height="9.2" fill="#fff"/><path d="M428.92 290.87H435.4V294.74Q435.4 297.31 432.16 297.31Q428.92 297.31 428.92 294.74Z" fill="#000"/><rect x="430.56" y="299.8" width="3.2" height="3.2" fill="#e8e8e8" stroke="#333" stroke-width="0.8"/><text x="443.19" y="288.8" transform="rotate(.03 443.19 288.8)" font-size="4.4" fill="#000" font-weight="700" text-anchor="middle">14</text><rect x="438.69" y="289.4" width="9" height="9.2" fill="#fff"/><path d="M439.95 290.87H446.43V294.74Q446.43 297.31 443.19 297.31Q439.95 297.31 439.95 294.74Z" fill="#000"/><rect x="441.59" y="299.8" width="3.2" height="3.2" fill="#e8e8e8" stroke="#333" stroke-width="0.8"/><text x="454.22" y="288.8" transform="rotate(.03 454.22 288.8)" font-size="4.4" fill="#000" font-weight="700" text-anchor="middle">15</text><rect x="449.72" y="289.4" width="9" height="9.2" fill="#fff"/><path d="M450.98 290.87H457.46V294.74Q457.46 297.31 454.22 297.31Q450.98 297.31 450.98 294.74Z" fill="#000"/><rect x="452.62" y="299.8" width="3.2" height="3.2" fill="#e8e8e8" stroke="#333" stroke-width="0.8"/><text x="465.25" y="288.8" transform="rotate(.03 465.25 288.8)" font-size="4.4" fill="#000" font-weight="700" text-anchor="middle">16</text><rect x="460.75" y="289.4" width="9" height="9.2" fill="#fff"/><path d="M462.01 290.87H468.49V294.74Q468.49 297.31 465.25 297.31Q462.01 297.31 462.01 294.74Z" fill="#000"/><rect x="463.65" y="299.8" width="3.2" height="3.2" fill="#e8e8e8" stroke="#333" stroke-width="0.8"/><path d="M240.3 304.5L523.75 304.5" stroke="#000" stroke-width="1.3"/><rect x="240.3" y="304.5" width="283.45" height="11.1" fill="#fff"/><path d="M261.5 304.5V315.6M282.5 304.5V315.6M303.5 304.5V315.6M324.5 304.5V315.6M344.5 304.5V315.6M365.5 304.5V315.6M386.5 304.5V315.6M407.5 304.5V315.6M428.5 304.5V315.6M449.5 304.5V315.6M470.5 304.5V315.6M490.5 304.5V315.6M511.5 304.5V315.6" fill="none" stroke="#cacaca" stroke-width="1"/><path d="M251.5 304.5V315.6M272.5 304.5V315.6M292.5 304.5V315.6M313.5 304.5V315.6M334.5 304.5V315.6M355.5 304.5V315.6M376.5 304.5V315.6M397.5 304.5V315.6M417.5 304.5V315.6M438.5 304.5V315.6M459.5 304.5V315.6M480.5 304.5V315.6M501.5 304.5V315.6M240.3 305.5H523.75" fill="none" stroke="#b8b8b8" stroke-width="1" stroke-dasharray="2.8 7.625" stroke-dashoffset="6.5"/><rect x="240.3" y="315.6" width="283.45" height="20.6" fill="#8fa3cd" stroke="#4c5a80" stroke-width="0.8"/><path d="M240.3 316.4L523.75 316.4" stroke="#6c7ea8" stroke-width="1.2"/><path d="M243.6 319.4L243.6 320.2" stroke="#3c4c78" stroke-width="0.6"/><path d="M244.6 318.6L244.6 320.2" stroke="#3c4c78" stroke-width="0.6"/><path d="M245.6 317.8L245.6 320.2" stroke="#3c4c78" stroke-width="0.6"/><path d="M246.6 318.6L246.6 320.2" stroke="#3c4c78" stroke-width="0.6"/><path d="M247.6 319.4L247.6 320.2" stroke="#3c4c78" stroke-width="0.6"/><path d="M248.6 318.6L248.6 320.2" stroke="#3c4c78" stroke-width="0.6"/><path d="M249.6 317.8L249.6 320.2" stroke="#3c4c78" stroke-width="0.6"/><path d="M250.6 318.6L250.6 320.2" stroke="#3c4c78" stroke-width="0.6"/><path d="M251.6 319.4L251.6 320.2" stroke="#3c4c78" stroke-width="0.6"/><rect x="243.2" y="323" width="1.2" height="1.2" fill="#5a6a96"/><rect x="243.2" y="325.6" width="1.2" height="1.2" fill="#5a6a96"/><rect x="243.2" y="328.2" width="1.2" height="1.2" fill="#5a6a96"/><rect x="243.2" y="330.8" width="1.2" height="1.2" fill="#5a6a96"/><text x="246.6" y="327" transform="rotate(.03 246.6 327)" font-size="6" fill="#3a4a7a">Catalyst 3750</text><text x="246.6" y="333.8" transform="rotate(.03 246.6 333.8)" font-size="6" fill="#3a4a7a">Series</text><rect x="295.6" y="319.6" width="41" height="12.4" fill="#c8d2ea"/><rect x="296.6" y="320.2" width="5.2" height="4.8" fill="#2c2c8c"/><rect x="297.8" y="321" width="2.8" height="3" fill="#d0204c"/><rect x="296.6" y="326.6" width="5.2" height="4.8" fill="#3a4468"/><rect x="303.3" y="320.2" width="5.2" height="4.8" fill="#2c2c8c"/><rect x="304.5" y="321" width="2.8" height="3" fill="#d0204c"/><rect x="303.3" y="326.6" width="5.2" height="4.8" fill="#3a4468"/><rect x="310" y="320.2" width="5.2" height="4.8" fill="#2c2c8c"/><rect x="311.2" y="321" width="2.8" height="3" fill="#d0204c"/><rect x="310" y="326.6" width="5.2" height="4.8" fill="#3a4468"/><rect x="316.7" y="320.2" width="5.2" height="4.8" fill="#2c2c8c"/><rect x="317.9" y="321" width="2.8" height="3" fill="#d0204c"/><rect x="316.7" y="326.6" width="5.2" height="4.8" fill="#3a4468"/><rect x="323.4" y="320.2" width="5.2" height="4.8" fill="#2c2c8c"/><rect x="324.6" y="321" width="2.8" height="3" fill="#d0204c"/><rect x="323.4" y="326.6" width="5.2" height="4.8" fill="#3a4468"/><rect x="330.1" y="320.2" width="5.2" height="4.8" fill="#2c2c8c"/><rect x="331.3" y="321" width="2.8" height="3" fill="#d0204c"/><rect x="330.1" y="326.6" width="5.2" height="4.8" fill="#3a4468"/><text x="294.8" y="323.2" transform="rotate(.03 294.8 323.2)" font-size="2.6" fill="#223" text-anchor="end">1x</text><text x="294.8" y="331.2" transform="rotate(.03 294.8 331.2)" font-size="2.6" fill="#223" text-anchor="end">2x</text><text x="337.4" y="323.2" transform="rotate(.03 337.4 323.2)" font-size="2.6" fill="#223">11x</text><text x="337.4" y="331.2" transform="rotate(.03 337.4 331.2)" font-size="2.6" fill="#223">12x</text><rect x="359" y="319.4" width="42" height="12.8" fill="#b4c4e4"/><rect x="360.2" y="320.2" width="4.6" height="11.2" fill="#26365e" rx="2.3"/><rect x="367.1" y="320.2" width="4.6" height="11.2" fill="#26365e" rx="2.3"/><rect x="374" y="320.2" width="4.6" height="11.2" fill="#26365e" rx="2.3"/><rect x="380.9" y="320.2" width="4.6" height="11.2" fill="#26365e" rx="2.3"/><rect x="387.8" y="320.2" width="4.6" height="11.2" fill="#26365e" rx="2.3"/><rect x="394.7" y="320.2" width="4.6" height="11.2" fill="#26365e" rx="2.3"/><text x="358.2" y="323.2" transform="rotate(.03 358.2 323.2)" font-size="2.6" fill="#223" text-anchor="end">13x</text><text x="358.2" y="331.2" transform="rotate(.03 358.2 331.2)" font-size="2.6" fill="#223" text-anchor="end">14x</text><text x="402" y="323.2" transform="rotate(.03 402 323.2)" font-size="2.6" fill="#223">23x</text><text x="402" y="331.2" transform="rotate(.03 402 331.2)" font-size="2.6" fill="#223">24x</text><text x="452" y="321.8" transform="rotate(.03 452 321.8)" font-size="6.1" fill="#2c3c70" text-anchor="end">3750G-24T-F</text><text x="450" y="329.2" transform="rotate(.03 450 329.2)" font-size="4" fill="#5a6a9a" text-anchor="end">U1.05-0101-SW-2</text><path d="M454.7 317.1L454.7 334.7" stroke="#3c4a70" stroke-width="0.7"/><text x="472" y="322.4" transform="rotate(.03 472 322.4)" font-size="3.8" fill="#26345a" font-weight="700" text-anchor="middle">STACK</text><text x="459.6" y="327.4" transform="rotate(.03 459.6 327.4)" font-size="2.8" fill="#26345a" text-anchor="end">1</text><text x="459.6" y="332.8" transform="rotate(.03 459.6 332.8)" font-size="2.8" fill="#26345a" text-anchor="end">2</text><rect x="460.5" y="324.4" width="18.2" height="3.4" fill="#46507a" stroke="#26345a" stroke-width="0.5" rx="1.2"/><rect x="460.5" y="329.8" width="18.2" height="3.4" fill="#46507a" stroke="#26345a" stroke-width="0.5" rx="1.2"/><text x="487.2" y="326.6" transform="rotate(.03 487.2 326.6)" font-size="3.4" fill="#26345a" font-weight="700" text-anchor="middle">Con</text><rect x="484.8" y="328.2" width="4.8" height="5" fill="#c8d2ea"/><rect x="485.6" y="329" width="3.2" height="3.6" fill="#26345a"/><text x="511.6" y="326.6" transform="rotate(.03 511.6 326.6)" font-size="3.4" fill="#26345a" font-weight="700" text-anchor="middle">RPS</text><rect x="504.2" y="328.8" width="14.8" height="4.4" fill="#5a6896" stroke="#26345a" stroke-width="0.6" rx="0.8"/><path d="M505.4 331L517.8 331" stroke="#26345a" stroke-width="1.6" stroke-dasharray=".9 .7"/><path d="M240.3 316.2L523.75 335.6" stroke="#d0182e" stroke-width="1.4"/><path d="M240.3 335.6L523.75 316.2" stroke="#d0182e" stroke-width="1.4"/><rect x="240.3" y="336.2" width="283.45" height="62.7" fill="#c0c0c0"/><path d="M243.6 341.46L243.6 342.98" stroke="#5c5c5c" stroke-width="0.76"/><path d="M245.55 340.32L245.55 342.98" stroke="#5c5c5c" stroke-width="0.76"/><path d="M247.5 338.99L247.5 342.98" stroke="#5c5c5c" stroke-width="0.76"/><path d="M249.44 340.32L249.44 342.98" stroke="#5c5c5c" stroke-width="0.76"/><path d="M251.39 341.46L251.39 342.98" stroke="#5c5c5c" stroke-width="0.76"/><path d="M253.34 340.32L253.34 342.98" stroke="#5c5c5c" stroke-width="0.76"/><path d="M255.28 338.99L255.28 342.98" stroke="#5c5c5c" stroke-width="0.76"/><path d="M257.23 340.32L257.23 342.98" stroke="#5c5c5c" stroke-width="0.76"/><path d="M259.18 341.46L259.18 342.98" stroke="#5c5c5c" stroke-width="0.76"/><text x="251.39" y="347.92" transform="rotate(.03 251.39 347.92)" font-size="3.99" fill="#5c5c5c" font-weight="700" text-anchor="middle" letter-spacing=".9">CISCO</text><text x="263.2" y="343.4" transform="rotate(.03 263.2 343.4)" font-size="6.6" fill="#000" font-weight="700" textLength="44.6" lengthAdjust="spacingAndGlyphs">N9K-C93128TX</text><text x="264.4" y="348.4" transform="rotate(.03 264.4 348.4)" font-size="3.8" fill="#8c8c8c">C93128TX-1000</text><path d="M314.2 340.1h52.21M315.88 343h50.54M314.2 345.9h52.21M315.88 348.8h50.54M314.2 351.7h52.21M315.88 354.6h50.54" stroke="#7e7e7e" stroke-width="3.32" stroke-linecap="round" stroke-dasharray="0 3.35" fill="none"/><path d="M314.2 340.1h52.21M315.88 343h50.54M314.2 345.9h52.21M315.88 348.8h50.54M314.2 351.7h52.21M315.88 354.6h50.54" stroke="#c2c2c2" stroke-width="2.08" stroke-linecap="round" stroke-dasharray="0 3.35" fill="none"/><rect x="401" y="338.8" width="119.6" height="19.6" fill="#858585"/><text x="402.2" y="343.4" transform="rotate(.03 402.2 343.4)" font-size="3.9" fill="#111" font-weight="700">Uplink Module</text><text x="268.6" y="356.8" transform="rotate(.03 268.6 356.8)" font-size="3.8" fill="#000" font-weight="700">Con.</text><rect x="269.2" y="357.8" width="7.4" height="6.8" fill="#fff"/><path d="M270.24 363.65H275.56V360.71Q275.56 358.75 272.9 358.75Q270.24 358.75 270.24 360.71Z" fill="#000"/><rect x="269.4" y="366" width="10.8" height="4" fill="#d8d8d8" stroke="#000" stroke-width="1.1" rx="1.6"/><rect x="269.4" y="370.8" width="10.8" height="4" fill="#d8d8d8" stroke="#000" stroke-width="1.1" rx="1.6"/><rect x="271.4" y="367.4" width="6.8" height="1.2" fill="#222"/><rect x="271.4" y="372.2" width="6.8" height="1.2" fill="#222"/><text x="281.2" y="369.8" transform="rotate(.03 281.2 369.8)" font-size="2.8" fill="#000">1</text><text x="281.2" y="374.6" transform="rotate(.03 281.2 374.6)" font-size="2.8" fill="#000">2</text><text x="284" y="366.6" transform="rotate(.03 284 366.6)" font-size="3.8" fill="#000" font-weight="700">Mgmt.</text><rect x="284.8" y="367.8" width="7.2" height="6.8" fill="#fff"/><path d="M285.81 373.65H290.99V370.71Q290.99 368.75 288.4 368.75Q285.81 368.75 285.81 370.71Z" fill="#000"/><rect x="334.8" y="361.4" width="55.6" height="12.9" fill="#f6f6f6"/><path d="M335.95 367.3V364Q335.95 362 338.45 362Q340.95 362 340.95 364V367.3Z" fill="#0a0a0a"/><path d="M335.95 368.4V371.7Q335.95 373.7 338.45 373.7Q340.95 373.7 340.95 371.7V368.4Z" fill="#0a0a0a"/><path d="M342.85 367.3V364Q342.85 362 345.35 362Q347.85 362 347.85 364V367.3Z" fill="#0a0a0a"/><path d="M342.85 368.4V371.7Q342.85 373.7 345.35 373.7Q347.85 373.7 347.85 371.7V368.4Z" fill="#0a0a0a"/><path d="M349.75 367.3V364Q349.75 362 352.25 362Q354.75 362 354.75 364V367.3Z" fill="#0a0a0a"/><path d="M349.75 368.4V371.7Q349.75 373.7 352.25 373.7Q354.75 373.7 354.75 371.7V368.4Z" fill="#0a0a0a"/><path d="M356.65 367.3V364Q356.65 362 359.15 362Q361.65 362 361.65 364V367.3Z" fill="#0a0a0a"/><path d="M356.65 368.4V371.7Q356.65 373.7 359.15 373.7Q361.65 373.7 361.65 371.7V368.4Z" fill="#0a0a0a"/><path d="M363.55 367.3V364Q363.55 362 366.05 362Q368.55 362 368.55 364V367.3Z" fill="#0a0a0a"/><path d="M363.55 368.4V371.7Q363.55 373.7 366.05 373.7Q368.55 373.7 368.55 371.7V368.4Z" fill="#0a0a0a"/><path d="M370.45 367.3V364Q370.45 362 372.95 362Q375.45 362 375.45 364V367.3Z" fill="#0a0a0a"/><path d="M370.45 368.4V371.7Q370.45 373.7 372.95 373.7Q375.45 373.7 375.45 371.7V368.4Z" fill="#0a0a0a"/><path d="M377.35 367.3V364Q377.35 362 379.85 362Q382.35 362 382.35 364V367.3Z" fill="#0a0a0a"/><path d="M377.35 368.4V371.7Q377.35 373.7 379.85 373.7Q382.35 373.7 382.35 371.7V368.4Z" fill="#0a0a0a"/><path d="M384.25 367.3V364Q384.25 362 386.75 362Q389.25 362 389.25 364V367.3Z" fill="#0a0a0a"/><path d="M384.25 368.4V371.7Q384.25 373.7 386.75 373.7Q389.25 373.7 389.25 371.7V368.4Z" fill="#0a0a0a"/><rect x="395.2" y="361.4" width="55.6" height="12.9" fill="#f6f6f6"/><path d="M396.35 367.3V364Q396.35 362 398.85 362Q401.35 362 401.35 364V367.3Z" fill="#0a0a0a"/><path d="M396.35 368.4V371.7Q396.35 373.7 398.85 373.7Q401.35 373.7 401.35 371.7V368.4Z" fill="#0a0a0a"/><path d="M403.25 367.3V364Q403.25 362 405.75 362Q408.25 362 408.25 364V367.3Z" fill="#0a0a0a"/><path d="M403.25 368.4V371.7Q403.25 373.7 405.75 373.7Q408.25 373.7 408.25 371.7V368.4Z" fill="#0a0a0a"/><path d="M410.15 367.3V364Q410.15 362 412.65 362Q415.15 362 415.15 364V367.3Z" fill="#0a0a0a"/><path d="M410.15 368.4V371.7Q410.15 373.7 412.65 373.7Q415.15 373.7 415.15 371.7V368.4Z" fill="#0a0a0a"/><path d="M417.05 367.3V364Q417.05 362 419.55 362Q422.05 362 422.05 364V367.3Z" fill="#0a0a0a"/><path d="M417.05 368.4V371.7Q417.05 373.7 419.55 373.7Q422.05 373.7 422.05 371.7V368.4Z" fill="#0a0a0a"/><path d="M423.95 367.3V364Q423.95 362 426.45 362Q428.95 362 428.95 364V367.3Z" fill="#0a0a0a"/><path d="M423.95 368.4V371.7Q423.95 373.7 426.45 373.7Q428.95 373.7 428.95 371.7V368.4Z" fill="#0a0a0a"/><path d="M430.85 367.3V364Q430.85 362 433.35 362Q435.85 362 435.85 364V367.3Z" fill="#0a0a0a"/><path d="M430.85 368.4V371.7Q430.85 373.7 433.35 373.7Q435.85 373.7 435.85 371.7V368.4Z" fill="#0a0a0a"/><path d="M437.75 367.3V364Q437.75 362 440.25 362Q442.75 362 442.75 364V367.3Z" fill="#0a0a0a"/><path d="M437.75 368.4V371.7Q437.75 373.7 440.25 373.7Q442.75 373.7 442.75 371.7V368.4Z" fill="#0a0a0a"/><path d="M444.65 367.3V364Q444.65 362 447.15 362Q449.65 362 449.65 364V367.3Z" fill="#0a0a0a"/><path d="M444.65 368.4V371.7Q444.65 373.7 447.15 373.7Q449.65 373.7 449.65 371.7V368.4Z" fill="#0a0a0a"/><rect x="455.6" y="361.4" width="55.6" height="12.9" fill="#f6f6f6"/><path d="M456.75 367.3V364Q456.75 362 459.25 362Q461.75 362 461.75 364V367.3Z" fill="#0a0a0a"/><path d="M456.75 368.4V371.7Q456.75 373.7 459.25 373.7Q461.75 373.7 461.75 371.7V368.4Z" fill="#0a0a0a"/><path d="M463.65 367.3V364Q463.65 362 466.15 362Q468.65 362 468.65 364V367.3Z" fill="#0a0a0a"/><path d="M463.65 368.4V371.7Q463.65 373.7 466.15 373.7Q468.65 373.7 468.65 371.7V368.4Z" fill="#0a0a0a"/><path d="M470.55 367.3V364Q470.55 362 473.05 362Q475.55 362 475.55 364V367.3Z" fill="#0a0a0a"/><path d="M470.55 368.4V371.7Q470.55 373.7 473.05 373.7Q475.55 373.7 475.55 371.7V368.4Z" fill="#0a0a0a"/><path d="M477.45 367.3V364Q477.45 362 479.95 362Q482.45 362 482.45 364V367.3Z" fill="#0a0a0a"/><path d="M477.45 368.4V371.7Q477.45 373.7 479.95 373.7Q482.45 373.7 482.45 371.7V368.4Z" fill="#0a0a0a"/><path d="M484.35 367.3V364Q484.35 362 486.85 362Q489.35 362 489.35 364V367.3Z" fill="#0a0a0a"/><path d="M484.35 368.4V371.7Q484.35 373.7 486.85 373.7Q489.35 373.7 489.35 371.7V368.4Z" fill="#0a0a0a"/><path d="M491.25 367.3V364Q491.25 362 493.75 362Q496.25 362 496.25 364V367.3Z" fill="#0a0a0a"/><path d="M491.25 368.4V371.7Q491.25 373.7 493.75 373.7Q496.25 373.7 496.25 371.7V368.4Z" fill="#0a0a0a"/><path d="M498.15 367.3V364Q498.15 362 500.65 362Q503.15 362 503.15 364V367.3Z" fill="#0a0a0a"/><path d="M498.15 368.4V371.7Q498.15 373.7 500.65 373.7Q503.15 373.7 503.15 371.7V368.4Z" fill="#0a0a0a"/><path d="M505.05 367.3V364Q505.05 362 507.55 362Q510.05 362 510.05 364V367.3Z" fill="#0a0a0a"/><path d="M505.05 368.4V371.7Q505.05 373.7 507.55 373.7Q510.05 373.7 510.05 371.7V368.4Z" fill="#0a0a0a"/><rect x="334.8" y="380" width="55.6" height="12.9" fill="#f6f6f6"/><rect x="335.95" y="380.8" width="5" height="4.9" fill="#16e424"/><rect x="335.95" y="387.2" width="5" height="4.9" fill="#16e424"/><rect x="342.85" y="380.8" width="5" height="4.9" fill="#16e424"/><rect x="342.85" y="387.2" width="5" height="4.9" fill="#16e424"/><rect x="349.75" y="380.8" width="5" height="4.9" fill="#16e424"/><rect x="349.75" y="387.2" width="5" height="4.9" fill="#16e424"/><rect x="356.65" y="380.8" width="5" height="4.9" fill="#16e424"/><rect x="356.65" y="387.2" width="5" height="4.9" fill="#16e424"/><rect x="363.55" y="380.8" width="5" height="4.9" fill="#16e424"/><rect x="363.55" y="387.2" width="5" height="4.9" fill="#16e424"/><rect x="370.45" y="380.8" width="5" height="4.9" fill="#16e424"/><rect x="370.45" y="387.2" width="5" height="4.9" fill="#16e424"/><rect x="377.35" y="380.8" width="5" height="4.9" fill="#16e424"/><path d="M377.35 387V390.3Q377.35 392.3 379.85 392.3Q382.35 392.3 382.35 390.3V387Z" fill="#0a0a0a"/><path d="M384.25 385.9V382.6Q384.25 380.6 386.75 380.6Q389.25 380.6 389.25 382.6V385.9Z" fill="#0a0a0a"/><path d="M384.25 387V390.3Q384.25 392.3 386.75 392.3Q389.25 392.3 389.25 390.3V387Z" fill="#0a0a0a"/><rect x="395.2" y="380" width="55.6" height="12.9" fill="#f6f6f6"/><path d="M396.35 385.9V382.6Q396.35 380.6 398.85 380.6Q401.35 380.6 401.35 382.6V385.9Z" fill="#0a0a0a"/><path d="M396.35 387V390.3Q396.35 392.3 398.85 392.3Q401.35 392.3 401.35 390.3V387Z" fill="#0a0a0a"/><path d="M403.25 385.9V382.6Q403.25 380.6 405.75 380.6Q408.25 380.6 408.25 382.6V385.9Z" fill="#0a0a0a"/><path d="M403.25 387V390.3Q403.25 392.3 405.75 392.3Q408.25 392.3 408.25 390.3V387Z" fill="#0a0a0a"/><path d="M410.15 385.9V382.6Q410.15 380.6 412.65 380.6Q415.15 380.6 415.15 382.6V385.9Z" fill="#0a0a0a"/><path d="M410.15 387V390.3Q410.15 392.3 412.65 392.3Q415.15 392.3 415.15 390.3V387Z" fill="#0a0a0a"/><path d="M417.05 385.9V382.6Q417.05 380.6 419.55 380.6Q422.05 380.6 422.05 382.6V385.9Z" fill="#0a0a0a"/><path d="M417.05 387V390.3Q417.05 392.3 419.55 392.3Q422.05 392.3 422.05 390.3V387Z" fill="#0a0a0a"/><path d="M423.95 385.9V382.6Q423.95 380.6 426.45 380.6Q428.95 380.6 428.95 382.6V385.9Z" fill="#0a0a0a"/><path d="M423.95 387V390.3Q423.95 392.3 426.45 392.3Q428.95 392.3 428.95 390.3V387Z" fill="#0a0a0a"/><path d="M430.85 385.9V382.6Q430.85 380.6 433.35 380.6Q435.85 380.6 435.85 382.6V385.9Z" fill="#0a0a0a"/><path d="M430.85 387V390.3Q430.85 392.3 433.35 392.3Q435.85 392.3 435.85 390.3V387Z" fill="#0a0a0a"/><path d="M437.75 385.9V382.6Q437.75 380.6 440.25 380.6Q442.75 380.6 442.75 382.6V385.9Z" fill="#0a0a0a"/><path d="M437.75 387V390.3Q437.75 392.3 440.25 392.3Q442.75 392.3 442.75 390.3V387Z" fill="#0a0a0a"/><path d="M444.65 385.9V382.6Q444.65 380.6 447.15 380.6Q449.65 380.6 449.65 382.6V385.9Z" fill="#0a0a0a"/><path d="M444.65 387V390.3Q444.65 392.3 447.15 392.3Q449.65 392.3 449.65 390.3V387Z" fill="#0a0a0a"/><rect x="455.6" y="380" width="55.6" height="12.9" fill="#f6f6f6"/><path d="M456.75 385.9V382.6Q456.75 380.6 459.25 380.6Q461.75 380.6 461.75 382.6V385.9Z" fill="#0a0a0a"/><path d="M456.75 387V390.3Q456.75 392.3 459.25 392.3Q461.75 392.3 461.75 390.3V387Z" fill="#0a0a0a"/><path d="M463.65 385.9V382.6Q463.65 380.6 466.15 380.6Q468.65 380.6 468.65 382.6V385.9Z" fill="#0a0a0a"/><path d="M463.65 387V390.3Q463.65 392.3 466.15 392.3Q468.65 392.3 468.65 390.3V387Z" fill="#0a0a0a"/><path d="M470.55 385.9V382.6Q470.55 380.6 473.05 380.6Q475.55 380.6 475.55 382.6V385.9Z" fill="#0a0a0a"/><path d="M470.55 387V390.3Q470.55 392.3 473.05 392.3Q475.55 392.3 475.55 390.3V387Z" fill="#0a0a0a"/><path d="M477.45 385.9V382.6Q477.45 380.6 479.95 380.6Q482.45 380.6 482.45 382.6V385.9Z" fill="#0a0a0a"/><path d="M477.45 387V390.3Q477.45 392.3 479.95 392.3Q482.45 392.3 482.45 390.3V387Z" fill="#0a0a0a"/><path d="M484.35 385.9V382.6Q484.35 380.6 486.85 380.6Q489.35 380.6 489.35 382.6V385.9Z" fill="#0a0a0a"/><path d="M484.35 387V390.3Q484.35 392.3 486.85 392.3Q489.35 392.3 489.35 390.3V387Z" fill="#0a0a0a"/><path d="M491.25 385.9V382.6Q491.25 380.6 493.75 380.6Q496.25 380.6 496.25 382.6V385.9Z" fill="#0a0a0a"/><path d="M491.25 387V390.3Q491.25 392.3 493.75 392.3Q496.25 392.3 496.25 390.3V387Z" fill="#0a0a0a"/><path d="M498.15 385.9V382.6Q498.15 380.6 500.65 380.6Q503.15 380.6 503.15 382.6V385.9Z" fill="#0a0a0a"/><path d="M498.15 387V390.3Q498.15 392.3 500.65 392.3Q503.15 392.3 503.15 390.3V387Z" fill="#0a0a0a"/><path d="M505.05 385.9V382.6Q505.05 380.6 507.55 380.6Q510.05 380.6 510.05 382.6V385.9Z" fill="#0a0a0a"/><path d="M505.05 387V390.3Q505.05 392.3 507.55 392.3Q510.05 392.3 510.05 390.3V387Z" fill="#0a0a0a"/><rect x="391.3" y="362.2" width="2.6" height="3.2" fill="#ececec" stroke="#a8a8a8" stroke-width="0.4" rx="1.2"/><rect x="391.3" y="366.1" width="2.6" height="3.2" fill="#ececec" stroke="#a8a8a8" stroke-width="0.4" rx="1.2"/><rect x="391.3" y="370" width="2.6" height="3.2" fill="#ececec" stroke="#a8a8a8" stroke-width="0.4" rx="1.2"/><rect x="391.3" y="381" width="2.6" height="10.6" fill="#ececec" stroke="#a8a8a8" stroke-width="0.4" rx="1.2"/><rect x="451.7" y="362.2" width="2.6" height="3.2" fill="#ececec" stroke="#a8a8a8" stroke-width="0.4" rx="1.2"/><rect x="451.7" y="366.1" width="2.6" height="3.2" fill="#ececec" stroke="#a8a8a8" stroke-width="0.4" rx="1.2"/><rect x="451.7" y="370" width="2.6" height="3.2" fill="#ececec" stroke="#a8a8a8" stroke-width="0.4" rx="1.2"/><rect x="451.7" y="381" width="2.6" height="10.6" fill="#ececec" stroke="#a8a8a8" stroke-width="0.4" rx="1.2"/><rect x="518.1" y="362.2" width="2.6" height="3.2" fill="#ececec" stroke="#a8a8a8" stroke-width="0.4" rx="1.2"/><rect x="518.1" y="366.1" width="2.6" height="3.2" fill="#ececec" stroke="#a8a8a8" stroke-width="0.4" rx="1.2"/><rect x="518.1" y="370" width="2.6" height="3.2" fill="#ececec" stroke="#a8a8a8" stroke-width="0.4" rx="1.2"/><rect x="518.1" y="381" width="2.6" height="10.6" fill="#ececec" stroke="#a8a8a8" stroke-width="0.4" rx="1.2"/><path d="M336.8 376.9h182.61" stroke="#8a8a8a" stroke-width="3.1" stroke-linecap="round" stroke-dasharray="0 3.44" fill="none"/><path d="M336.8 376.9h182.61" stroke="#f2f2f2" stroke-width="1.9" stroke-linecap="round" stroke-dasharray="0 3.44" fill="none"/><path d="M336.8 395.7h182.61" stroke="#8a8a8a" stroke-width="3.1" stroke-linecap="round" stroke-dasharray="0 3.44" fill="none"/><path d="M336.8 395.7h182.61" stroke="#f2f2f2" stroke-width="1.9" stroke-linecap="round" stroke-dasharray="0 3.44" fill="none"/><text x="334.2" y="366.6" transform="rotate(.03 334.2 366.6)" font-size="3.6" fill="#000" font-weight="700" text-anchor="end">1</text><text x="334.2" y="373" transform="rotate(.03 334.2 373)" font-size="3.6" fill="#000" font-weight="700" text-anchor="end">2</text><text x="334.2" y="385.4" transform="rotate(.03 334.2 385.4)" font-size="3.6" fill="#000" font-weight="700" text-anchor="end">49</text><text x="334.2" y="391.8" transform="rotate(.03 334.2 391.8)" font-size="3.6" fill="#000" font-weight="700" text-anchor="end">50</text><text x="511.6" y="366.6" transform="rotate(.03 511.6 366.6)" font-size="3.6" fill="#000" font-weight="700">47</text><text x="511.6" y="373" transform="rotate(.03 511.6 373)" font-size="3.6" fill="#000" font-weight="700">48</text><text x="511.6" y="385.4" transform="rotate(.03 511.6 385.4)" font-size="3.6" fill="#000" font-weight="700">95</text><text x="511.6" y="391.8" transform="rotate(.03 511.6 391.8)" font-size="3.6" fill="#000" font-weight="700">96</text><rect x="240.3" y="398.9" width="283.45" height="21.2" fill="#c0c0c0"/><path d="M243.8 404.36L243.8 405.88" stroke="#5c5c5c" stroke-width="0.76"/><path d="M245.75 403.22L245.75 405.88" stroke="#5c5c5c" stroke-width="0.76"/><path d="M247.7 401.89L247.7 405.88" stroke="#5c5c5c" stroke-width="0.76"/><path d="M249.64 403.22L249.64 405.88" stroke="#5c5c5c" stroke-width="0.76"/><path d="M251.59 404.36L251.59 405.88" stroke="#5c5c5c" stroke-width="0.76"/><path d="M253.54 403.22L253.54 405.88" stroke="#5c5c5c" stroke-width="0.76"/><path d="M255.49 401.89L255.49 405.88" stroke="#5c5c5c" stroke-width="0.76"/><path d="M257.43 403.22L257.43 405.88" stroke="#5c5c5c" stroke-width="0.76"/><path d="M259.38 404.36L259.38 405.88" stroke="#5c5c5c" stroke-width="0.76"/><text x="251.59" y="410.82" transform="rotate(.03 251.59 410.82)" font-size="3.99" fill="#5c5c5c" font-weight="700" text-anchor="middle" letter-spacing=".9">CISCO</text><text x="265.3" y="404.9" transform="rotate(.03 265.3 404.9)" font-size="5" fill="#000">N2K-C2232PP-10GE</text><rect x="241.6" y="413.5" width="9.8" height="5.4" fill="#8c8c8c" stroke="#444" stroke-width="0.8" rx="1.6"/><rect x="243.2" y="415.1" width="6.6" height="2.2" fill="#555" rx="0.8"/><text x="252" y="418.5" transform="rotate(.03 252 418.5)" font-size="3.8" fill="#111" font-weight="700">HD 08</text><rect x="285.6" y="405.2" width="8.15" height="5.6" fill="#14e01e" stroke="#0a3a0a" stroke-width="1" rx="1"/><rect x="287.2" y="406.7" width="2" height="2.6" fill="#9dff9d"/><rect x="290.2" y="406.7" width="2" height="2.6" fill="#9dff9d"/><rect x="294.65" y="405.5" width="6.3" height="5" fill="#9a9a9a" stroke="#888" stroke-width="0.5"/><rect x="302.8" y="405.5" width="6.3" height="5" fill="#9a9a9a" stroke="#888" stroke-width="0.5"/><rect x="310.95" y="405.5" width="6.3" height="5" fill="#9a9a9a" stroke="#888" stroke-width="0.5"/><rect x="286.5" y="412.1" width="6.3" height="5" fill="#9a9a9a" stroke="#888" stroke-width="0.5"/><rect x="293.75" y="412.1" width="8.1" height="5.2" fill="#111" rx="1"/><rect x="295.25" y="413.4" width="1.9" height="2.6" fill="#f0f0f0" rx="0.6"/><rect x="298.45" y="413.4" width="1.9" height="2.6" fill="#f0f0f0" rx="0.6"/><rect x="301.9" y="412.1" width="8.1" height="5.2" fill="#111" rx="1"/><rect x="303.4" y="413.4" width="1.9" height="2.6" fill="#f0f0f0" rx="0.6"/><rect x="306.6" y="413.4" width="1.9" height="2.6" fill="#f0f0f0" rx="0.6"/><rect x="310.05" y="412.1" width="8.1" height="5.2" fill="#111" rx="1"/><rect x="311.55" y="413.4" width="1.9" height="2.6" fill="#f0f0f0" rx="0.6"/><rect x="314.75" y="413.4" width="1.9" height="2.6" fill="#f0f0f0" rx="0.6"/><rect x="330.2" y="405.5" width="8.1" height="5.2" fill="#111" rx="1"/><rect x="331.7" y="406.8" width="1.9" height="2.6" fill="#f0f0f0" rx="0.6"/><rect x="334.9" y="406.8" width="1.9" height="2.6" fill="#f0f0f0" rx="0.6"/><rect x="331.1" y="412.1" width="6.3" height="5" fill="#9a9a9a" stroke="#888" stroke-width="0.5"/><rect x="338.35" y="405.5" width="8.1" height="5.2" fill="#111" rx="1"/><rect x="339.85" y="406.8" width="1.9" height="2.6" fill="#f0f0f0" rx="0.6"/><rect x="343.05" y="406.8" width="1.9" height="2.6" fill="#f0f0f0" rx="0.6"/><rect x="339.25" y="412.1" width="6.3" height="5" fill="#9a9a9a" stroke="#888" stroke-width="0.5"/><rect x="346.5" y="405.5" width="8.1" height="5.2" fill="#111" rx="1"/><rect x="348" y="406.8" width="1.9" height="2.6" fill="#f0f0f0" rx="0.6"/><rect x="351.2" y="406.8" width="1.9" height="2.6" fill="#f0f0f0" rx="0.6"/><rect x="347.4" y="412.1" width="6.3" height="5" fill="#9a9a9a" stroke="#888" stroke-width="0.5"/><rect x="354.65" y="405.5" width="8.1" height="5.2" fill="#111" rx="1"/><rect x="356.15" y="406.8" width="1.9" height="2.6" fill="#f0f0f0" rx="0.6"/><rect x="359.35" y="406.8" width="1.9" height="2.6" fill="#f0f0f0" rx="0.6"/><rect x="355.55" y="412.1" width="6.3" height="5" fill="#9a9a9a" stroke="#888" stroke-width="0.5"/><rect x="374.8" y="405.5" width="6.3" height="5" fill="#9a9a9a" stroke="#888" stroke-width="0.5"/><rect x="373.9" y="412.1" width="8.1" height="5.2" fill="#111" rx="1"/><rect x="375.4" y="413.4" width="1.9" height="2.6" fill="#f0f0f0" rx="0.6"/><rect x="378.6" y="413.4" width="1.9" height="2.6" fill="#f0f0f0" rx="0.6"/><rect x="382.95" y="405.5" width="6.3" height="5" fill="#9a9a9a" stroke="#888" stroke-width="0.5"/><rect x="382.05" y="412.1" width="8.1" height="5.2" fill="#111" rx="1"/><rect x="383.55" y="413.4" width="1.9" height="2.6" fill="#f0f0f0" rx="0.6"/><rect x="386.75" y="413.4" width="1.9" height="2.6" fill="#f0f0f0" rx="0.6"/><rect x="391.1" y="405.5" width="6.3" height="5" fill="#9a9a9a" stroke="#888" stroke-width="0.5"/><rect x="390.2" y="412.1" width="8.1" height="5.2" fill="#111" rx="1"/><rect x="391.7" y="413.4" width="1.9" height="2.6" fill="#f0f0f0" rx="0.6"/><rect x="394.9" y="413.4" width="1.9" height="2.6" fill="#f0f0f0" rx="0.6"/><rect x="399.25" y="405.5" width="6.3" height="5" fill="#9a9a9a" stroke="#888" stroke-width="0.5"/><rect x="398.35" y="412.1" width="8.1" height="5.2" fill="#111" rx="1"/><rect x="399.85" y="413.4" width="1.9" height="2.6" fill="#f0f0f0" rx="0.6"/><rect x="403.05" y="413.4" width="1.9" height="2.6" fill="#f0f0f0" rx="0.6"/><rect x="420.1" y="405.5" width="6.3" height="5" fill="#9a9a9a" stroke="#888" stroke-width="0.5"/><rect x="420.1" y="412.1" width="6.3" height="5" fill="#9a9a9a" stroke="#888" stroke-width="0.5"/><rect x="428.25" y="405.5" width="6.3" height="5" fill="#9a9a9a" stroke="#888" stroke-width="0.5"/><rect x="428.25" y="412.1" width="6.3" height="5" fill="#9a9a9a" stroke="#888" stroke-width="0.5"/><rect x="436.4" y="405.5" width="6.3" height="5" fill="#9a9a9a" stroke="#888" stroke-width="0.5"/><rect x="436.4" y="412.1" width="6.3" height="5" fill="#9a9a9a" stroke="#888" stroke-width="0.5"/><rect x="444.55" y="405.5" width="6.3" height="5" fill="#9a9a9a" stroke="#888" stroke-width="0.5"/><rect x="444.55" y="412.1" width="6.3" height="5" fill="#9a9a9a" stroke="#888" stroke-width="0.5"/><rect x="464.5" y="405.5" width="6.3" height="5" fill="#9a9a9a" stroke="#888" stroke-width="0.5"/><rect x="464.5" y="412.1" width="6.3" height="5" fill="#9a9a9a" stroke="#888" stroke-width="0.5"/><rect x="472.65" y="405.5" width="6.3" height="5" fill="#9a9a9a" stroke="#888" stroke-width="0.5"/><rect x="472.65" y="412.1" width="6.3" height="5" fill="#9a9a9a" stroke="#888" stroke-width="0.5"/><rect x="480.8" y="405.5" width="6.3" height="5" fill="#9a9a9a" stroke="#888" stroke-width="0.5"/><rect x="480.8" y="412.1" width="6.3" height="5" fill="#9a9a9a" stroke="#888" stroke-width="0.5"/><rect x="488.95" y="405.5" width="6.3" height="5" fill="#9a9a9a" stroke="#888" stroke-width="0.5"/><rect x="488.95" y="412.1" width="6.3" height="5" fill="#9a9a9a" stroke="#888" stroke-width="0.5"/><text x="284.8" y="410.5" transform="rotate(.03 284.8 410.5)" font-size="3.4" fill="#111" font-weight="700" text-anchor="end">1</text><text x="284.8" y="417.1" transform="rotate(.03 284.8 417.1)" font-size="3.4" fill="#111" font-weight="700" text-anchor="end">2</text><text x="319" y="410.5" transform="rotate(.03 319 410.5)" font-size="3.4" fill="#111" font-weight="700">7</text><text x="319" y="417.1" transform="rotate(.03 319 417.1)" font-size="3.4" fill="#111" font-weight="700">8</text><text x="329.4" y="410.5" transform="rotate(.03 329.4 410.5)" font-size="3.4" fill="#111" font-weight="700" text-anchor="end">9</text><text x="329.4" y="417.1" transform="rotate(.03 329.4 417.1)" font-size="3.4" fill="#111" font-weight="700" text-anchor="end">10</text><text x="363.6" y="410.5" transform="rotate(.03 363.6 410.5)" font-size="3.4" fill="#111" font-weight="700">15</text><text x="363.6" y="417.1" transform="rotate(.03 363.6 417.1)" font-size="3.4" fill="#111" font-weight="700">16</text><text x="373.2" y="410.5" transform="rotate(.03 373.2 410.5)" font-size="3.4" fill="#111" font-weight="700" text-anchor="end">17</text><text x="373.2" y="417.1" transform="rotate(.03 373.2 417.1)" font-size="3.4" fill="#111" font-weight="700" text-anchor="end">18</text><text x="407.4" y="410.5" transform="rotate(.03 407.4 410.5)" font-size="3.4" fill="#111" font-weight="700">23</text><text x="407.4" y="417.1" transform="rotate(.03 407.4 417.1)" font-size="3.4" fill="#111" font-weight="700">24</text><text x="418.4" y="410.5" transform="rotate(.03 418.4 410.5)" font-size="3.4" fill="#111" font-weight="700" text-anchor="end">25</text><text x="418.4" y="417.1" transform="rotate(.03 418.4 417.1)" font-size="3.4" fill="#111" font-weight="700" text-anchor="end">26</text><text x="452.8" y="410.5" transform="rotate(.03 452.8 410.5)" font-size="3.4" fill="#111" font-weight="700">31</text><text x="452.8" y="417.1" transform="rotate(.03 452.8 417.1)" font-size="3.4" fill="#111" font-weight="700">32</text><text x="462.8" y="410.5" transform="rotate(.03 462.8 410.5)" font-size="3.4" fill="#111" font-weight="700" text-anchor="end">1</text><text x="462.8" y="417.1" transform="rotate(.03 462.8 417.1)" font-size="3.4" fill="#111" font-weight="700" text-anchor="end">2</text><text x="497.2" y="410.5" transform="rotate(.03 497.2 410.5)" font-size="3.4" fill="#111" font-weight="700">7</text><text x="497.2" y="417.1" transform="rotate(.03 497.2 417.1)" font-size="3.4" fill="#111" font-weight="700">8</text><rect x="240.3" y="398.9" width="283.45" height="21.2" fill="none" stroke="#000" stroke-width="1.2"/><rect x="240.3" y="420.1" width="283.45" height="31.9" fill="#fff"/><path d="M261.5 420.1V452M282.5 420.1V452M303.5 420.1V452M324.5 420.1V452M344.5 420.1V452M365.5 420.1V452M386.5 420.1V452M407.5 420.1V452M428.5 420.1V452M449.5 420.1V452M470.5 420.1V452M490.5 420.1V452M511.5 420.1V452M240.3 431.5H523.75" fill="none" stroke="#cacaca" stroke-width="1"/><path d="M251.5 420.1V452M272.5 420.1V452M292.5 420.1V452M313.5 420.1V452M334.5 420.1V452M355.5 420.1V452M376.5 420.1V452M397.5 420.1V452M417.5 420.1V452M438.5 420.1V452M459.5 420.1V452M480.5 420.1V452M501.5 420.1V452M240.3 420.5H523.75M240.3 441.5H523.75" fill="none" stroke="#b8b8b8" stroke-width="1" stroke-dasharray="2.8 7.625" stroke-dashoffset="6.5"/><rect x="240.3" y="452" width="283.45" height="40.6" fill="#c0c0c0"/><circle cx="247.5" cy="458.9" r="4.9" fill="#4a4a4a"/><text x="247.5" y="461.2" transform="rotate(.03 247.5 461.2)" font-size="6.2" fill="#eee" font-weight="700" text-anchor="middle" font-style="italic">hp</text><text x="241.6" y="470.6" transform="rotate(.03 241.6 470.6)" font-size="6.6" fill="#000" font-weight="700" font-family='Liberation Mono, monospace' textLength="26.6" lengthAdjust="spacingAndGlyphs">ProLiant</text><text x="241.6" y="475.4" transform="rotate(.03 241.6 475.4)" font-size="6.6" fill="#000" font-weight="700" font-family='Liberation Mono, monospace' textLength="26.8" lengthAdjust="spacingAndGlyphs">DL380G10</text><text x="241.6" y="479.6" transform="rotate(.03 241.6 479.6)" font-size="5" fill="#111" font-family='Liberation Mono, monospace' textLength="26" lengthAdjust="spacingAndGlyphs">826565-B21</text><text x="243" y="489.4" transform="rotate(.03 243 489.4)" font-size="3.9" fill="#8c8c8c">DL380G10-U1</text><rect x="268.4" y="454.8" width="70.4" height="5.6" fill="#4c4c4c"/><rect x="315.2" y="456.8" width="5.6" height="1.6" fill="#9a9a9a"/><text x="279.6" y="467" transform="rotate(.03 279.6 467)" font-size="3.2" fill="#111" text-anchor="end">1</text><rect x="280.2" y="464.4" width="8.4" height="2.6" fill="#c0c0c0" stroke="#111" stroke-width="0.9" rx="1.2"/><text x="284.6" y="472.6" transform="rotate(.03 284.6 472.6)" font-size="4.9" fill="#222" text-anchor="middle">USB</text><rect x="296.6" y="463" width="14" height="5.6" fill="#6a6a6a" stroke="#111" stroke-width="1" rx="1.6"/><path d="M298.4 465L308.8 465" stroke="#222" stroke-width="1" stroke-dasharray=".8 .6"/><path d="M299 466.8L308.2 466.8" stroke="#222" stroke-width="1" stroke-dasharray=".8 .6"/><text x="303.6" y="473.2" transform="rotate(.03 303.6 473.2)" font-size="4.9" fill="#222" text-anchor="middle">Display</text><text x="318.2" y="467" transform="rotate(.03 318.2 467)" font-size="3.2" fill="#111" text-anchor="end">2</text><rect x="318.8" y="464.4" width="8.4" height="2.6" fill="#c0c0c0" stroke="#111" stroke-width="0.9" rx="1.2"/><text x="323.2" y="472.6" transform="rotate(.03 323.2 472.6)" font-size="4.9" fill="#222" text-anchor="middle">USB</text><path d="M270.3 475.3h67M270.3 477.82h67M270.3 480.34h67M270.3 482.86h67M270.3 485.38h67M270.3 487.9h67M270.3 490.42h67" stroke="#0c0c0c" stroke-width="1.8" stroke-dasharray="4.1 1.55" fill="none"/><rect x="341.4" y="455.2" width="67" height="35.6" fill="#bcbcbc" stroke="#000" stroke-width="2.3"/><path d="M344.6 458.73h61M344.6 461.62h61M344.6 464.53h61M344.6 467.43h61M344.6 470.33h61M344.6 473.23h61M344.6 476.12h61M344.6 479.03h61M344.6 481.93h61M344.6 484.83h61M344.6 487.73h61" stroke="#0c0c0c" stroke-width="1.85" stroke-dasharray="4.2 1.66" fill="none"/><rect x="411.5" y="455.3" width="11.9" height="35.2" fill="#a9a9a9" stroke="#5e5e5e" stroke-width="1"/><path d="M412.9 456.7H422V462.8L419.4 466.3V476.3L422 479.8V483.5H412.9V479.8L415.5 476.3V466.3L412.9 462.8Z" fill="#c9c9c9" stroke="#7c7c7c" stroke-width="0.5"/><path d="M414.1 457.5H420.8V460.3Q420.8 462.7 417.45 462.7Q414.1 462.7 414.1 460.3Z" fill="#8a8a8a"/><rect x="413.1" y="466.9" width="1.7" height="1.7" fill="#111"/><rect x="420.1" y="466.9" width="1.7" height="1.7" fill="#111"/><rect x="413.1" y="470.2" width="1.7" height="1.7" fill="#111"/><rect x="420.1" y="470.2" width="1.7" height="1.7" fill="#111"/><rect x="413.1" y="473.5" width="1.7" height="1.7" fill="#111"/><rect x="420.1" y="473.5" width="1.7" height="1.7" fill="#111"/><circle cx="417.45" cy="480.2" r="1.8" fill="#9a9a9a" stroke="#868686" stroke-width="0.4"/><path d="M412.1 483.7L422.8 483.7" stroke="#8a8a8a" stroke-width="0.7"/><rect x="412.7" y="484.1" width="9.5" height="5.2" fill="#c4c4c4"/><rect x="415.1" y="485.2" width="4.7" height="3" fill="#868686" rx="1.5"/><rect x="424.03" y="455.3" width="11.9" height="35.2" fill="#a9a9a9" stroke="#5e5e5e" stroke-width="1"/><path d="M425.43 456.7H434.53V462.8L431.93 466.3V476.3L434.53 479.8V483.5H425.43V479.8L428.03 476.3V466.3L425.43 462.8Z" fill="#c9c9c9" stroke="#7c7c7c" stroke-width="0.5"/><path d="M426.63 457.5H433.33V460.3Q433.33 462.7 429.98 462.7Q426.63 462.7 426.63 460.3Z" fill="#8a8a8a"/><rect x="425.63" y="466.9" width="1.7" height="1.7" fill="#111"/><rect x="432.63" y="466.9" width="1.7" height="1.7" fill="#111"/><rect x="425.63" y="470.2" width="1.7" height="1.7" fill="#111"/><rect x="432.63" y="470.2" width="1.7" height="1.7" fill="#111"/><rect x="425.63" y="473.5" width="1.7" height="1.7" fill="#111"/><rect x="432.63" y="473.5" width="1.7" height="1.7" fill="#111"/><circle cx="429.98" cy="480.2" r="1.8" fill="#9a9a9a" stroke="#868686" stroke-width="0.4"/><path d="M424.63 483.7L435.33 483.7" stroke="#8a8a8a" stroke-width="0.7"/><rect x="425.23" y="484.1" width="9.5" height="5.2" fill="#c4c4c4"/><rect x="427.63" y="485.2" width="4.7" height="3" fill="#868686" rx="1.5"/><rect x="436.56" y="455.3" width="11.9" height="35.2" fill="#a9a9a9" stroke="#5e5e5e" stroke-width="1"/><path d="M437.96 456.7H447.06V462.8L444.46 466.3V476.3L447.06 479.8V483.5H437.96V479.8L440.56 476.3V466.3L437.96 462.8Z" fill="#c9c9c9" stroke="#7c7c7c" stroke-width="0.5"/><path d="M439.16 457.5H445.86V460.3Q445.86 462.7 442.51 462.7Q439.16 462.7 439.16 460.3Z" fill="#8a8a8a"/><rect x="438.16" y="466.9" width="1.7" height="1.7" fill="#111"/><rect x="445.16" y="466.9" width="1.7" height="1.7" fill="#111"/><rect x="438.16" y="470.2" width="1.7" height="1.7" fill="#111"/><rect x="445.16" y="470.2" width="1.7" height="1.7" fill="#111"/><rect x="438.16" y="473.5" width="1.7" height="1.7" fill="#111"/><rect x="445.16" y="473.5" width="1.7" height="1.7" fill="#111"/><circle cx="442.51" cy="480.2" r="1.8" fill="#9a9a9a" stroke="#868686" stroke-width="0.4"/><path d="M437.16 483.7L447.86 483.7" stroke="#8a8a8a" stroke-width="0.7"/><rect x="437.76" y="484.1" width="9.5" height="5.2" fill="#c4c4c4"/><rect x="440.16" y="485.2" width="4.7" height="3" fill="#868686" rx="1.5"/><rect x="449.09" y="455.3" width="11.9" height="35.2" fill="#a9a9a9" stroke="#5e5e5e" stroke-width="1"/><path d="M450.49 456.7H459.59V462.8L456.99 466.3V476.3L459.59 479.8V483.5H450.49V479.8L453.09 476.3V466.3L450.49 462.8Z" fill="#c9c9c9" stroke="#7c7c7c" stroke-width="0.5"/><path d="M451.69 457.5H458.39V460.3Q458.39 462.7 455.04 462.7Q451.69 462.7 451.69 460.3Z" fill="#8a8a8a"/><rect x="450.69" y="466.9" width="1.7" height="1.7" fill="#111"/><rect x="457.69" y="466.9" width="1.7" height="1.7" fill="#111"/><rect x="450.69" y="470.2" width="1.7" height="1.7" fill="#111"/><rect x="457.69" y="470.2" width="1.7" height="1.7" fill="#111"/><rect x="450.69" y="473.5" width="1.7" height="1.7" fill="#111"/><rect x="457.69" y="473.5" width="1.7" height="1.7" fill="#111"/><circle cx="455.04" cy="480.2" r="1.8" fill="#9a9a9a" stroke="#868686" stroke-width="0.4"/><path d="M449.69 483.7L460.39 483.7" stroke="#8a8a8a" stroke-width="0.7"/><rect x="450.29" y="484.1" width="9.5" height="5.2" fill="#c4c4c4"/><rect x="452.69" y="485.2" width="4.7" height="3" fill="#868686" rx="1.5"/><rect x="461.62" y="455.3" width="11.9" height="35.2" fill="#a9a9a9" stroke="#5e5e5e" stroke-width="1"/><path d="M463.02 456.7H472.12V462.8L469.52 466.3V476.3L472.12 479.8V483.5H463.02V479.8L465.62 476.3V466.3L463.02 462.8Z" fill="#c9c9c9" stroke="#7c7c7c" stroke-width="0.5"/><path d="M464.22 457.5H470.92V460.3Q470.92 462.7 467.57 462.7Q464.22 462.7 464.22 460.3Z" fill="#8a8a8a"/><rect x="463.22" y="466.9" width="1.7" height="1.7" fill="#111"/><rect x="470.22" y="466.9" width="1.7" height="1.7" fill="#111"/><rect x="463.22" y="470.2" width="1.7" height="1.7" fill="#111"/><rect x="470.22" y="470.2" width="1.7" height="1.7" fill="#111"/><rect x="463.22" y="473.5" width="1.7" height="1.7" fill="#111"/><rect x="470.22" y="473.5" width="1.7" height="1.7" fill="#111"/><circle cx="467.57" cy="480.2" r="1.8" fill="#9a9a9a" stroke="#868686" stroke-width="0.4"/><path d="M462.22 483.7L472.92 483.7" stroke="#8a8a8a" stroke-width="0.7"/><rect x="462.82" y="484.1" width="9.5" height="5.2" fill="#c4c4c4"/><rect x="465.22" y="485.2" width="4.7" height="3" fill="#868686" rx="1.5"/><rect x="474.15" y="455.3" width="11.9" height="35.2" fill="#a9a9a9" stroke="#5e5e5e" stroke-width="1"/><path d="M475.55 456.7H484.65V462.8L482.05 466.3V476.3L484.65 479.8V483.5H475.55V479.8L478.15 476.3V466.3L475.55 462.8Z" fill="#c9c9c9" stroke="#7c7c7c" stroke-width="0.5"/><path d="M476.75 457.5H483.45V460.3Q483.45 462.7 480.1 462.7Q476.75 462.7 476.75 460.3Z" fill="#8a8a8a"/><rect x="475.75" y="466.9" width="1.7" height="1.7" fill="#111"/><rect x="482.75" y="466.9" width="1.7" height="1.7" fill="#111"/><rect x="475.75" y="470.2" width="1.7" height="1.7" fill="#111"/><rect x="482.75" y="470.2" width="1.7" height="1.7" fill="#111"/><rect x="475.75" y="473.5" width="1.7" height="1.7" fill="#111"/><rect x="482.75" y="473.5" width="1.7" height="1.7" fill="#111"/><circle cx="480.1" cy="480.2" r="1.8" fill="#9a9a9a" stroke="#868686" stroke-width="0.4"/><path d="M474.75 483.7L485.45 483.7" stroke="#8a8a8a" stroke-width="0.7"/><rect x="475.35" y="484.1" width="9.5" height="5.2" fill="#c4c4c4"/><rect x="477.75" y="485.2" width="4.7" height="3" fill="#868686" rx="1.5"/><rect x="486.68" y="455.3" width="11.9" height="35.2" fill="#a9a9a9" stroke="#5e5e5e" stroke-width="1"/><path d="M488.08 456.7H497.18V462.8L494.58 466.3V476.3L497.18 479.8V483.5H488.08V479.8L490.68 476.3V466.3L488.08 462.8Z" fill="#c9c9c9" stroke="#7c7c7c" stroke-width="0.5"/><path d="M489.28 457.5H495.98V460.3Q495.98 462.7 492.63 462.7Q489.28 462.7 489.28 460.3Z" fill="#8a8a8a"/><rect x="488.28" y="466.9" width="1.7" height="1.7" fill="#111"/><rect x="495.28" y="466.9" width="1.7" height="1.7" fill="#111"/><rect x="488.28" y="470.2" width="1.7" height="1.7" fill="#111"/><rect x="495.28" y="470.2" width="1.7" height="1.7" fill="#111"/><rect x="488.28" y="473.5" width="1.7" height="1.7" fill="#111"/><rect x="495.28" y="473.5" width="1.7" height="1.7" fill="#111"/><circle cx="492.63" cy="480.2" r="1.8" fill="#9a9a9a" stroke="#868686" stroke-width="0.4"/><path d="M487.28 483.7L497.98 483.7" stroke="#8a8a8a" stroke-width="0.7"/><rect x="487.88" y="484.1" width="9.5" height="5.2" fill="#c4c4c4"/><rect x="490.28" y="485.2" width="4.7" height="3" fill="#868686" rx="1.5"/><rect x="499.21" y="455.3" width="11.9" height="35.2" fill="#a9a9a9" stroke="#5e5e5e" stroke-width="1"/><path d="M500.61 456.7H509.71V462.8L507.11 466.3V476.3L509.71 479.8V483.5H500.61V479.8L503.21 476.3V466.3L500.61 462.8Z" fill="#c9c9c9" stroke="#7c7c7c" stroke-width="0.5"/><path d="M501.81 457.5H508.51V460.3Q508.51 462.7 505.16 462.7Q501.81 462.7 501.81 460.3Z" fill="#8a8a8a"/><rect x="500.81" y="466.9" width="1.7" height="1.7" fill="#111"/><rect x="507.81" y="466.9" width="1.7" height="1.7" fill="#111"/><rect x="500.81" y="470.2" width="1.7" height="1.7" fill="#111"/><rect x="507.81" y="470.2" width="1.7" height="1.7" fill="#111"/><rect x="500.81" y="473.5" width="1.7" height="1.7" fill="#111"/><rect x="507.81" y="473.5" width="1.7" height="1.7" fill="#111"/><circle cx="505.16" cy="480.2" r="1.8" fill="#9a9a9a" stroke="#868686" stroke-width="0.4"/><path d="M499.81 483.7L510.51 483.7" stroke="#8a8a8a" stroke-width="0.7"/><rect x="500.41" y="484.1" width="9.5" height="5.2" fill="#c4c4c4"/><rect x="502.81" y="485.2" width="4.7" height="3" fill="#868686" rx="1.5"/><text x="517.4" y="468.6" transform="rotate(.03 517.4 468.6)" font-size="4.2" fill="#222" text-anchor="middle">iLO</text><rect x="515.2" y="469.8" width="3.2" height="5.6" fill="#888" stroke="#333" stroke-width="0.7" rx="1"/><text x="517.4" y="480" transform="rotate(.03 517.4 480)" font-size="4.2" fill="#222" text-anchor="middle">USB</text><rect x="515.2" y="481.2" width="3.2" height="5.6" fill="#888" stroke="#333" stroke-width="0.7" rx="1"/><rect x="240.3" y="452" width="283.45" height="40.6" fill="none" stroke="#222" stroke-width="1.1"/><rect x="240.3" y="492.6" width="283.45" height="40.7" fill="#c0c0c0"/><circle cx="247.5" cy="499.5" r="4.9" fill="#4a4a4a"/><text x="247.5" y="501.8" transform="rotate(.03 247.5 501.8)" font-size="6.2" fill="#eee" font-weight="700" text-anchor="middle" font-style="italic">hp</text><text x="241.6" y="511.2" transform="rotate(.03 241.6 511.2)" font-size="6.6" fill="#000" font-weight="700" font-family='Liberation Mono, monospace' textLength="26.6" lengthAdjust="spacingAndGlyphs">ProLiant</text><text x="241.6" y="516" transform="rotate(.03 241.6 516)" font-size="6.6" fill="#000" font-weight="700" font-family='Liberation Mono, monospace' textLength="26.8" lengthAdjust="spacingAndGlyphs">DL380G10</text><text x="241.6" y="520.2" transform="rotate(.03 241.6 520.2)" font-size="5" fill="#111" font-family='Liberation Mono, monospace' textLength="26" lengthAdjust="spacingAndGlyphs">826565-B21</text><text x="243" y="530" transform="rotate(.03 243 530)" font-size="3.9" fill="#8c8c8c">DL380G10-U1</text><rect x="268.4" y="495.4" width="70.4" height="5.6" fill="#4c4c4c"/><rect x="315.2" y="497.4" width="5.6" height="1.6" fill="#9a9a9a"/><text x="279.6" y="507.6" transform="rotate(.03 279.6 507.6)" font-size="3.2" fill="#111" text-anchor="end">1</text><rect x="280.2" y="505" width="8.4" height="2.6" fill="#c0c0c0" stroke="#111" stroke-width="0.9" rx="1.2"/><text x="284.6" y="513.2" transform="rotate(.03 284.6 513.2)" font-size="4.9" fill="#222" text-anchor="middle">USB</text><rect x="296.6" y="503.6" width="14" height="5.6" fill="#6a6a6a" stroke="#111" stroke-width="1" rx="1.6"/><path d="M298.4 505.6L308.8 505.6" stroke="#222" stroke-width="1" stroke-dasharray=".8 .6"/><path d="M299 507.4L308.2 507.4" stroke="#222" stroke-width="1" stroke-dasharray=".8 .6"/><text x="303.6" y="513.8" transform="rotate(.03 303.6 513.8)" font-size="4.9" fill="#222" text-anchor="middle">Display</text><text x="318.2" y="507.6" transform="rotate(.03 318.2 507.6)" font-size="3.2" fill="#111" text-anchor="end">2</text><rect x="318.8" y="505" width="8.4" height="2.6" fill="#c0c0c0" stroke="#111" stroke-width="0.9" rx="1.2"/><text x="323.2" y="513.2" transform="rotate(.03 323.2 513.2)" font-size="4.9" fill="#222" text-anchor="middle">USB</text><path d="M270.3 515.9h67M270.3 518.42h67M270.3 520.94h67M270.3 523.46h67M270.3 525.98h67M270.3 528.5h67M270.3 531.02h67" stroke="#0c0c0c" stroke-width="1.8" stroke-dasharray="4.1 1.55" fill="none"/><rect x="341.4" y="495.8" width="67" height="35.6" fill="#bcbcbc" stroke="#000" stroke-width="2.3"/><path d="M344.6 499.33h61M344.6 502.23h61M344.6 505.13h61M344.6 508.03h61M344.6 510.93h61M344.6 513.83h61M344.6 516.73h61M344.6 519.62h61M344.6 522.53h61M344.6 525.43h61M344.6 528.33h61" stroke="#0c0c0c" stroke-width="1.85" stroke-dasharray="4.2 1.66" fill="none"/><rect x="411.5" y="495.9" width="11.9" height="35.2" fill="#a9a9a9" stroke="#5e5e5e" stroke-width="1"/><path d="M412.9 497.3H422V503.4L419.4 506.9V516.9L422 520.4V524.1H412.9V520.4L415.5 516.9V506.9L412.9 503.4Z" fill="#c9c9c9" stroke="#7c7c7c" stroke-width="0.5"/><path d="M414.1 498.1H420.8V500.9Q420.8 503.3 417.45 503.3Q414.1 503.3 414.1 500.9Z" fill="#8a8a8a"/><rect x="413.1" y="507.5" width="1.7" height="1.7" fill="#111"/><rect x="420.1" y="507.5" width="1.7" height="1.7" fill="#111"/><rect x="413.1" y="510.8" width="1.7" height="1.7" fill="#111"/><rect x="420.1" y="510.8" width="1.7" height="1.7" fill="#111"/><rect x="413.1" y="514.1" width="1.7" height="1.7" fill="#111"/><rect x="420.1" y="514.1" width="1.7" height="1.7" fill="#111"/><circle cx="417.45" cy="520.8" r="1.8" fill="#9a9a9a" stroke="#868686" stroke-width="0.4"/><path d="M412.1 524.3L422.8 524.3" stroke="#8a8a8a" stroke-width="0.7"/><rect x="412.7" y="524.7" width="9.5" height="5.2" fill="#c4c4c4"/><rect x="415.1" y="525.8" width="4.7" height="3" fill="#868686" rx="1.5"/><rect x="424.03" y="495.9" width="11.9" height="35.2" fill="#a9a9a9" stroke="#5e5e5e" stroke-width="1"/><path d="M425.43 497.3H434.53V503.4L431.93 506.9V516.9L434.53 520.4V524.1H425.43V520.4L428.03 516.9V506.9L425.43 503.4Z" fill="#c9c9c9" stroke="#7c7c7c" stroke-width="0.5"/><path d="M426.63 498.1H433.33V500.9Q433.33 503.3 429.98 503.3Q426.63 503.3 426.63 500.9Z" fill="#8a8a8a"/><rect x="425.63" y="507.5" width="1.7" height="1.7" fill="#111"/><rect x="432.63" y="507.5" width="1.7" height="1.7" fill="#111"/><rect x="425.63" y="510.8" width="1.7" height="1.7" fill="#111"/><rect x="432.63" y="510.8" width="1.7" height="1.7" fill="#111"/><rect x="425.63" y="514.1" width="1.7" height="1.7" fill="#111"/><rect x="432.63" y="514.1" width="1.7" height="1.7" fill="#111"/><circle cx="429.98" cy="520.8" r="1.8" fill="#9a9a9a" stroke="#868686" stroke-width="0.4"/><path d="M424.63 524.3L435.33 524.3" stroke="#8a8a8a" stroke-width="0.7"/><rect x="425.23" y="524.7" width="9.5" height="5.2" fill="#c4c4c4"/><rect x="427.63" y="525.8" width="4.7" height="3" fill="#868686" rx="1.5"/><rect x="436.56" y="495.9" width="11.9" height="35.2" fill="#a9a9a9" stroke="#5e5e5e" stroke-width="1"/><path d="M437.96 497.3H447.06V503.4L444.46 506.9V516.9L447.06 520.4V524.1H437.96V520.4L440.56 516.9V506.9L437.96 503.4Z" fill="#c9c9c9" stroke="#7c7c7c" stroke-width="0.5"/><path d="M439.16 498.1H445.86V500.9Q445.86 503.3 442.51 503.3Q439.16 503.3 439.16 500.9Z" fill="#8a8a8a"/><rect x="438.16" y="507.5" width="1.7" height="1.7" fill="#111"/><rect x="445.16" y="507.5" width="1.7" height="1.7" fill="#111"/><rect x="438.16" y="510.8" width="1.7" height="1.7" fill="#111"/><rect x="445.16" y="510.8" width="1.7" height="1.7" fill="#111"/><rect x="438.16" y="514.1" width="1.7" height="1.7" fill="#111"/><rect x="445.16" y="514.1" width="1.7" height="1.7" fill="#111"/><circle cx="442.51" cy="520.8" r="1.8" fill="#9a9a9a" stroke="#868686" stroke-width="0.4"/><path d="M437.16 524.3L447.86 524.3" stroke="#8a8a8a" stroke-width="0.7"/><rect x="437.76" y="524.7" width="9.5" height="5.2" fill="#c4c4c4"/><rect x="440.16" y="525.8" width="4.7" height="3" fill="#868686" rx="1.5"/><rect x="449.09" y="495.9" width="11.9" height="35.2" fill="#a9a9a9" stroke="#5e5e5e" stroke-width="1"/><path d="M450.49 497.3H459.59V503.4L456.99 506.9V516.9L459.59 520.4V524.1H450.49V520.4L453.09 516.9V506.9L450.49 503.4Z" fill="#c9c9c9" stroke="#7c7c7c" stroke-width="0.5"/><path d="M451.69 498.1H458.39V500.9Q458.39 503.3 455.04 503.3Q451.69 503.3 451.69 500.9Z" fill="#8a8a8a"/><rect x="450.69" y="507.5" width="1.7" height="1.7" fill="#111"/><rect x="457.69" y="507.5" width="1.7" height="1.7" fill="#111"/><rect x="450.69" y="510.8" width="1.7" height="1.7" fill="#111"/><rect x="457.69" y="510.8" width="1.7" height="1.7" fill="#111"/><rect x="450.69" y="514.1" width="1.7" height="1.7" fill="#111"/><rect x="457.69" y="514.1" width="1.7" height="1.7" fill="#111"/><circle cx="455.04" cy="520.8" r="1.8" fill="#9a9a9a" stroke="#868686" stroke-width="0.4"/><path d="M449.69 524.3L460.39 524.3" stroke="#8a8a8a" stroke-width="0.7"/><rect x="450.29" y="524.7" width="9.5" height="5.2" fill="#c4c4c4"/><rect x="452.69" y="525.8" width="4.7" height="3" fill="#868686" rx="1.5"/><rect x="461.62" y="495.9" width="11.9" height="35.2" fill="#a9a9a9" stroke="#5e5e5e" stroke-width="1"/><path d="M463.02 497.3H472.12V503.4L469.52 506.9V516.9L472.12 520.4V524.1H463.02V520.4L465.62 516.9V506.9L463.02 503.4Z" fill="#c9c9c9" stroke="#7c7c7c" stroke-width="0.5"/><path d="M464.22 498.1H470.92V500.9Q470.92 503.3 467.57 503.3Q464.22 503.3 464.22 500.9Z" fill="#8a8a8a"/><rect x="463.22" y="507.5" width="1.7" height="1.7" fill="#111"/><rect x="470.22" y="507.5" width="1.7" height="1.7" fill="#111"/><rect x="463.22" y="510.8" width="1.7" height="1.7" fill="#111"/><rect x="470.22" y="510.8" width="1.7" height="1.7" fill="#111"/><rect x="463.22" y="514.1" width="1.7" height="1.7" fill="#111"/><rect x="470.22" y="514.1" width="1.7" height="1.7" fill="#111"/><circle cx="467.57" cy="520.8" r="1.8" fill="#9a9a9a" stroke="#868686" stroke-width="0.4"/><path d="M462.22 524.3L472.92 524.3" stroke="#8a8a8a" stroke-width="0.7"/><rect x="462.82" y="524.7" width="9.5" height="5.2" fill="#c4c4c4"/><rect x="465.22" y="525.8" width="4.7" height="3" fill="#868686" rx="1.5"/><rect x="474.15" y="495.9" width="11.9" height="35.2" fill="#a9a9a9" stroke="#5e5e5e" stroke-width="1"/><path d="M475.55 497.3H484.65V503.4L482.05 506.9V516.9L484.65 520.4V524.1H475.55V520.4L478.15 516.9V506.9L475.55 503.4Z" fill="#c9c9c9" stroke="#7c7c7c" stroke-width="0.5"/><path d="M476.75 498.1H483.45V500.9Q483.45 503.3 480.1 503.3Q476.75 503.3 476.75 500.9Z" fill="#8a8a8a"/><rect x="475.75" y="507.5" width="1.7" height="1.7" fill="#111"/><rect x="482.75" y="507.5" width="1.7" height="1.7" fill="#111"/><rect x="475.75" y="510.8" width="1.7" height="1.7" fill="#111"/><rect x="482.75" y="510.8" width="1.7" height="1.7" fill="#111"/><rect x="475.75" y="514.1" width="1.7" height="1.7" fill="#111"/><rect x="482.75" y="514.1" width="1.7" height="1.7" fill="#111"/><circle cx="480.1" cy="520.8" r="1.8" fill="#9a9a9a" stroke="#868686" stroke-width="0.4"/><path d="M474.75 524.3L485.45 524.3" stroke="#8a8a8a" stroke-width="0.7"/><rect x="475.35" y="524.7" width="9.5" height="5.2" fill="#c4c4c4"/><rect x="477.75" y="525.8" width="4.7" height="3" fill="#868686" rx="1.5"/><rect x="486.68" y="495.9" width="11.9" height="35.2" fill="#a9a9a9" stroke="#5e5e5e" stroke-width="1"/><path d="M488.08 497.3H497.18V503.4L494.58 506.9V516.9L497.18 520.4V524.1H488.08V520.4L490.68 516.9V506.9L488.08 503.4Z" fill="#c9c9c9" stroke="#7c7c7c" stroke-width="0.5"/><path d="M489.28 498.1H495.98V500.9Q495.98 503.3 492.63 503.3Q489.28 503.3 489.28 500.9Z" fill="#8a8a8a"/><rect x="488.28" y="507.5" width="1.7" height="1.7" fill="#111"/><rect x="495.28" y="507.5" width="1.7" height="1.7" fill="#111"/><rect x="488.28" y="510.8" width="1.7" height="1.7" fill="#111"/><rect x="495.28" y="510.8" width="1.7" height="1.7" fill="#111"/><rect x="488.28" y="514.1" width="1.7" height="1.7" fill="#111"/><rect x="495.28" y="514.1" width="1.7" height="1.7" fill="#111"/><circle cx="492.63" cy="520.8" r="1.8" fill="#9a9a9a" stroke="#868686" stroke-width="0.4"/><path d="M487.28 524.3L497.98 524.3" stroke="#8a8a8a" stroke-width="0.7"/><rect x="487.88" y="524.7" width="9.5" height="5.2" fill="#c4c4c4"/><rect x="490.28" y="525.8" width="4.7" height="3" fill="#868686" rx="1.5"/><rect x="499.21" y="495.9" width="11.9" height="35.2" fill="#a9a9a9" stroke="#5e5e5e" stroke-width="1"/><path d="M500.61 497.3H509.71V503.4L507.11 506.9V516.9L509.71 520.4V524.1H500.61V520.4L503.21 516.9V506.9L500.61 503.4Z" fill="#c9c9c9" stroke="#7c7c7c" stroke-width="0.5"/><path d="M501.81 498.1H508.51V500.9Q508.51 503.3 505.16 503.3Q501.81 503.3 501.81 500.9Z" fill="#8a8a8a"/><rect x="500.81" y="507.5" width="1.7" height="1.7" fill="#111"/><rect x="507.81" y="507.5" width="1.7" height="1.7" fill="#111"/><rect x="500.81" y="510.8" width="1.7" height="1.7" fill="#111"/><rect x="507.81" y="510.8" width="1.7" height="1.7" fill="#111"/><rect x="500.81" y="514.1" width="1.7" height="1.7" fill="#111"/><rect x="507.81" y="514.1" width="1.7" height="1.7" fill="#111"/><circle cx="505.16" cy="520.8" r="1.8" fill="#9a9a9a" stroke="#868686" stroke-width="0.4"/><path d="M499.81 524.3L510.51 524.3" stroke="#8a8a8a" stroke-width="0.7"/><rect x="500.41" y="524.7" width="9.5" height="5.2" fill="#c4c4c4"/><rect x="502.81" y="525.8" width="4.7" height="3" fill="#868686" rx="1.5"/><text x="517.4" y="509.2" transform="rotate(.03 517.4 509.2)" font-size="4.2" fill="#222" text-anchor="middle">iLO</text><rect x="515.2" y="510.4" width="3.2" height="5.6" fill="#888" stroke="#333" stroke-width="0.7" rx="1"/><text x="517.4" y="520.6" transform="rotate(.03 517.4 520.6)" font-size="4.2" fill="#222" text-anchor="middle">USB</text><rect x="515.2" y="521.8" width="3.2" height="5.6" fill="#888" stroke="#333" stroke-width="0.7" rx="1"/><rect x="240.3" y="492.6" width="283.45" height="40.7" fill="none" stroke="#222" stroke-width="1.1"/><rect x="240.3" y="533.3" width="283.45" height="21.4" fill="#fff"/><path d="M261.5 533.3V554.7M282.5 533.3V554.7M303.5 533.3V554.7M324.5 533.3V554.7M344.5 533.3V554.7M365.5 533.3V554.7M386.5 533.3V554.7M407.5 533.3V554.7M428.5 533.3V554.7M449.5 533.3V554.7M470.5 533.3V554.7M490.5 533.3V554.7M511.5 533.3V554.7" fill="none" stroke="#cacaca" stroke-width="1"/><path d="M251.5 533.3V554.7M272.5 533.3V554.7M292.5 533.3V554.7M313.5 533.3V554.7M334.5 533.3V554.7M355.5 533.3V554.7M376.5 533.3V554.7M397.5 533.3V554.7M417.5 533.3V554.7M438.5 533.3V554.7M459.5 533.3V554.7M480.5 533.3V554.7M501.5 533.3V554.7M240.3 544.5H523.75" fill="none" stroke="#b8b8b8" stroke-width="1" stroke-dasharray="2.8 7.625" stroke-dashoffset="6.5"/><rect x="240.3" y="554.7" width="283.45" height="41.4" fill="#c0c0c0"/><rect x="241.6" y="556.2" width="280" height="7.8" fill="#6c6c6c"/><rect x="242.5" y="556.9" width="6.8" height="6.4" fill="#5c5c5c"/><rect x="251.2" y="557.8" width="7.1" height="4.6" fill="#c4c4c4"/><path d="M251.2 560.1L258.3 560.1" stroke="#a4a4a4" stroke-width="0.5"/><path d="M253.4 560.1h4.9" stroke="#a4a4a4" stroke-width="4.6" stroke-dasharray="0.5 1.9" fill="none"/><rect x="261" y="557.8" width="15.3" height="4.6" fill="#c4c4c4"/><path d="M261 560.1L276.3 560.1" stroke="#a4a4a4" stroke-width="0.5"/><path d="M263.2 560.1h13.1" stroke="#a4a4a4" stroke-width="4.6" stroke-dasharray="0.5 1.9" fill="none"/><rect x="278.6" y="557.8" width="7.4" height="4.6" fill="#c4c4c4"/><path d="M278.6 560.1L286 560.1" stroke="#a4a4a4" stroke-width="0.5"/><path d="M280.8 560.1h5.2" stroke="#a4a4a4" stroke-width="4.6" stroke-dasharray="0.5 1.9" fill="none"/><rect x="287.1" y="556.2" width="1.2" height="7.8" fill="#4c4c4c"/><rect x="289.12" y="556.9" width="6.8" height="6.4" fill="#5c5c5c"/><rect x="297.82" y="557.8" width="7.1" height="4.6" fill="#c4c4c4"/><path d="M297.82 560.1L304.92 560.1" stroke="#a4a4a4" stroke-width="0.5"/><path d="M300.02 560.1h4.9" stroke="#a4a4a4" stroke-width="4.6" stroke-dasharray="0.5 1.9" fill="none"/><rect x="307.62" y="557.8" width="15.3" height="4.6" fill="#c4c4c4"/><path d="M307.62 560.1L322.92 560.1" stroke="#a4a4a4" stroke-width="0.5"/><path d="M309.82 560.1h13.1" stroke="#a4a4a4" stroke-width="4.6" stroke-dasharray="0.5 1.9" fill="none"/><rect x="325.22" y="557.8" width="7.4" height="4.6" fill="#c4c4c4"/><path d="M325.22 560.1L332.62 560.1" stroke="#a4a4a4" stroke-width="0.5"/><path d="M327.42 560.1h5.2" stroke="#a4a4a4" stroke-width="4.6" stroke-dasharray="0.5 1.9" fill="none"/><rect x="333.72" y="556.2" width="1.2" height="7.8" fill="#4c4c4c"/><rect x="335.74" y="556.9" width="6.8" height="6.4" fill="#5c5c5c"/><rect x="344.44" y="557.8" width="7.1" height="4.6" fill="#c4c4c4"/><path d="M344.44 560.1L351.54 560.1" stroke="#a4a4a4" stroke-width="0.5"/><path d="M346.64 560.1h4.9" stroke="#a4a4a4" stroke-width="4.6" stroke-dasharray="0.5 1.9" fill="none"/><rect x="354.24" y="557.8" width="15.3" height="4.6" fill="#c4c4c4"/><path d="M354.24 560.1L369.54 560.1" stroke="#a4a4a4" stroke-width="0.5"/><path d="M356.44 560.1h13.1" stroke="#a4a4a4" stroke-width="4.6" stroke-dasharray="0.5 1.9" fill="none"/><rect x="371.84" y="557.8" width="7.4" height="4.6" fill="#c4c4c4"/><path d="M371.84 560.1L379.24 560.1" stroke="#a4a4a4" stroke-width="0.5"/><path d="M374.04 560.1h5.2" stroke="#a4a4a4" stroke-width="4.6" stroke-dasharray="0.5 1.9" fill="none"/><rect x="380.34" y="556.2" width="1.2" height="7.8" fill="#4c4c4c"/><rect x="382.36" y="556.9" width="6.8" height="6.4" fill="#5c5c5c"/><rect x="391.06" y="557.8" width="7.1" height="4.6" fill="#c4c4c4"/><path d="M391.06 560.1L398.16 560.1" stroke="#a4a4a4" stroke-width="0.5"/><path d="M393.26 560.1h4.9" stroke="#a4a4a4" stroke-width="4.6" stroke-dasharray="0.5 1.9" fill="none"/><rect x="400.86" y="557.8" width="15.3" height="4.6" fill="#c4c4c4"/><path d="M400.86 560.1L416.16 560.1" stroke="#a4a4a4" stroke-width="0.5"/><path d="M403.06 560.1h13.1" stroke="#a4a4a4" stroke-width="4.6" stroke-dasharray="0.5 1.9" fill="none"/><rect x="418.46" y="557.8" width="7.4" height="4.6" fill="#c4c4c4"/><path d="M418.46 560.1L425.86 560.1" stroke="#a4a4a4" stroke-width="0.5"/><path d="M420.66 560.1h5.2" stroke="#a4a4a4" stroke-width="4.6" stroke-dasharray="0.5 1.9" fill="none"/><rect x="426.96" y="556.2" width="1.2" height="7.8" fill="#4c4c4c"/><rect x="428.98" y="556.9" width="6.8" height="6.4" fill="#5c5c5c"/><rect x="437.68" y="557.8" width="7.1" height="4.6" fill="#c4c4c4"/><path d="M437.68 560.1L444.78 560.1" stroke="#a4a4a4" stroke-width="0.5"/><path d="M439.88 560.1h4.9" stroke="#a4a4a4" stroke-width="4.6" stroke-dasharray="0.5 1.9" fill="none"/><rect x="447.48" y="557.8" width="15.3" height="4.6" fill="#c4c4c4"/><path d="M447.48 560.1L462.78 560.1" stroke="#a4a4a4" stroke-width="0.5"/><path d="M449.68 560.1h13.1" stroke="#a4a4a4" stroke-width="4.6" stroke-dasharray="0.5 1.9" fill="none"/><rect x="465.08" y="557.8" width="7.4" height="4.6" fill="#c4c4c4"/><path d="M465.08 560.1L472.48 560.1" stroke="#a4a4a4" stroke-width="0.5"/><path d="M467.28 560.1h5.2" stroke="#a4a4a4" stroke-width="4.6" stroke-dasharray="0.5 1.9" fill="none"/><rect x="473.58" y="556.2" width="1.2" height="7.8" fill="#4c4c4c"/><rect x="475.6" y="556.9" width="6.8" height="6.4" fill="#5c5c5c"/><rect x="484.3" y="557.8" width="7.1" height="4.6" fill="#c4c4c4"/><path d="M484.3 560.1L491.4 560.1" stroke="#a4a4a4" stroke-width="0.5"/><path d="M486.5 560.1h4.9" stroke="#a4a4a4" stroke-width="4.6" stroke-dasharray="0.5 1.9" fill="none"/><rect x="494.1" y="557.8" width="15.3" height="4.6" fill="#c4c4c4"/><path d="M494.1 560.1L509.4 560.1" stroke="#a4a4a4" stroke-width="0.5"/><path d="M496.3 560.1h13.1" stroke="#a4a4a4" stroke-width="4.6" stroke-dasharray="0.5 1.9" fill="none"/><rect x="511.7" y="557.8" width="7.4" height="4.6" fill="#c4c4c4"/><path d="M511.7 560.1L519.1 560.1" stroke="#a4a4a4" stroke-width="0.5"/><path d="M513.9 560.1h5.2" stroke="#a4a4a4" stroke-width="4.6" stroke-dasharray="0.5 1.9" fill="none"/><rect x="520.2" y="556.2" width="1.2" height="7.8" fill="#4c4c4c"/><rect x="247.2" y="566.2" width="190.4" height="10.3" fill="#1e1e1e"/><path d="M247.5 567.45h189.81M249.15 570.02h188.16M247.5 572.59h189.81M249.15 575.16h188.16" stroke="#c8c8c8" stroke-width="2.64" stroke-linecap="round" stroke-dasharray="0 3.3" fill="none"/><text x="451" y="569.3" transform="rotate(.03 451 569.3)" font-size="3.4" fill="#222" font-weight="700" text-anchor="middle">USB</text><text x="441.4" y="574.1" transform="rotate(.03 441.4 574.1)" font-size="2.8" fill="#222" font-weight="700">1</text><rect x="443.2" y="571.5" width="6.4" height="2.4" fill="#bbb" stroke="#222" stroke-width="0.8" rx="0.8"/><text x="451.4" y="574.1" transform="rotate(.03 451.4 574.1)" font-size="2.8" fill="#222" font-weight="700">2</text><rect x="453.4" y="571.5" width="6.4" height="2.4" fill="#bbb" stroke="#222" stroke-width="0.8" rx="0.8"/><text x="463.4" y="575.7" transform="rotate(.03 463.4 575.7)" font-size="11.4" fill="#5a5a5a" font-family='Liberation Serif, serif' textLength="19.8" lengthAdjust="spacingAndGlyphs">IBM</text><text x="486.2" y="570.3" transform="rotate(.03 486.2 570.3)" font-size="4.2" fill="#222" font-weight="700">S922</text><text x="486.2" y="575.3" transform="rotate(.03 486.2 575.3)" font-size="4.6" fill="#222" font-weight="700" textLength="23.4" lengthAdjust="spacingAndGlyphs">9009-22A</text><rect x="245.8" y="578.1" width="60.2" height="15.8" fill="#b0b0b0"/><path d="M247.3 579.5h57.21M249.08 581.78h55.43M247.3 584.06h57.21M249.08 586.34h55.43M247.3 588.62h57.21M249.08 590.9h55.43M247.3 593.18h57.21" stroke="#0c0c0c" stroke-width="2.12" stroke-linecap="round" stroke-dasharray="0 3.56" fill="none"/><rect x="316.9" y="578.1" width="60.2" height="15.8" fill="#b0b0b0"/><path d="M318.4 579.5h57.21M320.18 581.78h55.43M318.4 584.06h57.21M320.18 586.34h55.43M318.4 588.62h57.21M320.18 590.9h55.43M318.4 593.18h57.21" stroke="#0c0c0c" stroke-width="2.12" stroke-linecap="round" stroke-dasharray="0 3.56" fill="none"/><rect x="388" y="578.1" width="60.2" height="15.8" fill="#b0b0b0"/><path d="M389.5 579.5h57.21M391.28 581.78h55.43M389.5 584.06h57.21M391.28 586.34h55.43M389.5 588.62h57.21M391.28 590.9h55.43M389.5 593.18h57.21" stroke="#0c0c0c" stroke-width="2.12" stroke-linecap="round" stroke-dasharray="0 3.56" fill="none"/><rect x="458.7" y="578.1" width="60.2" height="15.8" fill="#b0b0b0"/><path d="M460.2 579.5h57.21M461.98 581.78h55.43M460.2 584.06h57.21M461.98 586.34h55.43M460.2 588.62h57.21M461.98 590.9h55.43M460.2 593.18h57.21" stroke="#0c0c0c" stroke-width="2.12" stroke-linecap="round" stroke-dasharray="0 3.56" fill="none"/><rect x="240.3" y="554.7" width="283.45" height="41.4" fill="none" stroke="#222" stroke-width="1.2"/><rect x="240.3" y="596.1" width="283.45" height="41.7" fill="#c0c0c0"/><rect x="241.6" y="597.6" width="280" height="7.8" fill="#6c6c6c"/><rect x="242.5" y="598.3" width="6.8" height="6.4" fill="#5c5c5c"/><rect x="251.2" y="599.2" width="7.1" height="4.6" fill="#c4c4c4"/><path d="M251.2 601.5L258.3 601.5" stroke="#a4a4a4" stroke-width="0.5"/><path d="M253.4 601.5h4.9" stroke="#a4a4a4" stroke-width="4.6" stroke-dasharray="0.5 1.9" fill="none"/><rect x="261" y="599.2" width="15.3" height="4.6" fill="#c4c4c4"/><path d="M261 601.5L276.3 601.5" stroke="#a4a4a4" stroke-width="0.5"/><path d="M263.2 601.5h13.1" stroke="#a4a4a4" stroke-width="4.6" stroke-dasharray="0.5 1.9" fill="none"/><rect x="278.6" y="599.2" width="7.4" height="4.6" fill="#c4c4c4"/><path d="M278.6 601.5L286 601.5" stroke="#a4a4a4" stroke-width="0.5"/><path d="M280.8 601.5h5.2" stroke="#a4a4a4" stroke-width="4.6" stroke-dasharray="0.5 1.9" fill="none"/><rect x="287.1" y="597.6" width="1.2" height="7.8" fill="#4c4c4c"/><rect x="289.12" y="598.3" width="6.8" height="6.4" fill="#5c5c5c"/><rect x="297.82" y="599.2" width="7.1" height="4.6" fill="#c4c4c4"/><path d="M297.82 601.5L304.92 601.5" stroke="#a4a4a4" stroke-width="0.5"/><path d="M300.02 601.5h4.9" stroke="#a4a4a4" stroke-width="4.6" stroke-dasharray="0.5 1.9" fill="none"/><rect x="307.62" y="599.2" width="15.3" height="4.6" fill="#c4c4c4"/><path d="M307.62 601.5L322.92 601.5" stroke="#a4a4a4" stroke-width="0.5"/><path d="M309.82 601.5h13.1" stroke="#a4a4a4" stroke-width="4.6" stroke-dasharray="0.5 1.9" fill="none"/><rect x="325.22" y="599.2" width="7.4" height="4.6" fill="#c4c4c4"/><path d="M325.22 601.5L332.62 601.5" stroke="#a4a4a4" stroke-width="0.5"/><path d="M327.42 601.5h5.2" stroke="#a4a4a4" stroke-width="4.6" stroke-dasharray="0.5 1.9" fill="none"/><rect x="333.72" y="597.6" width="1.2" height="7.8" fill="#4c4c4c"/><rect x="335.74" y="598.3" width="6.8" height="6.4" fill="#5c5c5c"/><rect x="344.44" y="599.2" width="7.1" height="4.6" fill="#c4c4c4"/><path d="M344.44 601.5L351.54 601.5" stroke="#a4a4a4" stroke-width="0.5"/><path d="M346.64 601.5h4.9" stroke="#a4a4a4" stroke-width="4.6" stroke-dasharray="0.5 1.9" fill="none"/><rect x="354.24" y="599.2" width="15.3" height="4.6" fill="#c4c4c4"/><path d="M354.24 601.5L369.54 601.5" stroke="#a4a4a4" stroke-width="0.5"/><path d="M356.44 601.5h13.1" stroke="#a4a4a4" stroke-width="4.6" stroke-dasharray="0.5 1.9" fill="none"/><rect x="371.84" y="599.2" width="7.4" height="4.6" fill="#c4c4c4"/><path d="M371.84 601.5L379.24 601.5" stroke="#a4a4a4" stroke-width="0.5"/><path d="M374.04 601.5h5.2" stroke="#a4a4a4" stroke-width="4.6" stroke-dasharray="0.5 1.9" fill="none"/><rect x="380.34" y="597.6" width="1.2" height="7.8" fill="#4c4c4c"/><rect x="382.36" y="598.3" width="6.8" height="6.4" fill="#5c5c5c"/><rect x="391.06" y="599.2" width="7.1" height="4.6" fill="#c4c4c4"/><path d="M391.06 601.5L398.16 601.5" stroke="#a4a4a4" stroke-width="0.5"/><path d="M393.26 601.5h4.9" stroke="#a4a4a4" stroke-width="4.6" stroke-dasharray="0.5 1.9" fill="none"/><rect x="400.86" y="599.2" width="15.3" height="4.6" fill="#c4c4c4"/><path d="M400.86 601.5L416.16 601.5" stroke="#a4a4a4" stroke-width="0.5"/><path d="M403.06 601.5h13.1" stroke="#a4a4a4" stroke-width="4.6" stroke-dasharray="0.5 1.9" fill="none"/><rect x="418.46" y="599.2" width="7.4" height="4.6" fill="#c4c4c4"/><path d="M418.46 601.5L425.86 601.5" stroke="#a4a4a4" stroke-width="0.5"/><path d="M420.66 601.5h5.2" stroke="#a4a4a4" stroke-width="4.6" stroke-dasharray="0.5 1.9" fill="none"/><rect x="426.96" y="597.6" width="1.2" height="7.8" fill="#4c4c4c"/><rect x="428.98" y="598.3" width="6.8" height="6.4" fill="#5c5c5c"/><rect x="437.68" y="599.2" width="7.1" height="4.6" fill="#c4c4c4"/><path d="M437.68 601.5L444.78 601.5" stroke="#a4a4a4" stroke-width="0.5"/><path d="M439.88 601.5h4.9" stroke="#a4a4a4" stroke-width="4.6" stroke-dasharray="0.5 1.9" fill="none"/><rect x="447.48" y="599.2" width="15.3" height="4.6" fill="#c4c4c4"/><path d="M447.48 601.5L462.78 601.5" stroke="#a4a4a4" stroke-width="0.5"/><path d="M449.68 601.5h13.1" stroke="#a4a4a4" stroke-width="4.6" stroke-dasharray="0.5 1.9" fill="none"/><rect x="465.08" y="599.2" width="7.4" height="4.6" fill="#c4c4c4"/><path d="M465.08 601.5L472.48 601.5" stroke="#a4a4a4" stroke-width="0.5"/><path d="M467.28 601.5h5.2" stroke="#a4a4a4" stroke-width="4.6" stroke-dasharray="0.5 1.9" fill="none"/><rect x="473.58" y="597.6" width="1.2" height="7.8" fill="#4c4c4c"/><rect x="475.6" y="598.3" width="6.8" height="6.4" fill="#5c5c5c"/><rect x="484.3" y="599.2" width="7.1" height="4.6" fill="#c4c4c4"/><path d="M484.3 601.5L491.4 601.5" stroke="#a4a4a4" stroke-width="0.5"/><path d="M486.5 601.5h4.9" stroke="#a4a4a4" stroke-width="4.6" stroke-dasharray="0.5 1.9" fill="none"/><rect x="494.1" y="599.2" width="15.3" height="4.6" fill="#c4c4c4"/><path d="M494.1 601.5L509.4 601.5" stroke="#a4a4a4" stroke-width="0.5"/><path d="M496.3 601.5h13.1" stroke="#a4a4a4" stroke-width="4.6" stroke-dasharray="0.5 1.9" fill="none"/><rect x="511.7" y="599.2" width="7.4" height="4.6" fill="#c4c4c4"/><path d="M511.7 601.5L519.1 601.5" stroke="#a4a4a4" stroke-width="0.5"/><path d="M513.9 601.5h5.2" stroke="#a4a4a4" stroke-width="4.6" stroke-dasharray="0.5 1.9" fill="none"/><rect x="520.2" y="597.6" width="1.2" height="7.8" fill="#4c4c4c"/><rect x="247.2" y="607.6" width="190.4" height="10.3" fill="#1e1e1e"/><path d="M247.5 608.85h189.81M249.15 611.42h188.16M247.5 613.99h189.81M249.15 616.56h188.16" stroke="#c8c8c8" stroke-width="2.64" stroke-linecap="round" stroke-dasharray="0 3.3" fill="none"/><text x="451" y="610.7" transform="rotate(.03 451 610.7)" font-size="3.4" fill="#222" font-weight="700" text-anchor="middle">USB</text><text x="441.4" y="615.5" transform="rotate(.03 441.4 615.5)" font-size="2.8" fill="#222" font-weight="700">1</text><rect x="443.2" y="612.9" width="6.4" height="2.4" fill="#bbb" stroke="#222" stroke-width="0.8" rx="0.8"/><text x="451.4" y="615.5" transform="rotate(.03 451.4 615.5)" font-size="2.8" fill="#222" font-weight="700">2</text><rect x="453.4" y="612.9" width="6.4" height="2.4" fill="#bbb" stroke="#222" stroke-width="0.8" rx="0.8"/><text x="463.4" y="617.1" transform="rotate(.03 463.4 617.1)" font-size="11.4" fill="#5a5a5a" font-family='Liberation Serif, serif' textLength="19.8" lengthAdjust="spacingAndGlyphs">IBM</text><text x="486.2" y="611.7" transform="rotate(.03 486.2 611.7)" font-size="4.2" fill="#222" font-weight="700">S922</text><text x="486.2" y="616.7" transform="rotate(.03 486.2 616.7)" font-size="4.6" fill="#222" font-weight="700" textLength="23.4" lengthAdjust="spacingAndGlyphs">9009-22A</text><rect x="245.8" y="619.5" width="60.2" height="15.8" fill="#b0b0b0"/><path d="M247.3 620.9h57.21M249.08 623.18h55.43M247.3 625.46h57.21M249.08 627.74h55.43M247.3 630.02h57.21M249.08 632.3h55.43M247.3 634.58h57.21" stroke="#0c0c0c" stroke-width="2.12" stroke-linecap="round" stroke-dasharray="0 3.56" fill="none"/><rect x="316.9" y="619.5" width="60.2" height="15.8" fill="#b0b0b0"/><path d="M318.4 620.9h57.21M320.18 623.18h55.43M318.4 625.46h57.21M320.18 627.74h55.43M318.4 630.02h57.21M320.18 632.3h55.43M318.4 634.58h57.21" stroke="#0c0c0c" stroke-width="2.12" stroke-linecap="round" stroke-dasharray="0 3.56" fill="none"/><rect x="388" y="619.5" width="60.2" height="15.8" fill="#b0b0b0"/><path d="M389.5 620.9h57.21M391.28 623.18h55.43M389.5 625.46h57.21M391.28 627.74h55.43M389.5 630.02h57.21M391.28 632.3h55.43M389.5 634.58h57.21" stroke="#0c0c0c" stroke-width="2.12" stroke-linecap="round" stroke-dasharray="0 3.56" fill="none"/><rect x="458.7" y="619.5" width="60.2" height="15.8" fill="#b0b0b0"/><path d="M460.2 620.9h57.21M461.98 623.18h55.43M460.2 625.46h57.21M461.98 627.74h55.43M460.2 630.02h57.21M461.98 632.3h55.43M460.2 634.58h57.21" stroke="#0c0c0c" stroke-width="2.12" stroke-linecap="round" stroke-dasharray="0 3.56" fill="none"/><rect x="240.3" y="596.1" width="283.45" height="41.7" fill="none" stroke="#222" stroke-width="1.2"/><rect x="240.3" y="637.8" width="283.45" height="21.4" fill="#fff"/><path d="M261.5 637.8V659.2M282.5 637.8V659.2M303.5 637.8V659.2M324.5 637.8V659.2M344.5 637.8V659.2M365.5 637.8V659.2M386.5 637.8V659.2M407.5 637.8V659.2M428.5 637.8V659.2M449.5 637.8V659.2M470.5 637.8V659.2M490.5 637.8V659.2M511.5 637.8V659.2" fill="none" stroke="#cacaca" stroke-width="1"/><path d="M251.5 637.8V659.2M272.5 637.8V659.2M292.5 637.8V659.2M313.5 637.8V659.2M334.5 637.8V659.2M355.5 637.8V659.2M376.5 637.8V659.2M397.5 637.8V659.2M417.5 637.8V659.2M438.5 637.8V659.2M459.5 637.8V659.2M480.5 637.8V659.2M501.5 637.8V659.2M240.3 648.5H523.75" fill="none" stroke="#b8b8b8" stroke-width="1" stroke-dasharray="2.8 7.625" stroke-dashoffset="6.5"/><rect x="240.3" y="659.2" width="283.45" height="21.1" fill="#c0c0c0"/><path d="M243.4 664.2L243.4 665" stroke="#111" stroke-width="0.7"/><path d="M244.45 663.4L244.45 665" stroke="#111" stroke-width="0.7"/><path d="M245.5 662.4L245.5 665" stroke="#111" stroke-width="0.7"/><path d="M246.55 663.4L246.55 665" stroke="#111" stroke-width="0.7"/><path d="M247.6 664.2L247.6 665" stroke="#111" stroke-width="0.7"/><path d="M248.65 663.4L248.65 665" stroke="#111" stroke-width="0.7"/><path d="M249.7 662.4L249.7 665" stroke="#111" stroke-width="0.7"/><path d="M250.75 663.4L250.75 665" stroke="#111" stroke-width="0.7"/><path d="M251.8 664.2L251.8 665" stroke="#111" stroke-width="0.7"/><text x="254.2" y="665" transform="rotate(.03 254.2 665)" font-size="3.6" fill="#111" font-weight="700">CISCO</text><rect x="247.3" y="668" width="16.4" height="11.6" fill="#8a8a8a" stroke="#111" stroke-width="0.9" rx="1"/><path d="M249.2 669.8H261.8V675.8L259.8 678.2H251.2L249.2 675.8Z" fill="#111"/><rect x="252" y="672.2" width="1.3" height="3.2" fill="#8a8a8a"/><rect x="254.9" y="672.2" width="1.3" height="3.2" fill="#8a8a8a"/><rect x="257.8" y="672.2" width="1.3" height="3.2" fill="#8a8a8a"/><path d="M272.3 660.2L272.3 679.3" stroke="#b4b4b4" stroke-width="0.7"/><text x="278" y="668.6" transform="rotate(.03 278 668.6)" font-size="3.2" fill="#111" font-weight="700">Con</text><rect x="278" y="669.8" width="6.8" height="6.6" fill="#fff"/><path d="M278.95 670.86H283.85V673.63Q283.85 675.48 281.4 675.48Q278.95 675.48 278.95 673.63Z" fill="#000"/><rect x="317" y="663.8" width="41.8" height="13.6" fill="#f6f6f6"/><path d="M318.15 670V666.4Q318.15 664.4 320.65 664.4Q323.15 664.4 323.15 666.4V670Z" fill="#0a0a0a"/><path d="M318.15 671.2V674.8Q318.15 676.8 320.65 676.8Q323.15 676.8 323.15 674.8V671.2Z" fill="#0a0a0a"/><path d="M325.05 670V666.4Q325.05 664.4 327.55 664.4Q330.05 664.4 330.05 666.4V670Z" fill="#0a0a0a"/><path d="M325.05 671.2V674.8Q325.05 676.8 327.55 676.8Q330.05 676.8 330.05 674.8V671.2Z" fill="#0a0a0a"/><path d="M331.95 670V666.4Q331.95 664.4 334.45 664.4Q336.95 664.4 336.95 666.4V670Z" fill="#0a0a0a"/><path d="M331.95 671.2V674.8Q331.95 676.8 334.45 676.8Q336.95 676.8 336.95 674.8V671.2Z" fill="#0a0a0a"/><path d="M338.85 670V666.4Q338.85 664.4 341.35 664.4Q343.85 664.4 343.85 666.4V670Z" fill="#0a0a0a"/><path d="M338.85 671.2V674.8Q338.85 676.8 341.35 676.8Q343.85 676.8 343.85 674.8V671.2Z" fill="#0a0a0a"/><path d="M345.75 670V666.4Q345.75 664.4 348.25 664.4Q350.75 664.4 350.75 666.4V670Z" fill="#0a0a0a"/><path d="M345.75 671.2V674.8Q345.75 676.8 348.25 676.8Q350.75 676.8 350.75 674.8V671.2Z" fill="#0a0a0a"/><path d="M352.65 670V666.4Q352.65 664.4 355.15 664.4Q357.65 664.4 357.65 666.4V670Z" fill="#0a0a0a"/><path d="M352.65 671.2V674.8Q352.65 676.8 355.15 676.8Q357.65 676.8 357.65 674.8V671.2Z" fill="#0a0a0a"/><rect x="373.8" y="663.8" width="41.8" height="13.6" fill="#f6f6f6"/><path d="M374.95 670V666.4Q374.95 664.4 377.45 664.4Q379.95 664.4 379.95 666.4V670Z" fill="#0a0a0a"/><path d="M374.95 671.2V674.8Q374.95 676.8 377.45 676.8Q379.95 676.8 379.95 674.8V671.2Z" fill="#0a0a0a"/><path d="M381.85 670V666.4Q381.85 664.4 384.35 664.4Q386.85 664.4 386.85 666.4V670Z" fill="#0a0a0a"/><path d="M381.85 671.2V674.8Q381.85 676.8 384.35 676.8Q386.85 676.8 386.85 674.8V671.2Z" fill="#0a0a0a"/><path d="M388.75 670V666.4Q388.75 664.4 391.25 664.4Q393.75 664.4 393.75 666.4V670Z" fill="#0a0a0a"/><path d="M388.75 671.2V674.8Q388.75 676.8 391.25 676.8Q393.75 676.8 393.75 674.8V671.2Z" fill="#0a0a0a"/><path d="M395.65 670V666.4Q395.65 664.4 398.15 664.4Q400.65 664.4 400.65 666.4V670Z" fill="#0a0a0a"/><path d="M395.65 671.2V674.8Q395.65 676.8 398.15 676.8Q400.65 676.8 400.65 674.8V671.2Z" fill="#0a0a0a"/><path d="M402.55 670V666.4Q402.55 664.4 405.05 664.4Q407.55 664.4 407.55 666.4V670Z" fill="#0a0a0a"/><path d="M402.55 671.2V674.8Q402.55 676.8 405.05 676.8Q407.55 676.8 407.55 674.8V671.2Z" fill="#0a0a0a"/><path d="M409.45 670V666.4Q409.45 664.4 411.95 664.4Q414.45 664.4 414.45 666.4V670Z" fill="#0a0a0a"/><path d="M409.45 671.2V674.8Q409.45 676.8 411.95 676.8Q414.45 676.8 414.45 674.8V671.2Z" fill="#0a0a0a"/><rect x="381.9" y="664.5" width="5.2" height="5.4" fill="#16e424"/><text x="316.6" y="667.8" transform="rotate(.03 316.6 667.8)" font-size="2.8" fill="#111" font-weight="700" text-anchor="end">1x</text><text x="316.6" y="675.6" transform="rotate(.03 316.6 675.6)" font-size="2.8" fill="#111" font-weight="700" text-anchor="end">2x</text><text x="359.6" y="667.8" transform="rotate(.03 359.6 667.8)" font-size="2.8" fill="#111" font-weight="700">11x</text><text x="359.6" y="675.6" transform="rotate(.03 359.6 675.6)" font-size="2.8" fill="#111" font-weight="700">12x</text><text x="373.4" y="667.8" transform="rotate(.03 373.4 667.8)" font-size="2.8" fill="#111" font-weight="700" text-anchor="end">13x</text><text x="373.4" y="675.6" transform="rotate(.03 373.4 675.6)" font-size="2.8" fill="#111" font-weight="700" text-anchor="end">14x</text><text x="416.2" y="667.8" transform="rotate(.03 416.2 667.8)" font-size="2.8" fill="#111" font-weight="700">23x</text><text x="416.2" y="675.6" transform="rotate(.03 416.2 675.6)" font-size="2.8" fill="#111" font-weight="700">24x</text><rect x="448" y="663" width="7" height="5.6" fill="#9c9c9c" stroke="#7c7c7c" stroke-width="0.5"/><rect x="448" y="670.6" width="7" height="5.6" fill="#9c9c9c" stroke="#7c7c7c" stroke-width="0.5"/><text x="456.6" y="667.8" transform="rotate(.03 456.6 667.8)" font-size="3.2" fill="#111" font-weight="700">1</text><text x="456.6" y="675.6" transform="rotate(.03 456.6 675.6)" font-size="3.2" fill="#111" font-weight="700">2</text><text x="522.4" y="665" transform="rotate(.03 522.4 665)" font-size="5" fill="#111" font-weight="700" text-anchor="end">ME 3400 series</text><text x="506.6" y="670.8" transform="rotate(.03 506.6 670.8)" font-size="3.9" fill="#8c8c8c" text-anchor="end">ME3400-1001</text><text x="522.2" y="678.2" transform="rotate(.03 522.2 678.2)" font-size="5" fill="#111" font-weight="700" text-anchor="end">ME-3400-24TS-A</text><rect x="240.3" y="680.3" width="283.45" height="21.2" fill="#7f96da"/><path d="M261.5 680.3V701.5M282.5 680.3V701.5M303.5 680.3V701.5M324.5 680.3V701.5M344.5 680.3V701.5M365.5 680.3V701.5M386.5 680.3V701.5M407.5 680.3V701.5M428.5 680.3V701.5M449.5 680.3V701.5M470.5 680.3V701.5M490.5 680.3V701.5M511.5 680.3V701.5" fill="none" stroke="#7189cf" stroke-width="1"/><path d="M251.5 680.3V701.5M272.5 680.3V701.5M292.5 680.3V701.5M313.5 680.3V701.5M334.5 680.3V701.5M355.5 680.3V701.5M376.5 680.3V701.5M397.5 680.3V701.5M417.5 680.3V701.5M438.5 680.3V701.5M459.5 680.3V701.5M480.5 680.3V701.5M501.5 680.3V701.5M240.3 690.5H523.75" fill="none" stroke="#7a91d6" stroke-width="1" stroke-dasharray="2.8 7.625" stroke-dashoffset="6.5"/><path d="M240.3 680.3L523.75 680.3" stroke="#3a4a80" stroke-width="1"/><path d="M240.3 701.2L523.75 701.2" stroke="#3a4a80" stroke-width="1"/><path d="M240.3 220.8L523.75 220.8" stroke="#000" stroke-width="1.5"/><path d="M240.3 241.9L523.75 241.9" stroke="#000" stroke-width="1.5"/><path d="M240.3 263L523.75 263" stroke="#000" stroke-width="1.5"/><path d="M240.3 284.2L523.75 284.2" stroke="#000" stroke-width="1.5"/><path d="M240.3 304.5L523.75 304.5" stroke="#000" stroke-width="1.3"/><path d="M240.3 336.2L523.75 336.2" stroke="#000" stroke-width="1.3"/><path d="M240.3 398.9L523.75 398.9" stroke="#000" stroke-width="1.4"/><path d="M240.3 420.1L523.75 420.1" stroke="#000" stroke-width="1.3"/><path d="M240.3 452L523.75 452" stroke="#111" stroke-width="1.3"/><path d="M240.3 492.6L523.75 492.6" stroke="#2c2c2c" stroke-width="1"/><path d="M240.3 533.3L523.75 533.3" stroke="#111" stroke-width="1.2"/><path d="M240.3 554.7L523.75 554.7" stroke="#111" stroke-width="1.2"/><path d="M240.3 596.1L523.75 596.1" stroke="#111" stroke-width="1.5"/><path d="M240.3 637.8L523.75 637.8" stroke="#111" stroke-width="1.2"/><path d="M240.3 659.2L523.75 659.2" stroke="#4a4a4a" stroke-width="1"/><path d="M240.3 680.3L523.75 680.3" stroke="#2e3448" stroke-width="1"/><path d="M240.3 203L240.3 701.5" stroke="#000" stroke-width="1.2"/><path d="M523.75 203L523.75 701.5" stroke="#000" stroke-width="1.1"/></g><text x="546.8" y="404" transform="rotate(.03 546.8 404)" font-size="3.8" fill="#6a6a6a" textLength="35.6" lengthAdjust="spacingAndGlyphs">N2K-C2232PP-1000</text><rect x="538.8" y="226" width="4.4" height="102" fill="#f0f0f0" rx="2.2"/><rect x="538.8" y="562" width="4.4" height="100" fill="#f2f2f2" rx="2.2"/><text x="630.7" y="143.3" transform="rotate(.03 630.7 143.3)" font-size="6.1" fill="#111" font-weight="700">Frontansicht</text><text x="630.7" y="153.4" transform="rotate(.03 630.7 153.4)" font-size="6.1" fill="#111" font-weight="700">Campus</text><text x="668.3" y="153.4" transform="rotate(.03 668.3 153.4)" font-size="6.1" fill="#4a4a4a">Berlin</text><text x="630.7" y="160.78" transform="rotate(.03 630.7 160.78)" font-size="6.1" fill="#111" font-weight="700">Gebäude</text><text x="668.3" y="160.78" transform="rotate(.03 668.3 160.78)" font-size="6.1" fill="#4a4a4a">Wilhelmsruher Damm 130-132</text><text x="630.7" y="168.16" transform="rotate(.03 630.7 168.16)" font-size="6.1" fill="#111" font-weight="700">Stockwerk</text><text x="668.3" y="168.16" transform="rotate(.03 668.3 168.16)" font-size="6.1" fill="#4a4a4a">basement</text><text x="630.7" y="175.54" transform="rotate(.03 630.7 175.54)" font-size="6.1" fill="#111" font-weight="700">Raum</text><text x="668.3" y="175.54" transform="rotate(.03 668.3 175.54)" font-size="6.1" fill="#4a4a4a">U1.05</text><text x="630.7" y="182.92" transform="rotate(.03 630.7 182.92)" font-size="6.1" fill="#111" font-weight="700">Objekt-ID</text><text x="668.3" y="182.92" transform="rotate(.03 668.3 182.92)" font-size="6.1" fill="#4a4a4a">U1.05-0106_storage</text><text x="630.7" y="190.3" transform="rotate(.03 630.7 190.3)" font-size="6.1" fill="#111" font-weight="700">Anzeige-ID</text><text x="668.3" y="190.3" transform="rotate(.03 668.3 190.3)" font-size="6.1" fill="#4a4a4a">U1.05-0106_storage</text><text x="630.7" y="197.68" transform="rotate(.03 630.7 197.68)" font-size="6.1" fill="#111" font-weight="700">Objekttyp</text><text x="668.3" y="197.68" transform="rotate(.03 668.3 197.68)" font-size="6.1" fill="#4a4a4a">RITTAL-42 - Switch cabinet, 42 U (DC) (RITTAL-42)</text><text x="863.5" y="143.3" transform="rotate(.03 863.5 143.3)" font-size="5.9" fill="#111" font-weight="700">Wärmelast Schrank</text><text x="863.5" y="157" transform="rotate(.03 863.5 157)" font-size="5.9" fill="#111" font-weight="700">Wärmelast Zone</text><text x="863.5" y="170.7" transform="rotate(.03 863.5 170.7)" font-size="5.9" fill="#111" font-weight="700">Traglast Schrank</text><text x="863.5" y="184.4" transform="rotate(.03 863.5 184.4)" font-size="5.9" fill="#111" font-weight="700">Traglast Zone</text><path d="M928.6 148.2L935.8 141" fill="none" stroke="#3cc04a" stroke-width="3.6" stroke-linecap="round"/><path d="M929.2 147.6L935.6 141.2" fill="none" stroke="#c8f5c8" stroke-width="1.2" stroke-linecap="round"/><circle cx="928" cy="148.8" r="1.7" fill="#b05a28"/><path d="M928.6 161.8L935.8 154.6" fill="none" stroke="#f07078" stroke-width="3.6" stroke-linecap="round"/><path d="M929.2 161.2L935.6 154.8" fill="none" stroke="#ffe0e0" stroke-width="1.2" stroke-linecap="round"/><circle cx="928" cy="162.4" r="1.7" fill="#b05a28"/><path d="M930.8 167.7L932.8 166.5L934.6 167.9L937.6 174.1L932.6 177.5L927 173.9Z" fill="#1e9a28" stroke="#0c6414" stroke-width="0.5"/><path d="M932.6 171.1L937.6 174.1L932.6 177.5Z" fill="#0c6414"/><text x="932.3" y="175.1" transform="rotate(.03 932.3 175.1)" font-size="4.2" fill="#fff" font-weight="700" text-anchor="middle">kg</text><path d="M930.8 181.2L932.8 180L934.6 181.4L937.6 187.6L932.6 191L927 187.4Z" fill="#c41a1a" stroke="#7c0c0c" stroke-width="0.5"/><path d="M932.6 184.6L937.6 187.6L932.6 191Z" fill="#7c0c0c"/><text x="932.3" y="188.6" transform="rotate(.03 932.3 188.6)" font-size="4.2" fill="#fff" font-weight="700" text-anchor="middle">kg</text><rect x="631.3" y="203.2" width="308.1" height="498.3" fill="#c3c3c3"/><clipPath id="clipR"><rect x="631.3" y="203.2" width="308.1" height="498.3"/></clipPath><g clip-path="url(#clipR)"><text x="632.1" y="209.1" transform="rotate(.03 632.1 209.1)" font-size="6.4" fill="#505050">42</text><text x="932.3" y="209.1" transform="rotate(.03 932.3 209.1)" font-size="6.4" fill="#505050">42</text><text x="632.1" y="230.05" transform="rotate(.03 632.1 230.05)" font-size="6.4" fill="#505050">41</text><text x="932.3" y="230.05" transform="rotate(.03 932.3 230.05)" font-size="6.4" fill="#505050">41</text><path d="M631.3 222.95L644.3 222.95" stroke="#b4b4b4" stroke-width="0.7"/><path d="M926.9 222.95L939.4 222.95" stroke="#b4b4b4" stroke-width="0.7"/><path d="M631.3 223.75L644.3 223.75" stroke="#dedede" stroke-width="0.9"/><path d="M926.9 223.75L939.4 223.75" stroke="#dedede" stroke-width="0.9"/><text x="632.1" y="251" transform="rotate(.03 632.1 251)" font-size="6.4" fill="#505050">40</text><text x="932.3" y="251" transform="rotate(.03 932.3 251)" font-size="6.4" fill="#505050">40</text><path d="M631.3 243.9L644.3 243.9" stroke="#b4b4b4" stroke-width="0.7"/><path d="M926.9 243.9L939.4 243.9" stroke="#b4b4b4" stroke-width="0.7"/><path d="M631.3 244.7L644.3 244.7" stroke="#dedede" stroke-width="0.9"/><path d="M926.9 244.7L939.4 244.7" stroke="#dedede" stroke-width="0.9"/><text x="632.1" y="271.95" transform="rotate(.03 632.1 271.95)" font-size="6.4" fill="#505050">39</text><text x="932.3" y="271.95" transform="rotate(.03 932.3 271.95)" font-size="6.4" fill="#505050">39</text><path d="M631.3 264.85L644.3 264.85" stroke="#b4b4b4" stroke-width="0.7"/><path d="M926.9 264.85L939.4 264.85" stroke="#b4b4b4" stroke-width="0.7"/><path d="M631.3 265.65L644.3 265.65" stroke="#dedede" stroke-width="0.9"/><path d="M926.9 265.65L939.4 265.65" stroke="#dedede" stroke-width="0.9"/><text x="632.1" y="292.9" transform="rotate(.03 632.1 292.9)" font-size="6.4" fill="#505050">38</text><text x="932.3" y="292.9" transform="rotate(.03 932.3 292.9)" font-size="6.4" fill="#505050">38</text><path d="M631.3 285.8L644.3 285.8" stroke="#b4b4b4" stroke-width="0.7"/><path d="M926.9 285.8L939.4 285.8" stroke="#b4b4b4" stroke-width="0.7"/><path d="M631.3 286.6L644.3 286.6" stroke="#dedede" stroke-width="0.9"/><path d="M926.9 286.6L939.4 286.6" stroke="#dedede" stroke-width="0.9"/><text x="632.1" y="313.85" transform="rotate(.03 632.1 313.85)" font-size="6.4" fill="#505050">37</text><text x="932.3" y="313.85" transform="rotate(.03 932.3 313.85)" font-size="6.4" fill="#505050">37</text><path d="M631.3 306.75L644.3 306.75" stroke="#b4b4b4" stroke-width="0.7"/><path d="M926.9 306.75L939.4 306.75" stroke="#b4b4b4" stroke-width="0.7"/><path d="M631.3 307.55L644.3 307.55" stroke="#dedede" stroke-width="0.9"/><path d="M926.9 307.55L939.4 307.55" stroke="#dedede" stroke-width="0.9"/><text x="632.1" y="334.8" transform="rotate(.03 632.1 334.8)" font-size="6.4" fill="#505050">36</text><text x="932.3" y="334.8" transform="rotate(.03 932.3 334.8)" font-size="6.4" fill="#505050">36</text><path d="M631.3 327.7L644.3 327.7" stroke="#b4b4b4" stroke-width="0.7"/><path d="M926.9 327.7L939.4 327.7" stroke="#b4b4b4" stroke-width="0.7"/><path d="M631.3 328.5L644.3 328.5" stroke="#dedede" stroke-width="0.9"/><path d="M926.9 328.5L939.4 328.5" stroke="#dedede" stroke-width="0.9"/><text x="632.1" y="355.75" transform="rotate(.03 632.1 355.75)" font-size="6.4" fill="#505050">35</text><text x="932.3" y="355.75" transform="rotate(.03 932.3 355.75)" font-size="6.4" fill="#505050">35</text><path d="M631.3 348.65L644.3 348.65" stroke="#b4b4b4" stroke-width="0.7"/><path d="M926.9 348.65L939.4 348.65" stroke="#b4b4b4" stroke-width="0.7"/><path d="M631.3 349.45L644.3 349.45" stroke="#dedede" stroke-width="0.9"/><path d="M926.9 349.45L939.4 349.45" stroke="#dedede" stroke-width="0.9"/><text x="632.1" y="376.7" transform="rotate(.03 632.1 376.7)" font-size="6.4" fill="#505050">34</text><text x="932.3" y="376.7" transform="rotate(.03 932.3 376.7)" font-size="6.4" fill="#505050">34</text><path d="M631.3 369.6L644.3 369.6" stroke="#b4b4b4" stroke-width="0.7"/><path d="M926.9 369.6L939.4 369.6" stroke="#b4b4b4" stroke-width="0.7"/><path d="M631.3 370.4L644.3 370.4" stroke="#dedede" stroke-width="0.9"/><path d="M926.9 370.4L939.4 370.4" stroke="#dedede" stroke-width="0.9"/><text x="632.1" y="397.65" transform="rotate(.03 632.1 397.65)" font-size="6.4" fill="#505050">33</text><text x="932.3" y="397.65" transform="rotate(.03 932.3 397.65)" font-size="6.4" fill="#505050">33</text><path d="M631.3 390.55L644.3 390.55" stroke="#b4b4b4" stroke-width="0.7"/><path d="M926.9 390.55L939.4 390.55" stroke="#b4b4b4" stroke-width="0.7"/><path d="M631.3 391.35L644.3 391.35" stroke="#dedede" stroke-width="0.9"/><path d="M926.9 391.35L939.4 391.35" stroke="#dedede" stroke-width="0.9"/><text x="632.1" y="418.6" transform="rotate(.03 632.1 418.6)" font-size="6.4" fill="#505050">32</text><text x="932.3" y="418.6" transform="rotate(.03 932.3 418.6)" font-size="6.4" fill="#505050">32</text><path d="M631.3 411.5L644.3 411.5" stroke="#b4b4b4" stroke-width="0.7"/><path d="M926.9 411.5L939.4 411.5" stroke="#b4b4b4" stroke-width="0.7"/><path d="M631.3 412.3L644.3 412.3" stroke="#dedede" stroke-width="0.9"/><path d="M926.9 412.3L939.4 412.3" stroke="#dedede" stroke-width="0.9"/><text x="632.1" y="439.55" transform="rotate(.03 632.1 439.55)" font-size="6.4" fill="#505050">31</text><text x="932.3" y="439.55" transform="rotate(.03 932.3 439.55)" font-size="6.4" fill="#505050">31</text><path d="M631.3 432.45L644.3 432.45" stroke="#b4b4b4" stroke-width="0.7"/><path d="M926.9 432.45L939.4 432.45" stroke="#b4b4b4" stroke-width="0.7"/><path d="M631.3 433.25L644.3 433.25" stroke="#dedede" stroke-width="0.9"/><path d="M926.9 433.25L939.4 433.25" stroke="#dedede" stroke-width="0.9"/><text x="632.1" y="460.5" transform="rotate(.03 632.1 460.5)" font-size="6.4" fill="#505050">30</text><text x="932.3" y="460.5" transform="rotate(.03 932.3 460.5)" font-size="6.4" fill="#505050">30</text><path d="M631.3 453.4L644.3 453.4" stroke="#b4b4b4" stroke-width="0.7"/><path d="M926.9 453.4L939.4 453.4" stroke="#b4b4b4" stroke-width="0.7"/><path d="M631.3 454.2L644.3 454.2" stroke="#dedede" stroke-width="0.9"/><path d="M926.9 454.2L939.4 454.2" stroke="#dedede" stroke-width="0.9"/><text x="632.1" y="481.45" transform="rotate(.03 632.1 481.45)" font-size="6.4" fill="#505050">29</text><text x="932.3" y="481.45" transform="rotate(.03 932.3 481.45)" font-size="6.4" fill="#505050">29</text><path d="M631.3 474.35L644.3 474.35" stroke="#b4b4b4" stroke-width="0.7"/><path d="M926.9 474.35L939.4 474.35" stroke="#b4b4b4" stroke-width="0.7"/><path d="M631.3 475.15L644.3 475.15" stroke="#dedede" stroke-width="0.9"/><path d="M926.9 475.15L939.4 475.15" stroke="#dedede" stroke-width="0.9"/><text x="632.1" y="502.4" transform="rotate(.03 632.1 502.4)" font-size="6.4" fill="#505050">28</text><text x="932.3" y="502.4" transform="rotate(.03 932.3 502.4)" font-size="6.4" fill="#505050">28</text><path d="M631.3 495.3L644.3 495.3" stroke="#b4b4b4" stroke-width="0.7"/><path d="M926.9 495.3L939.4 495.3" stroke="#b4b4b4" stroke-width="0.7"/><path d="M631.3 496.1L644.3 496.1" stroke="#dedede" stroke-width="0.9"/><path d="M926.9 496.1L939.4 496.1" stroke="#dedede" stroke-width="0.9"/><text x="632.1" y="523.35" transform="rotate(.03 632.1 523.35)" font-size="6.4" fill="#505050">27</text><text x="932.3" y="523.35" transform="rotate(.03 932.3 523.35)" font-size="6.4" fill="#505050">27</text><path d="M631.3 516.25L644.3 516.25" stroke="#b4b4b4" stroke-width="0.7"/><path d="M926.9 516.25L939.4 516.25" stroke="#b4b4b4" stroke-width="0.7"/><path d="M631.3 517.05L644.3 517.05" stroke="#dedede" stroke-width="0.9"/><path d="M926.9 517.05L939.4 517.05" stroke="#dedede" stroke-width="0.9"/><text x="632.1" y="544.3" transform="rotate(.03 632.1 544.3)" font-size="6.4" fill="#505050">26</text><text x="932.3" y="544.3" transform="rotate(.03 932.3 544.3)" font-size="6.4" fill="#505050">26</text><path d="M631.3 537.2L644.3 537.2" stroke="#b4b4b4" stroke-width="0.7"/><path d="M926.9 537.2L939.4 537.2" stroke="#b4b4b4" stroke-width="0.7"/><path d="M631.3 538L644.3 538" stroke="#dedede" stroke-width="0.9"/><path d="M926.9 538L939.4 538" stroke="#dedede" stroke-width="0.9"/><text x="632.1" y="565.25" transform="rotate(.03 632.1 565.25)" font-size="6.4" fill="#505050">25</text><text x="932.3" y="565.25" transform="rotate(.03 932.3 565.25)" font-size="6.4" fill="#505050">25</text><path d="M631.3 558.15L644.3 558.15" stroke="#b4b4b4" stroke-width="0.7"/><path d="M926.9 558.15L939.4 558.15" stroke="#b4b4b4" stroke-width="0.7"/><path d="M631.3 558.95L644.3 558.95" stroke="#dedede" stroke-width="0.9"/><path d="M926.9 558.95L939.4 558.95" stroke="#dedede" stroke-width="0.9"/><text x="632.1" y="586.2" transform="rotate(.03 632.1 586.2)" font-size="6.4" fill="#505050">24</text><text x="932.3" y="586.2" transform="rotate(.03 932.3 586.2)" font-size="6.4" fill="#505050">24</text><path d="M631.3 579.1L644.3 579.1" stroke="#b4b4b4" stroke-width="0.7"/><path d="M926.9 579.1L939.4 579.1" stroke="#b4b4b4" stroke-width="0.7"/><path d="M631.3 579.9L644.3 579.9" stroke="#dedede" stroke-width="0.9"/><path d="M926.9 579.9L939.4 579.9" stroke="#dedede" stroke-width="0.9"/><text x="632.1" y="607.15" transform="rotate(.03 632.1 607.15)" font-size="6.4" fill="#505050">23</text><text x="932.3" y="607.15" transform="rotate(.03 932.3 607.15)" font-size="6.4" fill="#505050">23</text><path d="M631.3 600.05L644.3 600.05" stroke="#b4b4b4" stroke-width="0.7"/><path d="M926.9 600.05L939.4 600.05" stroke="#b4b4b4" stroke-width="0.7"/><path d="M631.3 600.85L644.3 600.85" stroke="#dedede" stroke-width="0.9"/><path d="M926.9 600.85L939.4 600.85" stroke="#dedede" stroke-width="0.9"/><text x="632.1" y="628.1" transform="rotate(.03 632.1 628.1)" font-size="6.4" fill="#505050">22</text><text x="932.3" y="628.1" transform="rotate(.03 932.3 628.1)" font-size="6.4" fill="#505050">22</text><path d="M631.3 621L644.3 621" stroke="#b4b4b4" stroke-width="0.7"/><path d="M926.9 621L939.4 621" stroke="#b4b4b4" stroke-width="0.7"/><path d="M631.3 621.8L644.3 621.8" stroke="#dedede" stroke-width="0.9"/><path d="M926.9 621.8L939.4 621.8" stroke="#dedede" stroke-width="0.9"/><text x="632.1" y="649.05" transform="rotate(.03 632.1 649.05)" font-size="6.4" fill="#505050">21</text><text x="932.3" y="649.05" transform="rotate(.03 932.3 649.05)" font-size="6.4" fill="#505050">21</text><path d="M631.3 641.95L644.3 641.95" stroke="#b4b4b4" stroke-width="0.7"/><path d="M926.9 641.95L939.4 641.95" stroke="#b4b4b4" stroke-width="0.7"/><path d="M631.3 642.75L644.3 642.75" stroke="#dedede" stroke-width="0.9"/><path d="M926.9 642.75L939.4 642.75" stroke="#dedede" stroke-width="0.9"/><text x="632.1" y="670" transform="rotate(.03 632.1 670)" font-size="6.4" fill="#505050">20</text><text x="932.3" y="670" transform="rotate(.03 932.3 670)" font-size="6.4" fill="#505050">20</text><path d="M631.3 662.9L644.3 662.9" stroke="#b4b4b4" stroke-width="0.7"/><path d="M926.9 662.9L939.4 662.9" stroke="#b4b4b4" stroke-width="0.7"/><path d="M631.3 663.7L644.3 663.7" stroke="#dedede" stroke-width="0.9"/><path d="M926.9 663.7L939.4 663.7" stroke="#dedede" stroke-width="0.9"/><text x="632.1" y="690.95" transform="rotate(.03 632.1 690.95)" font-size="6.4" fill="#505050">19</text><text x="932.3" y="690.95" transform="rotate(.03 932.3 690.95)" font-size="6.4" fill="#505050">19</text><path d="M631.3 683.85L644.3 683.85" stroke="#b4b4b4" stroke-width="0.7"/><path d="M926.9 683.85L939.4 683.85" stroke="#b4b4b4" stroke-width="0.7"/><path d="M631.3 684.65L644.3 684.65" stroke="#dedede" stroke-width="0.9"/><path d="M926.9 684.65L939.4 684.65" stroke="#dedede" stroke-width="0.9"/><text x="632.1" y="711.9" transform="rotate(.03 632.1 711.9)" font-size="6.4" fill="#505050">18</text><text x="932.3" y="711.9" transform="rotate(.03 932.3 711.9)" font-size="6.4" fill="#505050">18</text><path d="M631.3 704.8L644.3 704.8" stroke="#b4b4b4" stroke-width="0.7"/><path d="M926.9 704.8L939.4 704.8" stroke="#b4b4b4" stroke-width="0.7"/><path d="M631.3 705.6L644.3 705.6" stroke="#dedede" stroke-width="0.9"/><path d="M926.9 705.6L939.4 705.6" stroke="#dedede" stroke-width="0.9"/><rect x="644.3" y="203.2" width="282.6" height="125.2" fill="#c0c0c0"/><text x="648.1" y="209.5" transform="rotate(.03 648.1 209.5)" font-size="6.2" fill="#000" font-weight="700" font-family='DejaVu Sans, sans-serif' textLength="49.2" lengthAdjust="spacingAndGlyphs">NetApp FAS960</text><path d="M648.4 212.9h54.4M648.4 218.13h54.4M648.4 223.36h54.4M648.4 228.59h54.4M648.4 233.82h54.4M648.4 239.05h54.4M648.4 244.28h54.4" stroke="#878787" stroke-width="3.8" stroke-dasharray="5.4 1.46" fill="none"/><path d="M648.4 249.5h5.4M648.4 254.73h5.4M648.4 259.96h5.4M648.4 265.19h5.4" stroke="#878787" stroke-width="3.8" stroke-dasharray="5.4 1.46" fill="none"/><path d="M705.2 207.05h164M705.2 211.75h164" stroke="#878787" stroke-width="3.9" stroke-dasharray="5.2 1.66" fill="none"/><path d="M869.6 206.9h54.4M869.6 212.13h54.4M869.6 217.36h54.4M869.6 222.59h54.4M869.6 227.82h54.4M869.6 233.05h54.4M869.6 238.28h54.4M869.6 243.51h54.4M869.6 248.74h54.4M869.6 253.97h54.4M869.6 259.2h54.4M869.6 264.43h54.4M869.6 269.66h54.4" stroke="#878787" stroke-width="3.8" stroke-dasharray="5.4 1.46" fill="none"/><text x="664.8" y="250" transform="rotate(.03 664.8 250)" font-size="3.8" fill="#000" font-weight="700" text-anchor="middle">Console</text><path d="M658 251.4H671.6L669.6 257.4H660Z" fill="#2c2c2c"/><path d="M660.2 253.4L669.4 253.4" stroke="#aaa" stroke-width="0.8" stroke-dasharray=".9 .8"/><path d="M661.2 255.4L668.4 255.4" stroke="#aaa" stroke-width="0.8" stroke-dasharray=".9 .8"/><path d="M655.6 253.2L656.8 254.8" stroke="#111" stroke-width="0.7"/><path d="M672.8 253.2L674 254.8" stroke="#111" stroke-width="0.7"/><rect x="679.8" y="262.4" width="9.6" height="9.2" fill="#fff"/><path d="M681.14 263.87H688.06V267.74Q688.06 270.31 684.6 270.31Q681.14 270.31 681.14 267.74Z" fill="#000"/><text x="690.4" y="266.8" transform="rotate(.03 690.4 266.8)" font-size="3.4" fill="#111" font-weight="700">10/100</text><text x="690.4" y="270.8" transform="rotate(.03 690.4 270.8)" font-size="3.6" fill="#111" font-weight="700">BaseT</text><text x="649.6" y="280.8" transform="rotate(.03 649.6 280.8)" font-size="4.2" fill="#8c8c8c">FAS960-1000</text><rect x="716.9" y="215.3" width="12.52" height="63.4" fill="#cacaca"/><rect x="729.42" y="215.3" width="12.52" height="63.4" fill="#cacaca"/><rect x="741.94" y="215.3" width="12.52" height="63.4" fill="#cacaca"/><rect x="754.46" y="215.3" width="12.52" height="63.4" fill="#cacaca"/><rect x="766.98" y="215.3" width="12.52" height="63.4" fill="#cacaca"/><rect x="779.5" y="215.3" width="12.52" height="63.4" fill="#cacaca"/><rect x="792.02" y="215.3" width="12.52" height="63.4" fill="#cacaca"/><rect x="804.54" y="215.3" width="12.52" height="63.4" fill="#cacaca"/><rect x="817.06" y="215.3" width="12.52" height="63.4" fill="#cacaca"/><rect x="829.58" y="215.3" width="12.52" height="63.4" fill="#cacaca"/><rect x="842.1" y="215.3" width="12.52" height="63.4" fill="#cacaca"/><path d="M716.9 215.3L716.9 278.7" stroke="#111" stroke-width="1.2"/><path d="M729.42 215.3L729.42 278.7" stroke="#111" stroke-width="1.2"/><path d="M741.94 215.3L741.94 278.7" stroke="#111" stroke-width="1.2"/><path d="M754.46 215.3L754.46 278.7" stroke="#111" stroke-width="1.2"/><path d="M766.98 215.3L766.98 278.7" stroke="#111" stroke-width="1.2"/><path d="M779.5 215.3L779.5 278.7" stroke="#111" stroke-width="1.2"/><path d="M792.02 215.3L792.02 278.7" stroke="#111" stroke-width="1.2"/><path d="M804.54 215.3L804.54 278.7" stroke="#111" stroke-width="1.2"/><path d="M817.06 215.3L817.06 278.7" stroke="#111" stroke-width="1.2"/><path d="M829.58 215.3L829.58 278.7" stroke="#111" stroke-width="1.2"/><path d="M842.1 215.3L842.1 278.7" stroke="#111" stroke-width="1.2"/><path d="M854.62 215.3L854.62 278.7" stroke="#111" stroke-width="1.2"/><path d="M716.9 215.3L854.62 215.3" stroke="#555" stroke-width="0.7"/><path d="M716.9 278.7L854.62 278.7" stroke="#222" stroke-width="1"/><text x="723.2" y="239.2" transform="rotate(.03 723.2 239.2)" font-size="3.8" fill="#000" text-anchor="middle">Tx</text><rect x="719.8" y="240.2" width="6.8" height="13.6" fill="#4c4c4c"/><rect x="720.9" y="241.5" width="4.6" height="4.6" fill="#32bc38"/><rect x="722.1" y="242.7" width="2.2" height="2.2" fill="#c4ffc4"/><rect x="720.9" y="247.8" width="4.6" height="4.6" fill="#32bc38"/><rect x="722.1" y="249" width="2.2" height="2.2" fill="#c4ffc4"/><text x="723.2" y="257.4" transform="rotate(.03 723.2 257.4)" font-size="3.8" fill="#000" text-anchor="middle" font-style="italic">Rx</text><text x="723.2" y="283.6" transform="rotate(.03 723.2 283.6)" font-size="4.9" fill="#000" font-weight="700" text-anchor="middle">1</text><text x="735.72" y="239.2" transform="rotate(.03 735.72 239.2)" font-size="3.8" fill="#000" text-anchor="middle">Tx</text><rect x="732.32" y="240.2" width="6.8" height="13.6" fill="#4c4c4c"/><rect x="733.42" y="241.5" width="4.6" height="4.6" fill="#32bc38"/><rect x="734.62" y="242.7" width="2.2" height="2.2" fill="#c4ffc4"/><rect x="733.42" y="247.8" width="4.6" height="4.6" fill="#32bc38"/><rect x="734.62" y="249" width="2.2" height="2.2" fill="#c4ffc4"/><text x="735.72" y="257.4" transform="rotate(.03 735.72 257.4)" font-size="3.8" fill="#000" text-anchor="middle" font-style="italic">Rx</text><text x="735.72" y="283.6" transform="rotate(.03 735.72 283.6)" font-size="4.9" fill="#000" font-weight="700" text-anchor="middle">2</text><text x="748.24" y="228.8" transform="rotate(.03 748.24 228.8)" font-size="3.8" fill="#000" text-anchor="middle">Tx</text><rect x="744.84" y="229.6" width="6.8" height="13.6" fill="#4c4c4c"/><rect x="745.94" y="230.9" width="4.6" height="4.6" fill="#32bc38"/><rect x="747.14" y="232.1" width="2.2" height="2.2" fill="#c4ffc4"/><rect x="745.94" y="237.2" width="4.6" height="4.6" fill="#32bc38"/><rect x="747.14" y="238.4" width="2.2" height="2.2" fill="#c4ffc4"/><text x="748.24" y="246.6" transform="rotate(.03 748.24 246.6)" font-size="3.6" fill="#000" text-anchor="middle" font-style="italic">Rx</text><text x="748.24" y="250.6" transform="rotate(.03 748.24 250.6)" font-size="3.8" fill="#000" text-anchor="middle">Tx</text><rect x="744.84" y="251.5" width="6.8" height="13.6" fill="#4c4c4c"/><rect x="745.94" y="252.8" width="4.6" height="4.6" fill="#32bc38"/><rect x="747.14" y="254" width="2.2" height="2.2" fill="#c4ffc4"/><rect x="745.94" y="259.1" width="4.6" height="4.6" fill="#32bc38"/><rect x="747.14" y="260.3" width="2.2" height="2.2" fill="#c4ffc4"/><text x="748.24" y="268.6" transform="rotate(.03 748.24 268.6)" font-size="3.6" fill="#000" text-anchor="middle" font-style="italic">Rx</text><text x="744.04" y="237.6" transform="rotate(.03 744.04 237.6)" font-size="2.8" fill="#222" text-anchor="middle">1</text><text x="744.04" y="259.6" transform="rotate(.03 744.04 259.6)" font-size="2.8" fill="#222" text-anchor="middle">2</text><text x="748.24" y="283.6" transform="rotate(.03 748.24 283.6)" font-size="4.9" fill="#000" font-weight="700" text-anchor="middle">3</text><text x="760.76" y="228.8" transform="rotate(.03 760.76 228.8)" font-size="3.8" fill="#000" text-anchor="middle">Tx</text><rect x="757.36" y="229.6" width="6.8" height="13.6" fill="#4c4c4c"/><rect x="758.46" y="230.9" width="4.6" height="4.6" fill="#32bc38"/><rect x="759.66" y="232.1" width="2.2" height="2.2" fill="#c4ffc4"/><rect x="758.46" y="237.2" width="4.6" height="4.6" fill="#32bc38"/><rect x="759.66" y="238.4" width="2.2" height="2.2" fill="#c4ffc4"/><text x="760.76" y="246.6" transform="rotate(.03 760.76 246.6)" font-size="3.6" fill="#000" text-anchor="middle" font-style="italic">Rx</text><text x="760.76" y="250.6" transform="rotate(.03 760.76 250.6)" font-size="3.8" fill="#000" text-anchor="middle">Tx</text><rect x="757.36" y="251.5" width="6.8" height="13.6" fill="#4c4c4c"/><rect x="758.46" y="252.8" width="4.6" height="4.6" fill="#32bc38"/><rect x="759.66" y="254" width="2.2" height="2.2" fill="#c4ffc4"/><rect x="758.46" y="259.1" width="4.6" height="4.6" fill="#32bc38"/><rect x="759.66" y="260.3" width="2.2" height="2.2" fill="#c4ffc4"/><text x="760.76" y="268.6" transform="rotate(.03 760.76 268.6)" font-size="3.6" fill="#000" text-anchor="middle" font-style="italic">Rx</text><text x="756.56" y="237.6" transform="rotate(.03 756.56 237.6)" font-size="2.8" fill="#222" text-anchor="middle">1</text><text x="756.56" y="259.6" transform="rotate(.03 756.56 259.6)" font-size="2.8" fill="#222" text-anchor="middle">2</text><text x="760.76" y="283.6" transform="rotate(.03 760.76 283.6)" font-size="4.9" fill="#000" font-weight="700" text-anchor="middle">4</text><text x="773.28" y="228.8" transform="rotate(.03 773.28 228.8)" font-size="3.8" fill="#000" text-anchor="middle">Tx</text><rect x="769.88" y="229.6" width="6.8" height="13.6" fill="#4c4c4c"/><rect x="770.98" y="230.9" width="4.6" height="4.6" fill="#32bc38"/><rect x="772.18" y="232.1" width="2.2" height="2.2" fill="#c4ffc4"/><rect x="770.98" y="237.2" width="4.6" height="4.6" fill="#32bc38"/><rect x="772.18" y="238.4" width="2.2" height="2.2" fill="#c4ffc4"/><text x="773.28" y="246.6" transform="rotate(.03 773.28 246.6)" font-size="3.6" fill="#000" text-anchor="middle" font-style="italic">Rx</text><text x="773.28" y="250.6" transform="rotate(.03 773.28 250.6)" font-size="3.8" fill="#000" text-anchor="middle">Tx</text><rect x="769.88" y="251.5" width="6.8" height="13.6" fill="#4c4c4c"/><rect x="770.98" y="252.8" width="4.6" height="4.6" fill="#32bc38"/><rect x="772.18" y="254" width="2.2" height="2.2" fill="#c4ffc4"/><rect x="770.98" y="259.1" width="4.6" height="4.6" fill="#32bc38"/><rect x="772.18" y="260.3" width="2.2" height="2.2" fill="#c4ffc4"/><text x="773.28" y="268.6" transform="rotate(.03 773.28 268.6)" font-size="3.6" fill="#000" text-anchor="middle" font-style="italic">Rx</text><text x="769.08" y="237.6" transform="rotate(.03 769.08 237.6)" font-size="2.8" fill="#222" text-anchor="middle">1</text><text x="769.08" y="259.6" transform="rotate(.03 769.08 259.6)" font-size="2.8" fill="#222" text-anchor="middle">2</text><text x="773.28" y="283.6" transform="rotate(.03 773.28 283.6)" font-size="4.9" fill="#000" font-weight="700" text-anchor="middle">5</text><text x="785.8" y="228.8" transform="rotate(.03 785.8 228.8)" font-size="3.8" fill="#000" text-anchor="middle">Tx</text><rect x="782.4" y="229.6" width="6.8" height="13.6" fill="#4c4c4c"/><rect x="783.5" y="230.9" width="4.6" height="4.6" fill="#32bc38"/><rect x="784.7" y="232.1" width="2.2" height="2.2" fill="#c4ffc4"/><rect x="783.5" y="237.2" width="4.6" height="4.6" fill="#32bc38"/><rect x="784.7" y="238.4" width="2.2" height="2.2" fill="#c4ffc4"/><text x="785.8" y="246.6" transform="rotate(.03 785.8 246.6)" font-size="3.6" fill="#000" text-anchor="middle" font-style="italic">Rx</text><text x="785.8" y="250.6" transform="rotate(.03 785.8 250.6)" font-size="3.8" fill="#000" text-anchor="middle">Tx</text><rect x="782.4" y="251.5" width="6.8" height="13.6" fill="#4c4c4c"/><rect x="783.5" y="252.8" width="4.6" height="4.6" fill="#32bc38"/><rect x="784.7" y="254" width="2.2" height="2.2" fill="#c4ffc4"/><rect x="783.5" y="259.1" width="4.6" height="4.6" fill="#32bc38"/><rect x="784.7" y="260.3" width="2.2" height="2.2" fill="#c4ffc4"/><text x="785.8" y="268.6" transform="rotate(.03 785.8 268.6)" font-size="3.6" fill="#000" text-anchor="middle" font-style="italic">Rx</text><text x="781.6" y="237.6" transform="rotate(.03 781.6 237.6)" font-size="2.8" fill="#222" text-anchor="middle">1</text><text x="781.6" y="259.6" transform="rotate(.03 781.6 259.6)" font-size="2.8" fill="#222" text-anchor="middle">2</text><text x="785.8" y="283.6" transform="rotate(.03 785.8 283.6)" font-size="4.9" fill="#000" font-weight="700" text-anchor="middle">6</text><text x="798.32" y="228.8" transform="rotate(.03 798.32 228.8)" font-size="3.8" fill="#000" text-anchor="middle">Tx</text><rect x="794.92" y="229.6" width="6.8" height="13.6" fill="#4c4c4c"/><rect x="796.02" y="230.9" width="4.6" height="4.6" fill="#32bc38"/><rect x="797.22" y="232.1" width="2.2" height="2.2" fill="#c4ffc4"/><rect x="796.02" y="237.2" width="4.6" height="4.6" fill="#32bc38"/><rect x="797.22" y="238.4" width="2.2" height="2.2" fill="#c4ffc4"/><text x="798.32" y="246.6" transform="rotate(.03 798.32 246.6)" font-size="3.6" fill="#000" text-anchor="middle" font-style="italic">Rx</text><text x="798.32" y="250.6" transform="rotate(.03 798.32 250.6)" font-size="3.8" fill="#000" text-anchor="middle">Tx</text><rect x="794.92" y="251.5" width="6.8" height="13.6" fill="#4c4c4c"/><rect x="796.02" y="252.8" width="4.6" height="4.6" fill="#32bc38"/><rect x="797.22" y="254" width="2.2" height="2.2" fill="#c4ffc4"/><rect x="796.02" y="259.1" width="4.6" height="4.6" fill="#32bc38"/><rect x="797.22" y="260.3" width="2.2" height="2.2" fill="#c4ffc4"/><text x="798.32" y="268.6" transform="rotate(.03 798.32 268.6)" font-size="3.6" fill="#000" text-anchor="middle" font-style="italic">Rx</text><text x="794.12" y="237.6" transform="rotate(.03 794.12 237.6)" font-size="2.8" fill="#222" text-anchor="middle">1</text><text x="794.12" y="259.6" transform="rotate(.03 794.12 259.6)" font-size="2.8" fill="#222" text-anchor="middle">2</text><text x="798.32" y="283.6" transform="rotate(.03 798.32 283.6)" font-size="4.9" fill="#000" font-weight="700" text-anchor="middle">7</text><text x="810.84" y="228.8" transform="rotate(.03 810.84 228.8)" font-size="3.8" fill="#000" text-anchor="middle">Tx</text><rect x="807.44" y="229.6" width="6.8" height="13.6" fill="#4c4c4c"/><rect x="808.54" y="230.9" width="4.6" height="4.6" fill="#32bc38"/><rect x="809.74" y="232.1" width="2.2" height="2.2" fill="#c4ffc4"/><rect x="808.54" y="237.2" width="4.6" height="4.6" fill="#32bc38"/><rect x="809.74" y="238.4" width="2.2" height="2.2" fill="#c4ffc4"/><text x="810.84" y="246.6" transform="rotate(.03 810.84 246.6)" font-size="3.6" fill="#000" text-anchor="middle" font-style="italic">Rx</text><text x="810.84" y="250.6" transform="rotate(.03 810.84 250.6)" font-size="3.8" fill="#000" text-anchor="middle">Tx</text><rect x="807.44" y="251.5" width="6.8" height="13.6" fill="#4c4c4c"/><rect x="808.54" y="252.8" width="4.6" height="4.6" fill="#32bc38"/><rect x="809.74" y="254" width="2.2" height="2.2" fill="#c4ffc4"/><rect x="808.54" y="259.1" width="4.6" height="4.6" fill="#32bc38"/><rect x="809.74" y="260.3" width="2.2" height="2.2" fill="#c4ffc4"/><text x="810.84" y="268.6" transform="rotate(.03 810.84 268.6)" font-size="3.6" fill="#000" text-anchor="middle" font-style="italic">Rx</text><text x="806.64" y="237.6" transform="rotate(.03 806.64 237.6)" font-size="2.8" fill="#222" text-anchor="middle">1</text><text x="806.64" y="259.6" transform="rotate(.03 806.64 259.6)" font-size="2.8" fill="#222" text-anchor="middle">2</text><text x="810.84" y="283.6" transform="rotate(.03 810.84 283.6)" font-size="4.9" fill="#000" font-weight="700" text-anchor="middle">8</text><text x="823.36" y="228.8" transform="rotate(.03 823.36 228.8)" font-size="3.8" fill="#000" text-anchor="middle">Tx</text><rect x="819.96" y="229.6" width="6.8" height="13.6" fill="#4c4c4c"/><rect x="821.06" y="230.9" width="4.6" height="4.6" fill="#32bc38"/><rect x="822.26" y="232.1" width="2.2" height="2.2" fill="#c4ffc4"/><rect x="821.06" y="237.2" width="4.6" height="4.6" fill="#32bc38"/><rect x="822.26" y="238.4" width="2.2" height="2.2" fill="#c4ffc4"/><text x="823.36" y="246.6" transform="rotate(.03 823.36 246.6)" font-size="3.6" fill="#000" text-anchor="middle" font-style="italic">Rx</text><text x="823.36" y="250.6" transform="rotate(.03 823.36 250.6)" font-size="3.8" fill="#000" text-anchor="middle">Tx</text><rect x="819.96" y="251.5" width="6.8" height="13.6" fill="#4c4c4c"/><rect x="821.06" y="252.8" width="4.6" height="4.6" fill="#32bc38"/><rect x="822.26" y="254" width="2.2" height="2.2" fill="#c4ffc4"/><rect x="821.06" y="259.1" width="4.6" height="4.6" fill="#32bc38"/><rect x="822.26" y="260.3" width="2.2" height="2.2" fill="#c4ffc4"/><text x="823.36" y="268.6" transform="rotate(.03 823.36 268.6)" font-size="3.6" fill="#000" text-anchor="middle" font-style="italic">Rx</text><text x="819.16" y="237.6" transform="rotate(.03 819.16 237.6)" font-size="2.8" fill="#222" text-anchor="middle">1</text><text x="819.16" y="259.6" transform="rotate(.03 819.16 259.6)" font-size="2.8" fill="#222" text-anchor="middle">2</text><text x="823.36" y="283.6" transform="rotate(.03 823.36 283.6)" font-size="4.9" fill="#000" font-weight="700" text-anchor="middle">9</text><text x="835.88" y="239.2" transform="rotate(.03 835.88 239.2)" font-size="3.8" fill="#000" text-anchor="middle">Tx</text><rect x="832.48" y="240.2" width="6.8" height="13.6" fill="#4c4c4c"/><rect x="833.58" y="241.5" width="4.6" height="4.6" fill="#32bc38"/><rect x="834.78" y="242.7" width="2.2" height="2.2" fill="#c4ffc4"/><rect x="833.58" y="247.8" width="4.6" height="4.6" fill="#32bc38"/><rect x="834.78" y="249" width="2.2" height="2.2" fill="#c4ffc4"/><text x="835.88" y="257.4" transform="rotate(.03 835.88 257.4)" font-size="3.8" fill="#000" text-anchor="middle" font-style="italic">Rx</text><text x="835.88" y="283.6" transform="rotate(.03 835.88 283.6)" font-size="4.9" fill="#000" font-weight="700" text-anchor="middle">10</text><text x="848.4" y="239.2" transform="rotate(.03 848.4 239.2)" font-size="3.8" fill="#000" text-anchor="middle">Tx</text><rect x="845" y="240.2" width="6.8" height="13.6" fill="#4c4c4c"/><rect x="846.1" y="241.5" width="4.6" height="4.6" fill="#32bc38"/><rect x="847.3" y="242.7" width="2.2" height="2.2" fill="#c4ffc4"/><rect x="846.1" y="247.8" width="4.6" height="4.6" fill="#32bc38"/><rect x="847.3" y="249" width="2.2" height="2.2" fill="#c4ffc4"/><text x="848.4" y="257.4" transform="rotate(.03 848.4 257.4)" font-size="3.8" fill="#000" text-anchor="middle" font-style="italic">Rx</text><text x="848.4" y="283.6" transform="rotate(.03 848.4 283.6)" font-size="4.9" fill="#000" font-weight="700" text-anchor="middle">11</text><rect x="669.2" y="289.8" width="101.5" height="32.2" fill="#767676" stroke="#5e5e5e" stroke-width="0.8"/><circle cx="684.1" cy="294.4" r="0.9" fill="#111"/><circle cx="684.1" cy="317.2" r="0.9" fill="#111"/><circle cx="707.3" cy="294.4" r="0.9" fill="#111"/><circle cx="707.3" cy="317.2" r="0.9" fill="#111"/><circle cx="695.7" cy="305.8" r="14" fill="#0c0c0c"/><circle cx="695.7" cy="305.8" r="11.4" fill="none" stroke="#7a7a7a" stroke-width="0.9"/><circle cx="695.7" cy="305.8" r="8.6" fill="none" stroke="#7a7a7a" stroke-width="0.9"/><circle cx="695.7" cy="305.8" r="5.8" fill="none" stroke="#7a7a7a" stroke-width="0.9"/><path d="M685.62 295.72L705.78 315.88" stroke="#8a8a8a" stroke-width="0.6"/><path d="M685.62 315.88L705.78 295.72" stroke="#8a8a8a" stroke-width="0.6"/><circle cx="695.7" cy="305.8" r="3" fill="#1a1a1a" stroke="#7a7a7a" stroke-width="0.8"/><circle cx="733.1" cy="294.4" r="0.9" fill="#111"/><circle cx="733.1" cy="317.2" r="0.9" fill="#111"/><circle cx="756.3" cy="294.4" r="0.9" fill="#111"/><circle cx="756.3" cy="317.2" r="0.9" fill="#111"/><circle cx="744.7" cy="305.8" r="14" fill="#0c0c0c"/><circle cx="744.7" cy="305.8" r="11.4" fill="none" stroke="#7a7a7a" stroke-width="0.9"/><circle cx="744.7" cy="305.8" r="8.6" fill="none" stroke="#7a7a7a" stroke-width="0.9"/><circle cx="744.7" cy="305.8" r="5.8" fill="none" stroke="#7a7a7a" stroke-width="0.9"/><path d="M734.62 295.72L754.78 315.88" stroke="#8a8a8a" stroke-width="0.6"/><path d="M734.62 315.88L754.78 295.72" stroke="#8a8a8a" stroke-width="0.6"/><circle cx="744.7" cy="305.8" r="3" fill="#1a1a1a" stroke="#7a7a7a" stroke-width="0.8"/><rect x="678.5" y="315.8" width="82.6" height="2.4" fill="#9c9c9c" stroke="#3c3c3c" stroke-width="0.6" rx="1.2"/><rect x="712.1" y="299.7" width="6.2" height="13" fill="#585858" stroke="#6a6a6a" stroke-width="0.5"/><rect x="713.1" y="300.6" width="4.2" height="5" fill="#4a4a4a"/><rect x="714.2" y="308.6" width="2" height="2" fill="#e8e8e8"/><rect x="720.6" y="302.3" width="7.7" height="10.4" fill="#4e4e4e" stroke="#8a8a8a" stroke-width="0.6" rx="1"/><path d="M723.2 305.4v3M725.8 305.4v3M724.5 307.4v3" fill="none" stroke="#aaa" stroke-width="0.7"/><rect x="670" y="305.2" width="4.4" height="2.6" fill="#8a8a8a" stroke="#444" stroke-width="0.6" rx="1.3"/><rect x="765.5" y="305.2" width="4.4" height="2.6" fill="#8a8a8a" stroke="#444" stroke-width="0.6" rx="1.3"/><rect x="804.4" y="289.8" width="101.5" height="32.2" fill="#767676" stroke="#5e5e5e" stroke-width="0.8"/><circle cx="819.3" cy="294.4" r="0.9" fill="#111"/><circle cx="819.3" cy="317.2" r="0.9" fill="#111"/><circle cx="842.5" cy="294.4" r="0.9" fill="#111"/><circle cx="842.5" cy="317.2" r="0.9" fill="#111"/><circle cx="830.9" cy="305.8" r="14" fill="#0c0c0c"/><circle cx="830.9" cy="305.8" r="11.4" fill="none" stroke="#7a7a7a" stroke-width="0.9"/><circle cx="830.9" cy="305.8" r="8.6" fill="none" stroke="#7a7a7a" stroke-width="0.9"/><circle cx="830.9" cy="305.8" r="5.8" fill="none" stroke="#7a7a7a" stroke-width="0.9"/><path d="M820.82 295.72L840.98 315.88" stroke="#8a8a8a" stroke-width="0.6"/><path d="M820.82 315.88L840.98 295.72" stroke="#8a8a8a" stroke-width="0.6"/><circle cx="830.9" cy="305.8" r="3" fill="#1a1a1a" stroke="#7a7a7a" stroke-width="0.8"/><circle cx="868.3" cy="294.4" r="0.9" fill="#111"/><circle cx="868.3" cy="317.2" r="0.9" fill="#111"/><circle cx="891.5" cy="294.4" r="0.9" fill="#111"/><circle cx="891.5" cy="317.2" r="0.9" fill="#111"/><circle cx="879.9" cy="305.8" r="14" fill="#0c0c0c"/><circle cx="879.9" cy="305.8" r="11.4" fill="none" stroke="#7a7a7a" stroke-width="0.9"/><circle cx="879.9" cy="305.8" r="8.6" fill="none" stroke="#7a7a7a" stroke-width="0.9"/><circle cx="879.9" cy="305.8" r="5.8" fill="none" stroke="#7a7a7a" stroke-width="0.9"/><path d="M869.82 295.72L889.98 315.88" stroke="#8a8a8a" stroke-width="0.6"/><path d="M869.82 315.88L889.98 295.72" stroke="#8a8a8a" stroke-width="0.6"/><circle cx="879.9" cy="305.8" r="3" fill="#1a1a1a" stroke="#7a7a7a" stroke-width="0.8"/><rect x="813.7" y="315.8" width="82.6" height="2.4" fill="#9c9c9c" stroke="#3c3c3c" stroke-width="0.6" rx="1.2"/><rect x="847.3" y="299.7" width="6.2" height="13" fill="#585858" stroke="#6a6a6a" stroke-width="0.5"/><rect x="848.3" y="300.6" width="4.2" height="5" fill="#4a4a4a"/><rect x="849.4" y="308.6" width="2" height="2" fill="#e8e8e8"/><rect x="855.8" y="302.3" width="7.7" height="10.4" fill="#4e4e4e" stroke="#8a8a8a" stroke-width="0.6" rx="1"/><path d="M858.4 305.4v3M861 305.4v3M859.7 307.4v3" fill="none" stroke="#aaa" stroke-width="0.7"/><rect x="805.2" y="305.2" width="4.4" height="2.6" fill="#8a8a8a" stroke="#444" stroke-width="0.6" rx="1.3"/><rect x="900.7" y="305.2" width="4.4" height="2.6" fill="#8a8a8a" stroke="#444" stroke-width="0.6" rx="1.3"/><text x="659.6" y="322.6" transform="rotate(.03 659.6 322.6)" font-size="4.6" fill="#1c1c1c">PS1</text><text x="906.4" y="322.6" transform="rotate(.03 906.4 322.6)" font-size="4.6" fill="#1c1c1c">PS2</text><text x="787.2" y="296.4" transform="rotate(.03 787.2 296.4)" font-size="4.8" fill="#222" text-anchor="middle">230V</text><rect x="778.7" y="297.1" width="17.2" height="12.7" fill="#8a8a8a" stroke="#666" stroke-width="0.6" rx="1.2"/><path d="M780.3 298.7H794.3V305.8L791.9 308.2H782.7L780.3 305.8Z" fill="#1fe02a"/><rect x="783.36" y="301.67" width="1" height="3.3" fill="#7dff84"/><rect x="786.8" y="301.67" width="1" height="3.3" fill="#7dff84"/><rect x="790.24" y="301.67" width="1" height="3.3" fill="#7dff84"/><path d="M644.3 328.4L926.9 328.4" stroke="#000" stroke-width="1.3"/><g transform="translate(0 125.7)"><rect x="644.3" y="203.2" width="282.6" height="125.2" fill="#c0c0c0"/><text x="648.1" y="209.5" transform="rotate(.03 648.1 209.5)" font-size="6.2" fill="#000" font-weight="700" font-family='DejaVu Sans, sans-serif' textLength="49.2" lengthAdjust="spacingAndGlyphs">NetApp FAS960</text><path d="M648.4 212.9h54.4M648.4 218.13h54.4M648.4 223.36h54.4M648.4 228.59h54.4M648.4 233.82h54.4M648.4 239.05h54.4M648.4 244.28h54.4" stroke="#878787" stroke-width="3.8" stroke-dasharray="5.4 1.46" fill="none"/><path d="M648.4 249.5h5.4M648.4 254.73h5.4M648.4 259.96h5.4M648.4 265.19h5.4" stroke="#878787" stroke-width="3.8" stroke-dasharray="5.4 1.46" fill="none"/><path d="M705.2 207.05h164M705.2 211.75h164" stroke="#878787" stroke-width="3.9" stroke-dasharray="5.2 1.66" fill="none"/><path d="M869.6 206.9h54.4M869.6 212.13h54.4M869.6 217.36h54.4M869.6 222.59h54.4M869.6 227.82h54.4M869.6 233.05h54.4M869.6 238.28h54.4M869.6 243.51h54.4M869.6 248.74h54.4M869.6 253.97h54.4M869.6 259.2h54.4M869.6 264.43h54.4M869.6 269.66h54.4" stroke="#878787" stroke-width="3.8" stroke-dasharray="5.4 1.46" fill="none"/><text x="664.8" y="250" transform="rotate(.03 664.8 250)" font-size="3.8" fill="#000" font-weight="700" text-anchor="middle">Console</text><path d="M658 251.4H671.6L669.6 257.4H660Z" fill="#2c2c2c"/><path d="M660.2 253.4L669.4 253.4" stroke="#aaa" stroke-width="0.8" stroke-dasharray=".9 .8"/><path d="M661.2 255.4L668.4 255.4" stroke="#aaa" stroke-width="0.8" stroke-dasharray=".9 .8"/><path d="M655.6 253.2L656.8 254.8" stroke="#111" stroke-width="0.7"/><path d="M672.8 253.2L674 254.8" stroke="#111" stroke-width="0.7"/><rect x="679.8" y="262.4" width="9.6" height="9.2" fill="#fff"/><path d="M681.14 263.87H688.06V267.74Q688.06 270.31 684.6 270.31Q681.14 270.31 681.14 267.74Z" fill="#000"/><text x="690.4" y="266.8" transform="rotate(.03 690.4 266.8)" font-size="3.4" fill="#111" font-weight="700">10/100</text><text x="690.4" y="270.8" transform="rotate(.03 690.4 270.8)" font-size="3.6" fill="#111" font-weight="700">BaseT</text><text x="649.6" y="280.8" transform="rotate(.03 649.6 280.8)" font-size="4.2" fill="#8c8c8c">FAS960-1001</text><rect x="716.9" y="215.3" width="12.52" height="63.4" fill="#cacaca"/><rect x="729.42" y="215.3" width="12.52" height="63.4" fill="#cacaca"/><rect x="741.94" y="215.3" width="12.52" height="63.4" fill="#cacaca"/><rect x="754.46" y="215.3" width="12.52" height="63.4" fill="#cacaca"/><rect x="766.98" y="215.3" width="12.52" height="63.4" fill="#cacaca"/><rect x="779.5" y="215.3" width="12.52" height="63.4" fill="#cacaca"/><rect x="792.02" y="215.3" width="12.52" height="63.4" fill="#cacaca"/><rect x="804.54" y="215.3" width="12.52" height="63.4" fill="#cacaca"/><rect x="817.06" y="215.3" width="12.52" height="63.4" fill="#cacaca"/><rect x="829.58" y="215.3" width="12.52" height="63.4" fill="#cacaca"/><rect x="842.1" y="215.3" width="12.52" height="63.4" fill="#cacaca"/><path d="M716.9 215.3L716.9 278.7" stroke="#111" stroke-width="1.2"/><path d="M729.42 215.3L729.42 278.7" stroke="#111" stroke-width="1.2"/><path d="M741.94 215.3L741.94 278.7" stroke="#111" stroke-width="1.2"/><path d="M754.46 215.3L754.46 278.7" stroke="#111" stroke-width="1.2"/><path d="M766.98 215.3L766.98 278.7" stroke="#111" stroke-width="1.2"/><path d="M779.5 215.3L779.5 278.7" stroke="#111" stroke-width="1.2"/><path d="M792.02 215.3L792.02 278.7" stroke="#111" stroke-width="1.2"/><path d="M804.54 215.3L804.54 278.7" stroke="#111" stroke-width="1.2"/><path d="M817.06 215.3L817.06 278.7" stroke="#111" stroke-width="1.2"/><path d="M829.58 215.3L829.58 278.7" stroke="#111" stroke-width="1.2"/><path d="M842.1 215.3L842.1 278.7" stroke="#111" stroke-width="1.2"/><path d="M854.62 215.3L854.62 278.7" stroke="#111" stroke-width="1.2"/><path d="M716.9 215.3L854.62 215.3" stroke="#555" stroke-width="0.7"/><path d="M716.9 278.7L854.62 278.7" stroke="#222" stroke-width="1"/><text x="723.2" y="239.2" transform="rotate(.03 723.2 239.2)" font-size="3.8" fill="#000" text-anchor="middle">Tx</text><rect x="719.8" y="240.2" width="6.8" height="13.6" fill="#4c4c4c"/><rect x="720.9" y="241.5" width="4.6" height="4.6" fill="#32bc38"/><rect x="722.1" y="242.7" width="2.2" height="2.2" fill="#c4ffc4"/><rect x="720.9" y="247.8" width="4.6" height="4.6" fill="#32bc38"/><rect x="722.1" y="249" width="2.2" height="2.2" fill="#c4ffc4"/><text x="723.2" y="257.4" transform="rotate(.03 723.2 257.4)" font-size="3.8" fill="#000" text-anchor="middle" font-style="italic">Rx</text><text x="723.2" y="283.6" transform="rotate(.03 723.2 283.6)" font-size="4.9" fill="#000" font-weight="700" text-anchor="middle">1</text><text x="735.72" y="239.2" transform="rotate(.03 735.72 239.2)" font-size="3.8" fill="#000" text-anchor="middle">Tx</text><rect x="732.32" y="240.2" width="6.8" height="13.6" fill="#4c4c4c"/><rect x="733.42" y="241.5" width="4.6" height="4.6" fill="#32bc38"/><rect x="734.62" y="242.7" width="2.2" height="2.2" fill="#c4ffc4"/><rect x="733.42" y="247.8" width="4.6" height="4.6" fill="#32bc38"/><rect x="734.62" y="249" width="2.2" height="2.2" fill="#c4ffc4"/><text x="735.72" y="257.4" transform="rotate(.03 735.72 257.4)" font-size="3.8" fill="#000" text-anchor="middle" font-style="italic">Rx</text><text x="735.72" y="283.6" transform="rotate(.03 735.72 283.6)" font-size="4.9" fill="#000" font-weight="700" text-anchor="middle">2</text><text x="748.24" y="228.8" transform="rotate(.03 748.24 228.8)" font-size="3.8" fill="#000" text-anchor="middle">Tx</text><rect x="744.84" y="229.6" width="6.8" height="13.6" fill="#4c4c4c"/><rect x="745.94" y="230.9" width="4.6" height="4.6" fill="#32bc38"/><rect x="747.14" y="232.1" width="2.2" height="2.2" fill="#c4ffc4"/><rect x="745.94" y="237.2" width="4.6" height="4.6" fill="#32bc38"/><rect x="747.14" y="238.4" width="2.2" height="2.2" fill="#c4ffc4"/><text x="748.24" y="246.6" transform="rotate(.03 748.24 246.6)" font-size="3.6" fill="#000" text-anchor="middle" font-style="italic">Rx</text><text x="748.24" y="250.6" transform="rotate(.03 748.24 250.6)" font-size="3.8" fill="#000" text-anchor="middle">Tx</text><rect x="744.84" y="251.5" width="6.8" height="13.6" fill="#4c4c4c"/><rect x="745.94" y="252.8" width="4.6" height="4.6" fill="#32bc38"/><rect x="747.14" y="254" width="2.2" height="2.2" fill="#c4ffc4"/><rect x="745.94" y="259.1" width="4.6" height="4.6" fill="#32bc38"/><rect x="747.14" y="260.3" width="2.2" height="2.2" fill="#c4ffc4"/><text x="748.24" y="268.6" transform="rotate(.03 748.24 268.6)" font-size="3.6" fill="#000" text-anchor="middle" font-style="italic">Rx</text><text x="744.04" y="237.6" transform="rotate(.03 744.04 237.6)" font-size="2.8" fill="#222" text-anchor="middle">1</text><text x="744.04" y="259.6" transform="rotate(.03 744.04 259.6)" font-size="2.8" fill="#222" text-anchor="middle">2</text><text x="748.24" y="283.6" transform="rotate(.03 748.24 283.6)" font-size="4.9" fill="#000" font-weight="700" text-anchor="middle">3</text><text x="760.76" y="228.8" transform="rotate(.03 760.76 228.8)" font-size="3.8" fill="#000" text-anchor="middle">Tx</text><rect x="757.36" y="229.6" width="6.8" height="13.6" fill="#4c4c4c"/><rect x="758.46" y="230.9" width="4.6" height="4.6" fill="#32bc38"/><rect x="759.66" y="232.1" width="2.2" height="2.2" fill="#c4ffc4"/><rect x="758.46" y="237.2" width="4.6" height="4.6" fill="#32bc38"/><rect x="759.66" y="238.4" width="2.2" height="2.2" fill="#c4ffc4"/><text x="760.76" y="246.6" transform="rotate(.03 760.76 246.6)" font-size="3.6" fill="#000" text-anchor="middle" font-style="italic">Rx</text><text x="760.76" y="250.6" transform="rotate(.03 760.76 250.6)" font-size="3.8" fill="#000" text-anchor="middle">Tx</text><rect x="757.36" y="251.5" width="6.8" height="13.6" fill="#4c4c4c"/><rect x="758.46" y="252.8" width="4.6" height="4.6" fill="#32bc38"/><rect x="759.66" y="254" width="2.2" height="2.2" fill="#c4ffc4"/><rect x="758.46" y="259.1" width="4.6" height="4.6" fill="#32bc38"/><rect x="759.66" y="260.3" width="2.2" height="2.2" fill="#c4ffc4"/><text x="760.76" y="268.6" transform="rotate(.03 760.76 268.6)" font-size="3.6" fill="#000" text-anchor="middle" font-style="italic">Rx</text><text x="756.56" y="237.6" transform="rotate(.03 756.56 237.6)" font-size="2.8" fill="#222" text-anchor="middle">1</text><text x="756.56" y="259.6" transform="rotate(.03 756.56 259.6)" font-size="2.8" fill="#222" text-anchor="middle">2</text><text x="760.76" y="283.6" transform="rotate(.03 760.76 283.6)" font-size="4.9" fill="#000" font-weight="700" text-anchor="middle">4</text><text x="773.28" y="228.8" transform="rotate(.03 773.28 228.8)" font-size="3.8" fill="#000" text-anchor="middle">Tx</text><rect x="769.88" y="229.6" width="6.8" height="13.6" fill="#4c4c4c"/><rect x="770.98" y="230.9" width="4.6" height="4.6" fill="#32bc38"/><rect x="772.18" y="232.1" width="2.2" height="2.2" fill="#c4ffc4"/><rect x="770.98" y="237.2" width="4.6" height="4.6" fill="#32bc38"/><rect x="772.18" y="238.4" width="2.2" height="2.2" fill="#c4ffc4"/><text x="773.28" y="246.6" transform="rotate(.03 773.28 246.6)" font-size="3.6" fill="#000" text-anchor="middle" font-style="italic">Rx</text><text x="773.28" y="250.6" transform="rotate(.03 773.28 250.6)" font-size="3.8" fill="#000" text-anchor="middle">Tx</text><rect x="769.88" y="251.5" width="6.8" height="13.6" fill="#4c4c4c"/><rect x="770.98" y="252.8" width="4.6" height="4.6" fill="#32bc38"/><rect x="772.18" y="254" width="2.2" height="2.2" fill="#c4ffc4"/><rect x="770.98" y="259.1" width="4.6" height="4.6" fill="#32bc38"/><rect x="772.18" y="260.3" width="2.2" height="2.2" fill="#c4ffc4"/><text x="773.28" y="268.6" transform="rotate(.03 773.28 268.6)" font-size="3.6" fill="#000" text-anchor="middle" font-style="italic">Rx</text><text x="769.08" y="237.6" transform="rotate(.03 769.08 237.6)" font-size="2.8" fill="#222" text-anchor="middle">1</text><text x="769.08" y="259.6" transform="rotate(.03 769.08 259.6)" font-size="2.8" fill="#222" text-anchor="middle">2</text><text x="773.28" y="283.6" transform="rotate(.03 773.28 283.6)" font-size="4.9" fill="#000" font-weight="700" text-anchor="middle">5</text><text x="785.8" y="228.8" transform="rotate(.03 785.8 228.8)" font-size="3.8" fill="#000" text-anchor="middle">Tx</text><rect x="782.4" y="229.6" width="6.8" height="13.6" fill="#4c4c4c"/><rect x="783.5" y="230.9" width="4.6" height="4.6" fill="#32bc38"/><rect x="784.7" y="232.1" width="2.2" height="2.2" fill="#c4ffc4"/><rect x="783.5" y="237.2" width="4.6" height="4.6" fill="#32bc38"/><rect x="784.7" y="238.4" width="2.2" height="2.2" fill="#c4ffc4"/><text x="785.8" y="246.6" transform="rotate(.03 785.8 246.6)" font-size="3.6" fill="#000" text-anchor="middle" font-style="italic">Rx</text><text x="785.8" y="250.6" transform="rotate(.03 785.8 250.6)" font-size="3.8" fill="#000" text-anchor="middle">Tx</text><rect x="782.4" y="251.5" width="6.8" height="13.6" fill="#4c4c4c"/><rect x="783.5" y="252.8" width="4.6" height="4.6" fill="#32bc38"/><rect x="784.7" y="254" width="2.2" height="2.2" fill="#c4ffc4"/><rect x="783.5" y="259.1" width="4.6" height="4.6" fill="#32bc38"/><rect x="784.7" y="260.3" width="2.2" height="2.2" fill="#c4ffc4"/><text x="785.8" y="268.6" transform="rotate(.03 785.8 268.6)" font-size="3.6" fill="#000" text-anchor="middle" font-style="italic">Rx</text><text x="781.6" y="237.6" transform="rotate(.03 781.6 237.6)" font-size="2.8" fill="#222" text-anchor="middle">1</text><text x="781.6" y="259.6" transform="rotate(.03 781.6 259.6)" font-size="2.8" fill="#222" text-anchor="middle">2</text><text x="785.8" y="283.6" transform="rotate(.03 785.8 283.6)" font-size="4.9" fill="#000" font-weight="700" text-anchor="middle">6</text><text x="798.32" y="228.8" transform="rotate(.03 798.32 228.8)" font-size="3.8" fill="#000" text-anchor="middle">Tx</text><rect x="794.92" y="229.6" width="6.8" height="13.6" fill="#4c4c4c"/><rect x="795.92" y="230.8" width="4.8" height="4.8" fill="#6e6e6e"/><rect x="796.62" y="232.4" width="3.4" height="1.6" fill="#d0d0d0"/><rect x="795.92" y="237.1" width="4.8" height="4.8" fill="#6e6e6e"/><rect x="796.62" y="238.7" width="3.4" height="1.6" fill="#d0d0d0"/><text x="798.32" y="246.6" transform="rotate(.03 798.32 246.6)" font-size="3.6" fill="#000" text-anchor="middle" font-style="italic">Rx</text><text x="798.32" y="250.6" transform="rotate(.03 798.32 250.6)" font-size="3.8" fill="#000" text-anchor="middle">Tx</text><rect x="794.92" y="251.5" width="6.8" height="13.6" fill="#4c4c4c"/><rect x="795.92" y="252.7" width="4.8" height="4.8" fill="#6e6e6e"/><rect x="796.62" y="254.3" width="3.4" height="1.6" fill="#d0d0d0"/><rect x="795.92" y="259" width="4.8" height="4.8" fill="#6e6e6e"/><rect x="796.62" y="260.6" width="3.4" height="1.6" fill="#d0d0d0"/><text x="798.32" y="268.6" transform="rotate(.03 798.32 268.6)" font-size="3.6" fill="#000" text-anchor="middle" font-style="italic">Rx</text><text x="794.12" y="237.6" transform="rotate(.03 794.12 237.6)" font-size="2.8" fill="#222" text-anchor="middle">1</text><text x="794.12" y="259.6" transform="rotate(.03 794.12 259.6)" font-size="2.8" fill="#222" text-anchor="middle">2</text><text x="798.32" y="283.6" transform="rotate(.03 798.32 283.6)" font-size="4.9" fill="#000" font-weight="700" text-anchor="middle">7</text><text x="810.84" y="228.8" transform="rotate(.03 810.84 228.8)" font-size="3.8" fill="#000" text-anchor="middle">Tx</text><rect x="807.44" y="229.6" width="6.8" height="13.6" fill="#4c4c4c"/><rect x="808.44" y="230.8" width="4.8" height="4.8" fill="#6e6e6e"/><rect x="809.14" y="232.4" width="3.4" height="1.6" fill="#d0d0d0"/><rect x="808.44" y="237.1" width="4.8" height="4.8" fill="#6e6e6e"/><rect x="809.14" y="238.7" width="3.4" height="1.6" fill="#d0d0d0"/><text x="810.84" y="246.6" transform="rotate(.03 810.84 246.6)" font-size="3.6" fill="#000" text-anchor="middle" font-style="italic">Rx</text><text x="810.84" y="250.6" transform="rotate(.03 810.84 250.6)" font-size="3.8" fill="#000" text-anchor="middle">Tx</text><rect x="807.44" y="251.5" width="6.8" height="13.6" fill="#4c4c4c"/><rect x="808.44" y="252.7" width="4.8" height="4.8" fill="#6e6e6e"/><rect x="809.14" y="254.3" width="3.4" height="1.6" fill="#d0d0d0"/><rect x="808.44" y="259" width="4.8" height="4.8" fill="#6e6e6e"/><rect x="809.14" y="260.6" width="3.4" height="1.6" fill="#d0d0d0"/><text x="810.84" y="268.6" transform="rotate(.03 810.84 268.6)" font-size="3.6" fill="#000" text-anchor="middle" font-style="italic">Rx</text><text x="806.64" y="237.6" transform="rotate(.03 806.64 237.6)" font-size="2.8" fill="#222" text-anchor="middle">1</text><text x="806.64" y="259.6" transform="rotate(.03 806.64 259.6)" font-size="2.8" fill="#222" text-anchor="middle">2</text><text x="810.84" y="283.6" transform="rotate(.03 810.84 283.6)" font-size="4.9" fill="#000" font-weight="700" text-anchor="middle">8</text><text x="823.36" y="228.8" transform="rotate(.03 823.36 228.8)" font-size="3.8" fill="#000" text-anchor="middle">Tx</text><rect x="819.96" y="229.6" width="6.8" height="13.6" fill="#4c4c4c"/><rect x="820.96" y="230.8" width="4.8" height="4.8" fill="#6e6e6e"/><rect x="821.66" y="232.4" width="3.4" height="1.6" fill="#d0d0d0"/><rect x="820.96" y="237.1" width="4.8" height="4.8" fill="#6e6e6e"/><rect x="821.66" y="238.7" width="3.4" height="1.6" fill="#d0d0d0"/><text x="823.36" y="246.6" transform="rotate(.03 823.36 246.6)" font-size="3.6" fill="#000" text-anchor="middle" font-style="italic">Rx</text><text x="823.36" y="250.6" transform="rotate(.03 823.36 250.6)" font-size="3.8" fill="#000" text-anchor="middle">Tx</text><rect x="819.96" y="251.5" width="6.8" height="13.6" fill="#4c4c4c"/><rect x="820.96" y="252.7" width="4.8" height="4.8" fill="#6e6e6e"/><rect x="821.66" y="254.3" width="3.4" height="1.6" fill="#d0d0d0"/><rect x="820.96" y="259" width="4.8" height="4.8" fill="#6e6e6e"/><rect x="821.66" y="260.6" width="3.4" height="1.6" fill="#d0d0d0"/><text x="823.36" y="268.6" transform="rotate(.03 823.36 268.6)" font-size="3.6" fill="#000" text-anchor="middle" font-style="italic">Rx</text><text x="819.16" y="237.6" transform="rotate(.03 819.16 237.6)" font-size="2.8" fill="#222" text-anchor="middle">1</text><text x="819.16" y="259.6" transform="rotate(.03 819.16 259.6)" font-size="2.8" fill="#222" text-anchor="middle">2</text><text x="823.36" y="283.6" transform="rotate(.03 823.36 283.6)" font-size="4.9" fill="#000" font-weight="700" text-anchor="middle">9</text><text x="835.88" y="239.2" transform="rotate(.03 835.88 239.2)" font-size="3.8" fill="#000" text-anchor="middle">Tx</text><rect x="832.48" y="240.2" width="6.8" height="13.6" fill="#4c4c4c"/><rect x="833.48" y="241.4" width="4.8" height="4.8" fill="#6e6e6e"/><rect x="834.18" y="243" width="3.4" height="1.6" fill="#d0d0d0"/><rect x="833.48" y="247.7" width="4.8" height="4.8" fill="#6e6e6e"/><rect x="834.18" y="249.3" width="3.4" height="1.6" fill="#d0d0d0"/><text x="835.88" y="257.4" transform="rotate(.03 835.88 257.4)" font-size="3.8" fill="#000" text-anchor="middle" font-style="italic">Rx</text><text x="835.88" y="283.6" transform="rotate(.03 835.88 283.6)" font-size="4.9" fill="#000" font-weight="700" text-anchor="middle">10</text><text x="848.4" y="239.2" transform="rotate(.03 848.4 239.2)" font-size="3.8" fill="#000" text-anchor="middle">Tx</text><rect x="845" y="240.2" width="6.8" height="13.6" fill="#4c4c4c"/><rect x="846" y="241.4" width="4.8" height="4.8" fill="#6e6e6e"/><rect x="846.7" y="243" width="3.4" height="1.6" fill="#d0d0d0"/><rect x="846" y="247.7" width="4.8" height="4.8" fill="#6e6e6e"/><rect x="846.7" y="249.3" width="3.4" height="1.6" fill="#d0d0d0"/><text x="848.4" y="257.4" transform="rotate(.03 848.4 257.4)" font-size="3.8" fill="#000" text-anchor="middle" font-style="italic">Rx</text><text x="848.4" y="283.6" transform="rotate(.03 848.4 283.6)" font-size="4.9" fill="#000" font-weight="700" text-anchor="middle">11</text><rect x="669.2" y="289.8" width="101.5" height="32.2" fill="#767676" stroke="#5e5e5e" stroke-width="0.8"/><circle cx="684.1" cy="294.4" r="0.9" fill="#111"/><circle cx="684.1" cy="317.2" r="0.9" fill="#111"/><circle cx="707.3" cy="294.4" r="0.9" fill="#111"/><circle cx="707.3" cy="317.2" r="0.9" fill="#111"/><circle cx="695.7" cy="305.8" r="14" fill="#0c0c0c"/><circle cx="695.7" cy="305.8" r="11.4" fill="none" stroke="#7a7a7a" stroke-width="0.9"/><circle cx="695.7" cy="305.8" r="8.6" fill="none" stroke="#7a7a7a" stroke-width="0.9"/><circle cx="695.7" cy="305.8" r="5.8" fill="none" stroke="#7a7a7a" stroke-width="0.9"/><path d="M685.62 295.72L705.78 315.88" stroke="#8a8a8a" stroke-width="0.6"/><path d="M685.62 315.88L705.78 295.72" stroke="#8a8a8a" stroke-width="0.6"/><circle cx="695.7" cy="305.8" r="3" fill="#1a1a1a" stroke="#7a7a7a" stroke-width="0.8"/><circle cx="733.1" cy="294.4" r="0.9" fill="#111"/><circle cx="733.1" cy="317.2" r="0.9" fill="#111"/><circle cx="756.3" cy="294.4" r="0.9" fill="#111"/><circle cx="756.3" cy="317.2" r="0.9" fill="#111"/><circle cx="744.7" cy="305.8" r="14" fill="#0c0c0c"/><circle cx="744.7" cy="305.8" r="11.4" fill="none" stroke="#7a7a7a" stroke-width="0.9"/><circle cx="744.7" cy="305.8" r="8.6" fill="none" stroke="#7a7a7a" stroke-width="0.9"/><circle cx="744.7" cy="305.8" r="5.8" fill="none" stroke="#7a7a7a" stroke-width="0.9"/><path d="M734.62 295.72L754.78 315.88" stroke="#8a8a8a" stroke-width="0.6"/><path d="M734.62 315.88L754.78 295.72" stroke="#8a8a8a" stroke-width="0.6"/><circle cx="744.7" cy="305.8" r="3" fill="#1a1a1a" stroke="#7a7a7a" stroke-width="0.8"/><rect x="678.5" y="315.8" width="82.6" height="2.4" fill="#9c9c9c" stroke="#3c3c3c" stroke-width="0.6" rx="1.2"/><rect x="712.1" y="299.7" width="6.2" height="13" fill="#585858" stroke="#6a6a6a" stroke-width="0.5"/><rect x="713.1" y="300.6" width="4.2" height="5" fill="#4a4a4a"/><rect x="714.2" y="308.6" width="2" height="2" fill="#e8e8e8"/><rect x="720.6" y="302.3" width="7.7" height="10.4" fill="#4e4e4e" stroke="#8a8a8a" stroke-width="0.6" rx="1"/><path d="M723.2 305.4v3M725.8 305.4v3M724.5 307.4v3" fill="none" stroke="#aaa" stroke-width="0.7"/><rect x="670" y="305.2" width="4.4" height="2.6" fill="#8a8a8a" stroke="#444" stroke-width="0.6" rx="1.3"/><rect x="765.5" y="305.2" width="4.4" height="2.6" fill="#8a8a8a" stroke="#444" stroke-width="0.6" rx="1.3"/><rect x="804.4" y="289.8" width="101.5" height="32.2" fill="#767676" stroke="#5e5e5e" stroke-width="0.8"/><circle cx="819.3" cy="294.4" r="0.9" fill="#111"/><circle cx="819.3" cy="317.2" r="0.9" fill="#111"/><circle cx="842.5" cy="294.4" r="0.9" fill="#111"/><circle cx="842.5" cy="317.2" r="0.9" fill="#111"/><circle cx="830.9" cy="305.8" r="14" fill="#0c0c0c"/><circle cx="830.9" cy="305.8" r="11.4" fill="none" stroke="#7a7a7a" stroke-width="0.9"/><circle cx="830.9" cy="305.8" r="8.6" fill="none" stroke="#7a7a7a" stroke-width="0.9"/><circle cx="830.9" cy="305.8" r="5.8" fill="none" stroke="#7a7a7a" stroke-width="0.9"/><path d="M820.82 295.72L840.98 315.88" stroke="#8a8a8a" stroke-width="0.6"/><path d="M820.82 315.88L840.98 295.72" stroke="#8a8a8a" stroke-width="0.6"/><circle cx="830.9" cy="305.8" r="3" fill="#1a1a1a" stroke="#7a7a7a" stroke-width="0.8"/><circle cx="868.3" cy="294.4" r="0.9" fill="#111"/><circle cx="868.3" cy="317.2" r="0.9" fill="#111"/><circle cx="891.5" cy="294.4" r="0.9" fill="#111"/><circle cx="891.5" cy="317.2" r="0.9" fill="#111"/><circle cx="879.9" cy="305.8" r="14" fill="#0c0c0c"/><circle cx="879.9" cy="305.8" r="11.4" fill="none" stroke="#7a7a7a" stroke-width="0.9"/><circle cx="879.9" cy="305.8" r="8.6" fill="none" stroke="#7a7a7a" stroke-width="0.9"/><circle cx="879.9" cy="305.8" r="5.8" fill="none" stroke="#7a7a7a" stroke-width="0.9"/><path d="M869.82 295.72L889.98 315.88" stroke="#8a8a8a" stroke-width="0.6"/><path d="M869.82 315.88L889.98 295.72" stroke="#8a8a8a" stroke-width="0.6"/><circle cx="879.9" cy="305.8" r="3" fill="#1a1a1a" stroke="#7a7a7a" stroke-width="0.8"/><rect x="813.7" y="315.8" width="82.6" height="2.4" fill="#9c9c9c" stroke="#3c3c3c" stroke-width="0.6" rx="1.2"/><rect x="847.3" y="299.7" width="6.2" height="13" fill="#585858" stroke="#6a6a6a" stroke-width="0.5"/><rect x="848.3" y="300.6" width="4.2" height="5" fill="#4a4a4a"/><rect x="849.4" y="308.6" width="2" height="2" fill="#e8e8e8"/><rect x="855.8" y="302.3" width="7.7" height="10.4" fill="#4e4e4e" stroke="#8a8a8a" stroke-width="0.6" rx="1"/><path d="M858.4 305.4v3M861 305.4v3M859.7 307.4v3" fill="none" stroke="#aaa" stroke-width="0.7"/><rect x="805.2" y="305.2" width="4.4" height="2.6" fill="#8a8a8a" stroke="#444" stroke-width="0.6" rx="1.3"/><rect x="900.7" y="305.2" width="4.4" height="2.6" fill="#8a8a8a" stroke="#444" stroke-width="0.6" rx="1.3"/><text x="659.6" y="322.6" transform="rotate(.03 659.6 322.6)" font-size="4.6" fill="#1c1c1c">PS1</text><text x="906.4" y="322.6" transform="rotate(.03 906.4 322.6)" font-size="4.6" fill="#1c1c1c">PS2</text><text x="787.2" y="296.4" transform="rotate(.03 787.2 296.4)" font-size="4.8" fill="#222" text-anchor="middle">230V</text><rect x="778.7" y="297.1" width="17.2" height="12.7" fill="#8a8a8a" stroke="#666" stroke-width="0.6" rx="1.2"/><path d="M780.3 298.7H794.3V305.8L791.9 308.2H782.7L780.3 305.8Z" fill="#1fe02a"/><rect x="783.36" y="301.67" width="1" height="3.3" fill="#7dff84"/><rect x="786.8" y="301.67" width="1" height="3.3" fill="#7dff84"/><rect x="790.24" y="301.67" width="1" height="3.3" fill="#7dff84"/><path d="M644.3 328.4L926.9 328.4" stroke="#000" stroke-width="1.3"/></g><rect x="644.3" y="454.4" width="282.6" height="62.8" fill="#c0c0c0"/><text x="645.6" y="460.2" transform="rotate(.03 645.6 460.2)" font-size="5.6" fill="#111">NetApp</text><text x="725.4" y="460.3" transform="rotate(.03 725.4 460.3)" font-size="6.2" fill="#444" textLength="29.6" lengthAdjust="spacingAndGlyphs">FAS3020C</text><text x="651.4" y="500.4" font-size="3.8" fill="#7c7c7c" transform="rotate(-90 651.4 500.4)">FAS3020C-1000</text><rect x="663.6" y="463.2" width="64" height="12.4" fill="#cacaca" stroke="#4a4a4a" stroke-width="1" rx="1"/><rect x="689.4" y="465.4" width="13.4" height="7.6" fill="#4e4e4e"/><rect x="690.8" y="466.5" width="4.7" height="5.4" fill="#35c43a"/><rect x="692.1" y="467.8" width="2.1" height="2.8" fill="#c8ffc8"/><rect x="696.7" y="466.5" width="4.7" height="5.4" fill="#35c43a"/><rect x="698" y="467.8" width="2.1" height="2.8" fill="#c8ffc8"/><text x="688.8" y="469.6" transform="rotate(.03 688.8 469.6)" font-size="2.2" fill="#222" text-anchor="end">2Gb</text><path d="M687 467.2L687 471.6" stroke="#333" stroke-width="0.5"/><path d="M705 467.2L705 471.6" stroke="#333" stroke-width="0.5"/><path d="M702.8 467.6L705 467.6" stroke="#333" stroke-width="0.5"/><path d="M702.8 471L705 471" stroke="#333" stroke-width="0.5"/><rect x="663.6" y="480.6" width="64" height="12.4" fill="#cacaca" stroke="#4a4a4a" stroke-width="1" rx="1"/><rect x="689.4" y="482.8" width="13.4" height="7.6" fill="#4e4e4e"/><rect x="690.8" y="483.9" width="4.7" height="5.4" fill="#35c43a"/><rect x="692.1" y="485.2" width="2.1" height="2.8" fill="#c8ffc8"/><rect x="696.7" y="483.9" width="4.7" height="5.4" fill="#35c43a"/><rect x="698" y="485.2" width="2.1" height="2.8" fill="#c8ffc8"/><text x="688.8" y="487" transform="rotate(.03 688.8 487)" font-size="2.2" fill="#222" text-anchor="end">2Gb</text><path d="M687 484.6L687 489" stroke="#333" stroke-width="0.5"/><path d="M705 484.6L705 489" stroke="#333" stroke-width="0.5"/><path d="M702.8 485L705 485" stroke="#333" stroke-width="0.5"/><path d="M702.8 488.4L705 488.4" stroke="#333" stroke-width="0.5"/><rect x="748.2" y="463.2" width="63.6" height="12.4" fill="#cacaca" stroke="#4a4a4a" stroke-width="1" rx="1"/><rect x="773.8" y="465.4" width="13.4" height="7.6" fill="#4e4e4e"/><rect x="775.2" y="466.5" width="4.7" height="5.4" fill="#35c43a"/><rect x="776.5" y="467.8" width="2.1" height="2.8" fill="#c8ffc8"/><rect x="781.1" y="466.5" width="4.7" height="5.4" fill="#35c43a"/><rect x="782.4" y="467.8" width="2.1" height="2.8" fill="#c8ffc8"/><text x="773.2" y="469.6" transform="rotate(.03 773.2 469.6)" font-size="2.2" fill="#222" text-anchor="end">2Gb</text><path d="M771.4 467.2L771.4 471.6" stroke="#333" stroke-width="0.5"/><path d="M789.4 467.2L789.4 471.6" stroke="#333" stroke-width="0.5"/><path d="M787.2 467.6L789.4 467.6" stroke="#333" stroke-width="0.5"/><path d="M787.2 471L789.4 471" stroke="#333" stroke-width="0.5"/><rect x="748.2" y="480.6" width="63.6" height="12.4" fill="#cacaca" stroke="#4a4a4a" stroke-width="1" rx="1"/><rect x="773.8" y="482.8" width="13.4" height="7.6" fill="#4e4e4e"/><rect x="775.2" y="483.9" width="4.7" height="5.4" fill="#35c43a"/><rect x="776.5" y="485.2" width="2.1" height="2.8" fill="#c8ffc8"/><rect x="781.1" y="483.9" width="4.7" height="5.4" fill="#35c43a"/><rect x="782.4" y="485.2" width="2.1" height="2.8" fill="#c8ffc8"/><text x="773.2" y="487" transform="rotate(.03 773.2 487)" font-size="2.2" fill="#222" text-anchor="end">2Gb</text><path d="M771.4 484.6L771.4 489" stroke="#333" stroke-width="0.5"/><path d="M789.4 484.6L789.4 489" stroke="#333" stroke-width="0.5"/><path d="M787.2 485L789.4 485" stroke="#333" stroke-width="0.5"/><path d="M787.2 488.4L789.4 488.4" stroke="#333" stroke-width="0.5"/><text x="729.6" y="470.8" transform="rotate(.03 729.6 470.8)" font-size="3.9" fill="#111" font-weight="700">1</text><text x="729.6" y="488.2" transform="rotate(.03 729.6 488.2)" font-size="3.9" fill="#111" font-weight="700">2</text><text x="746.6" y="470.8" transform="rotate(.03 746.6 470.8)" font-size="3.9" fill="#111" font-weight="700" text-anchor="end">3</text><text x="746.6" y="488.2" transform="rotate(.03 746.6 488.2)" font-size="3.9" fill="#111" font-weight="700" text-anchor="end">4</text><rect x="650.6" y="504.2" width="10.2" height="9.4" fill="#fff"/><path d="M652.03 512.28H659.37V508.22Q659.37 505.52 655.7 505.52Q652.03 505.52 652.03 508.22Z" fill="#000"/><rect x="671.3" y="506" width="7.7" height="5.4" fill="#9a9a9a" stroke="#8a8a8a" stroke-width="0.4"/><rect x="682.1" y="506" width="7.7" height="5.4" fill="#9a9a9a" stroke="#8a8a8a" stroke-width="0.4"/><rect x="776.3" y="506" width="7.7" height="5.4" fill="#9a9a9a" stroke="#8a8a8a" stroke-width="0.4"/><rect x="787.2" y="506" width="7.7" height="5.4" fill="#9a9a9a" stroke="#8a8a8a" stroke-width="0.4"/><rect x="701.2" y="504.2" width="10.2" height="9.4" fill="#e8ffe8"/><path d="M702.7 512.4H709.9V508.4Q709.9 505.4 706.3 505.4Q702.7 505.4 702.7 508.4Z" fill="#12ee1c"/><rect x="712.8" y="504.2" width="10.2" height="9.4" fill="#fff"/><path d="M714.23 512.28H721.57V508.22Q721.57 505.52 717.9 505.52Q714.23 505.52 714.23 508.22Z" fill="#000"/><rect x="732.8" y="504.2" width="10.2" height="9.4" fill="#fff"/><path d="M734.23 512.28H741.57V508.22Q741.57 505.52 737.9 505.52Q734.23 505.52 734.23 508.22Z" fill="#000"/><rect x="749.2" y="504.2" width="10.2" height="9.4" fill="#fff"/><path d="M750.63 512.28H757.97V508.22Q757.97 505.52 754.3 505.52Q750.63 505.52 750.63 508.22Z" fill="#000"/><rect x="760.5" y="504.2" width="10.2" height="9.4" fill="#fff"/><path d="M761.93 512.28H769.27V508.22Q769.27 505.52 765.6 505.52Q761.93 505.52 761.93 508.22Z" fill="#000"/><text x="680.8" y="499.6" transform="rotate(.03 680.8 499.6)" font-size="3.6" fill="#111" font-weight="700" text-anchor="middle">2Gb</text><text x="711.8" y="499.6" transform="rotate(.03 711.8 499.6)" font-size="3.6" fill="#111" font-weight="700" text-anchor="middle">GbE</text><text x="759.8" y="499.6" transform="rotate(.03 759.8 499.6)" font-size="3.6" fill="#111" font-weight="700" text-anchor="middle">GbE</text><text x="785.6" y="499.6" transform="rotate(.03 785.6 499.6)" font-size="3.6" fill="#111" font-weight="700" text-anchor="middle">2Gb</text><text x="675.2" y="503.6" transform="rotate(.03 675.2 503.6)" font-size="3.4" fill="#111" font-weight="700" text-anchor="middle">0a</text><text x="686" y="503.6" transform="rotate(.03 686 503.6)" font-size="3.4" fill="#111" font-weight="700" text-anchor="middle">0b</text><text x="706.2" y="503.6" transform="rotate(.03 706.2 503.6)" font-size="3.4" fill="#111" font-weight="700" text-anchor="middle">0a</text><text x="717.8" y="503.6" transform="rotate(.03 717.8 503.6)" font-size="3.4" fill="#111" font-weight="700" text-anchor="middle">0b</text><text x="754.2" y="503.6" transform="rotate(.03 754.2 503.6)" font-size="3.4" fill="#111" font-weight="700" text-anchor="middle">0c</text><text x="765.6" y="503.6" transform="rotate(.03 765.6 503.6)" font-size="3.4" fill="#111" font-weight="700" text-anchor="middle">0d</text><text x="780.2" y="503.6" transform="rotate(.03 780.2 503.6)" font-size="3.4" fill="#111" font-weight="700" text-anchor="middle">0c</text><text x="791" y="503.6" transform="rotate(.03 791 503.6)" font-size="3.4" fill="#111" font-weight="700" text-anchor="middle">0d</text><text x="737.8" y="502.8" transform="rotate(.03 737.8 502.8)" font-size="3.6" fill="#111" font-weight="700" text-anchor="middle">RLM</text><text x="814" y="507.2" transform="rotate(.03 814 507.2)" font-size="3.5" fill="#111" font-weight="700" text-anchor="middle">SCSI</text><rect x="802.2" y="508.4" width="23.6" height="4.2" fill="#e4e4e4" stroke="#333" stroke-width="0.8" rx="2.1"/><path d="M804.4 510.5L823.6 510.5" stroke="#444" stroke-width="1.2"/><rect x="831.2" y="456.5" width="41.5" height="58.6" fill="#cdcdcd" stroke="#6e6e6e" stroke-width="1"/><rect x="833.2" y="459.3" width="37" height="5.1" fill="#b2b2b2" stroke="#777" stroke-width="0.8" rx="2.2"/><path d="M834.8 480.3h33.71M836.9 483.49h31.61M834.8 486.68h33.71M836.9 489.87h31.61M834.8 493.06h33.71M836.9 496.25h31.61M834.8 499.44h33.71M836.9 502.63h31.61M834.8 505.82h33.71M836.9 509.01h31.61M834.8 512.2h33.71" stroke="#0c0c0c" stroke-width="2.6" stroke-linecap="round" stroke-dasharray="0 4.2" fill="none"/><path d="M833.55 467.54a1.25 1.25 0 1 0 2.5 0a1.25 1.25 0 1 0-2.5 0M835.65 470.73a1.25 1.25 0 1 0 2.5 0a1.25 1.25 0 1 0-2.5 0M865.05 470.73a1.25 1.25 0 1 0 2.5 0a1.25 1.25 0 1 0-2.5 0M833.55 473.92a1.25 1.25 0 1 0 2.5 0a1.25 1.25 0 1 0-2.5 0M854.55 473.92a1.25 1.25 0 1 0 2.5 0a1.25 1.25 0 1 0-2.5 0M867.15 473.92a1.25 1.25 0 1 0 2.5 0a1.25 1.25 0 1 0-2.5 0M835.65 477.11a1.25 1.25 0 1 0 2.5 0a1.25 1.25 0 1 0-2.5 0M852.45 477.11a1.25 1.25 0 1 0 2.5 0a1.25 1.25 0 1 0-2.5 0M865.05 477.11a1.25 1.25 0 1 0 2.5 0a1.25 1.25 0 1 0-2.5 0" fill="#0c0c0c"/><rect x="839.9" y="467.1" width="11" height="8.5" fill="#8a8a8a" stroke="#666" stroke-width="0.5" rx="1"/><rect x="841.2" y="468.3" width="8.4" height="6.1" fill="#1fe02a"/><rect x="843.8" y="470.1" width="3.2" height="2.4" fill="#8dff90"/><rect x="858" y="468" width="6.2" height="9" fill="#484848" stroke="#333" stroke-width="0.5"/><rect x="859.4" y="468.9" width="3.4" height="3.4" fill="#5e5e5e"/><rect x="874.3" y="456.5" width="41.5" height="58.6" fill="#cdcdcd" stroke="#6e6e6e" stroke-width="1"/><rect x="876.3" y="459.3" width="37" height="5.1" fill="#b2b2b2" stroke="#777" stroke-width="0.8" rx="2.2"/><path d="M877.9 480.3h33.71M880 483.49h31.61M877.9 486.68h33.71M880 489.87h31.61M877.9 493.06h33.71M880 496.25h31.61M877.9 499.44h33.71M880 502.63h31.61M877.9 505.82h33.71M880 509.01h31.61M877.9 512.2h33.71" stroke="#0c0c0c" stroke-width="2.6" stroke-linecap="round" stroke-dasharray="0 4.2" fill="none"/><path d="M876.65 467.54a1.25 1.25 0 1 0 2.5 0a1.25 1.25 0 1 0-2.5 0M878.75 470.73a1.25 1.25 0 1 0 2.5 0a1.25 1.25 0 1 0-2.5 0M908.15 470.73a1.25 1.25 0 1 0 2.5 0a1.25 1.25 0 1 0-2.5 0M876.65 473.92a1.25 1.25 0 1 0 2.5 0a1.25 1.25 0 1 0-2.5 0M897.65 473.92a1.25 1.25 0 1 0 2.5 0a1.25 1.25 0 1 0-2.5 0M910.25 473.92a1.25 1.25 0 1 0 2.5 0a1.25 1.25 0 1 0-2.5 0M878.75 477.11a1.25 1.25 0 1 0 2.5 0a1.25 1.25 0 1 0-2.5 0M895.55 477.11a1.25 1.25 0 1 0 2.5 0a1.25 1.25 0 1 0-2.5 0M908.15 477.11a1.25 1.25 0 1 0 2.5 0a1.25 1.25 0 1 0-2.5 0" fill="#0c0c0c"/><rect x="883" y="467.1" width="11" height="8.5" fill="#8a8a8a" stroke="#666" stroke-width="0.5" rx="1"/><rect x="884.3" y="468.3" width="8.4" height="6.1" fill="#1fe02a"/><rect x="886.9" y="470.1" width="3.2" height="2.4" fill="#8dff90"/><rect x="901.1" y="468" width="6.2" height="9" fill="#484848" stroke="#333" stroke-width="0.5"/><rect x="902.5" y="468.9" width="3.4" height="3.4" fill="#5e5e5e"/><path d="M644.3 517.2L926.9 517.2" stroke="#000" stroke-width="1.3"/><rect x="644.3" y="517.2" width="282.6" height="62.8" fill="#c0c0c0"/><text x="645.6" y="523" transform="rotate(.03 645.6 523)" font-size="5.6" fill="#111">NetApp</text><text x="725.4" y="523.1" transform="rotate(.03 725.4 523.1)" font-size="6.2" fill="#444" textLength="29.6" lengthAdjust="spacingAndGlyphs">FAS3020C</text><text x="651.4" y="563.2" font-size="3.8" fill="#7c7c7c" transform="rotate(-90 651.4 563.2)">FAS3020C-1001</text><rect x="663.6" y="526" width="64" height="12.4" fill="#cacaca" stroke="#4a4a4a" stroke-width="1" rx="1"/><rect x="689.4" y="528.2" width="13.4" height="7.6" fill="#4e4e4e"/><rect x="690.8" y="529.3" width="4.7" height="5.4" fill="#35c43a"/><rect x="692.1" y="530.6" width="2.1" height="2.8" fill="#c8ffc8"/><rect x="696.7" y="529.3" width="4.7" height="5.4" fill="#35c43a"/><rect x="698" y="530.6" width="2.1" height="2.8" fill="#c8ffc8"/><text x="688.8" y="532.4" transform="rotate(.03 688.8 532.4)" font-size="2.2" fill="#222" text-anchor="end">2Gb</text><path d="M687 530L687 534.4" stroke="#333" stroke-width="0.5"/><path d="M705 530L705 534.4" stroke="#333" stroke-width="0.5"/><path d="M702.8 530.4L705 530.4" stroke="#333" stroke-width="0.5"/><path d="M702.8 533.8L705 533.8" stroke="#333" stroke-width="0.5"/><rect x="663.6" y="543.4" width="64" height="12.4" fill="#cacaca" stroke="#4a4a4a" stroke-width="1" rx="1"/><rect x="689.4" y="545.6" width="13.4" height="7.6" fill="#4e4e4e"/><rect x="690.8" y="546.7" width="4.7" height="5.4" fill="#35c43a"/><rect x="692.1" y="548" width="2.1" height="2.8" fill="#c8ffc8"/><rect x="696.7" y="546.7" width="4.7" height="5.4" fill="#35c43a"/><rect x="698" y="548" width="2.1" height="2.8" fill="#c8ffc8"/><text x="688.8" y="549.8" transform="rotate(.03 688.8 549.8)" font-size="2.2" fill="#222" text-anchor="end">2Gb</text><path d="M687 547.4L687 551.8" stroke="#333" stroke-width="0.5"/><path d="M705 547.4L705 551.8" stroke="#333" stroke-width="0.5"/><path d="M702.8 547.8L705 547.8" stroke="#333" stroke-width="0.5"/><path d="M702.8 551.2L705 551.2" stroke="#333" stroke-width="0.5"/><rect x="748.2" y="526" width="63.6" height="12.4" fill="#cacaca" stroke="#4a4a4a" stroke-width="1" rx="1"/><rect x="773.8" y="528.2" width="13.4" height="7.6" fill="#4e4e4e"/><rect x="775.2" y="529.3" width="4.7" height="5.4" fill="#35c43a"/><rect x="776.5" y="530.6" width="2.1" height="2.8" fill="#c8ffc8"/><rect x="781.1" y="529.3" width="4.7" height="5.4" fill="#35c43a"/><rect x="782.4" y="530.6" width="2.1" height="2.8" fill="#c8ffc8"/><text x="773.2" y="532.4" transform="rotate(.03 773.2 532.4)" font-size="2.2" fill="#222" text-anchor="end">2Gb</text><path d="M771.4 530L771.4 534.4" stroke="#333" stroke-width="0.5"/><path d="M789.4 530L789.4 534.4" stroke="#333" stroke-width="0.5"/><path d="M787.2 530.4L789.4 530.4" stroke="#333" stroke-width="0.5"/><path d="M787.2 533.8L789.4 533.8" stroke="#333" stroke-width="0.5"/><rect x="748.2" y="543.4" width="63.6" height="12.4" fill="#cacaca" stroke="#4a4a4a" stroke-width="1" rx="1"/><rect x="773.8" y="545.6" width="13.4" height="7.6" fill="#4e4e4e"/><rect x="775.2" y="546.7" width="4.7" height="5.4" fill="#35c43a"/><rect x="776.5" y="548" width="2.1" height="2.8" fill="#c8ffc8"/><rect x="781.1" y="546.7" width="4.7" height="5.4" fill="#35c43a"/><rect x="782.4" y="548" width="2.1" height="2.8" fill="#c8ffc8"/><text x="773.2" y="549.8" transform="rotate(.03 773.2 549.8)" font-size="2.2" fill="#222" text-anchor="end">2Gb</text><path d="M771.4 547.4L771.4 551.8" stroke="#333" stroke-width="0.5"/><path d="M789.4 547.4L789.4 551.8" stroke="#333" stroke-width="0.5"/><path d="M787.2 547.8L789.4 547.8" stroke="#333" stroke-width="0.5"/><path d="M787.2 551.2L789.4 551.2" stroke="#333" stroke-width="0.5"/><text x="729.6" y="533.6" transform="rotate(.03 729.6 533.6)" font-size="3.9" fill="#111" font-weight="700">1</text><text x="729.6" y="551" transform="rotate(.03 729.6 551)" font-size="3.9" fill="#111" font-weight="700">2</text><text x="746.6" y="533.6" transform="rotate(.03 746.6 533.6)" font-size="3.9" fill="#111" font-weight="700" text-anchor="end">3</text><text x="746.6" y="551" transform="rotate(.03 746.6 551)" font-size="3.9" fill="#111" font-weight="700" text-anchor="end">4</text><rect x="650.6" y="567" width="10.2" height="9.4" fill="#fff"/><path d="M652.03 575.08H659.37V571.02Q659.37 568.32 655.7 568.32Q652.03 568.32 652.03 571.02Z" fill="#000"/><rect x="671.3" y="568.8" width="7.7" height="5.4" fill="#9a9a9a" stroke="#8a8a8a" stroke-width="0.4"/><rect x="682.1" y="568.8" width="7.7" height="5.4" fill="#9a9a9a" stroke="#8a8a8a" stroke-width="0.4"/><rect x="776.3" y="568.8" width="7.7" height="5.4" fill="#9a9a9a" stroke="#8a8a8a" stroke-width="0.4"/><rect x="787.2" y="568.8" width="7.7" height="5.4" fill="#9a9a9a" stroke="#8a8a8a" stroke-width="0.4"/><rect x="701.2" y="567" width="10.2" height="9.4" fill="#fff"/><path d="M702.63 575.08H709.97V571.02Q709.97 568.32 706.3 568.32Q702.63 568.32 702.63 571.02Z" fill="#000"/><rect x="712.8" y="567" width="10.2" height="9.4" fill="#fff"/><path d="M714.23 575.08H721.57V571.02Q721.57 568.32 717.9 568.32Q714.23 568.32 714.23 571.02Z" fill="#000"/><rect x="732.8" y="567" width="10.2" height="9.4" fill="#fff"/><path d="M734.23 575.08H741.57V571.02Q741.57 568.32 737.9 568.32Q734.23 568.32 734.23 571.02Z" fill="#000"/><rect x="749.2" y="567" width="10.2" height="9.4" fill="#fff"/><path d="M750.63 575.08H757.97V571.02Q757.97 568.32 754.3 568.32Q750.63 568.32 750.63 571.02Z" fill="#000"/><rect x="760.5" y="567" width="10.2" height="9.4" fill="#fff"/><path d="M761.93 575.08H769.27V571.02Q769.27 568.32 765.6 568.32Q761.93 568.32 761.93 571.02Z" fill="#000"/><text x="680.8" y="562.4" transform="rotate(.03 680.8 562.4)" font-size="3.6" fill="#111" font-weight="700" text-anchor="middle">2Gb</text><text x="711.8" y="562.4" transform="rotate(.03 711.8 562.4)" font-size="3.6" fill="#111" font-weight="700" text-anchor="middle">GbE</text><text x="759.8" y="562.4" transform="rotate(.03 759.8 562.4)" font-size="3.6" fill="#111" font-weight="700" text-anchor="middle">GbE</text><text x="785.6" y="562.4" transform="rotate(.03 785.6 562.4)" font-size="3.6" fill="#111" font-weight="700" text-anchor="middle">2Gb</text><text x="675.2" y="566.4" transform="rotate(.03 675.2 566.4)" font-size="3.4" fill="#111" font-weight="700" text-anchor="middle">0a</text><text x="686" y="566.4" transform="rotate(.03 686 566.4)" font-size="3.4" fill="#111" font-weight="700" text-anchor="middle">0b</text><text x="706.2" y="566.4" transform="rotate(.03 706.2 566.4)" font-size="3.4" fill="#111" font-weight="700" text-anchor="middle">0a</text><text x="717.8" y="566.4" transform="rotate(.03 717.8 566.4)" font-size="3.4" fill="#111" font-weight="700" text-anchor="middle">0b</text><text x="754.2" y="566.4" transform="rotate(.03 754.2 566.4)" font-size="3.4" fill="#111" font-weight="700" text-anchor="middle">0c</text><text x="765.6" y="566.4" transform="rotate(.03 765.6 566.4)" font-size="3.4" fill="#111" font-weight="700" text-anchor="middle">0d</text><text x="780.2" y="566.4" transform="rotate(.03 780.2 566.4)" font-size="3.4" fill="#111" font-weight="700" text-anchor="middle">0c</text><text x="791" y="566.4" transform="rotate(.03 791 566.4)" font-size="3.4" fill="#111" font-weight="700" text-anchor="middle">0d</text><text x="737.8" y="565.6" transform="rotate(.03 737.8 565.6)" font-size="3.6" fill="#111" font-weight="700" text-anchor="middle">RLM</text><text x="814" y="570" transform="rotate(.03 814 570)" font-size="3.5" fill="#111" font-weight="700" text-anchor="middle">SCSI</text><rect x="802.2" y="571.2" width="23.6" height="4.2" fill="#e4e4e4" stroke="#333" stroke-width="0.8" rx="2.1"/><path d="M804.4 573.3L823.6 573.3" stroke="#444" stroke-width="1.2"/><rect x="831.2" y="519.3" width="41.5" height="58.6" fill="#cdcdcd" stroke="#6e6e6e" stroke-width="1"/><rect x="833.2" y="522.1" width="37" height="5.1" fill="#b2b2b2" stroke="#777" stroke-width="0.8" rx="2.2"/><path d="M834.8 543.1h33.71M836.9 546.29h31.61M834.8 549.48h33.71M836.9 552.67h31.61M834.8 555.86h33.71M836.9 559.05h31.61M834.8 562.24h33.71M836.9 565.43h31.61M834.8 568.62h33.71M836.9 571.81h31.61M834.8 575h33.71" stroke="#0c0c0c" stroke-width="2.6" stroke-linecap="round" stroke-dasharray="0 4.2" fill="none"/><path d="M833.55 530.34a1.25 1.25 0 1 0 2.5 0a1.25 1.25 0 1 0-2.5 0M835.65 533.53a1.25 1.25 0 1 0 2.5 0a1.25 1.25 0 1 0-2.5 0M865.05 533.53a1.25 1.25 0 1 0 2.5 0a1.25 1.25 0 1 0-2.5 0M833.55 536.72a1.25 1.25 0 1 0 2.5 0a1.25 1.25 0 1 0-2.5 0M854.55 536.72a1.25 1.25 0 1 0 2.5 0a1.25 1.25 0 1 0-2.5 0M867.15 536.72a1.25 1.25 0 1 0 2.5 0a1.25 1.25 0 1 0-2.5 0M835.65 539.91a1.25 1.25 0 1 0 2.5 0a1.25 1.25 0 1 0-2.5 0M852.45 539.91a1.25 1.25 0 1 0 2.5 0a1.25 1.25 0 1 0-2.5 0M865.05 539.91a1.25 1.25 0 1 0 2.5 0a1.25 1.25 0 1 0-2.5 0" fill="#0c0c0c"/><rect x="839.9" y="529.9" width="11" height="8.5" fill="#8a8a8a" stroke="#666" stroke-width="0.5" rx="1"/><rect x="841.2" y="531.1" width="8.4" height="6.1" fill="#1fe02a"/><rect x="843.8" y="532.9" width="3.2" height="2.4" fill="#8dff90"/><rect x="858" y="530.8" width="6.2" height="9" fill="#484848" stroke="#333" stroke-width="0.5"/><rect x="859.4" y="531.7" width="3.4" height="3.4" fill="#5e5e5e"/><rect x="874.3" y="519.3" width="41.5" height="58.6" fill="#cdcdcd" stroke="#6e6e6e" stroke-width="1"/><rect x="876.3" y="522.1" width="37" height="5.1" fill="#b2b2b2" stroke="#777" stroke-width="0.8" rx="2.2"/><path d="M877.9 543.1h33.71M880 546.29h31.61M877.9 549.48h33.71M880 552.67h31.61M877.9 555.86h33.71M880 559.05h31.61M877.9 562.24h33.71M880 565.43h31.61M877.9 568.62h33.71M880 571.81h31.61M877.9 575h33.71" stroke="#0c0c0c" stroke-width="2.6" stroke-linecap="round" stroke-dasharray="0 4.2" fill="none"/><path d="M876.65 530.34a1.25 1.25 0 1 0 2.5 0a1.25 1.25 0 1 0-2.5 0M878.75 533.53a1.25 1.25 0 1 0 2.5 0a1.25 1.25 0 1 0-2.5 0M908.15 533.53a1.25 1.25 0 1 0 2.5 0a1.25 1.25 0 1 0-2.5 0M876.65 536.72a1.25 1.25 0 1 0 2.5 0a1.25 1.25 0 1 0-2.5 0M897.65 536.72a1.25 1.25 0 1 0 2.5 0a1.25 1.25 0 1 0-2.5 0M910.25 536.72a1.25 1.25 0 1 0 2.5 0a1.25 1.25 0 1 0-2.5 0M878.75 539.91a1.25 1.25 0 1 0 2.5 0a1.25 1.25 0 1 0-2.5 0M895.55 539.91a1.25 1.25 0 1 0 2.5 0a1.25 1.25 0 1 0-2.5 0M908.15 539.91a1.25 1.25 0 1 0 2.5 0a1.25 1.25 0 1 0-2.5 0" fill="#0c0c0c"/><rect x="883" y="529.9" width="11" height="8.5" fill="#8a8a8a" stroke="#666" stroke-width="0.5" rx="1"/><rect x="884.3" y="531.1" width="8.4" height="6.1" fill="#1fe02a"/><rect x="886.9" y="532.9" width="3.2" height="2.4" fill="#8dff90"/><rect x="901.1" y="530.8" width="6.2" height="9" fill="#484848" stroke="#333" stroke-width="0.5"/><rect x="902.5" y="531.7" width="3.4" height="3.4" fill="#5e5e5e"/><path d="M644.3 580L926.9 580" stroke="#000" stroke-width="1.3"/><rect x="644.3" y="580" width="282.6" height="62.8" fill="#c0c0c0"/><text x="645.6" y="585.8" transform="rotate(.03 645.6 585.8)" font-size="5.6" fill="#111">NetApp</text><text x="725.4" y="585.9" transform="rotate(.03 725.4 585.9)" font-size="6.2" fill="#444" textLength="29.6" lengthAdjust="spacingAndGlyphs">FAS3020C</text><text x="651.4" y="626" font-size="3.8" fill="#7c7c7c" transform="rotate(-90 651.4 626)">FAS3020C-1002</text><rect x="663.6" y="588.8" width="64" height="12.4" fill="#cacaca" stroke="#4a4a4a" stroke-width="1" rx="1"/><rect x="689.4" y="591" width="13.4" height="7.6" fill="#4e4e4e"/><rect x="690.8" y="592.1" width="4.7" height="5.4" fill="#35c43a"/><rect x="692.1" y="593.4" width="2.1" height="2.8" fill="#c8ffc8"/><rect x="696.7" y="592.1" width="4.7" height="5.4" fill="#35c43a"/><rect x="698" y="593.4" width="2.1" height="2.8" fill="#c8ffc8"/><text x="688.8" y="595.2" transform="rotate(.03 688.8 595.2)" font-size="2.2" fill="#222" text-anchor="end">2Gb</text><path d="M687 592.8L687 597.2" stroke="#333" stroke-width="0.5"/><path d="M705 592.8L705 597.2" stroke="#333" stroke-width="0.5"/><path d="M702.8 593.2L705 593.2" stroke="#333" stroke-width="0.5"/><path d="M702.8 596.6L705 596.6" stroke="#333" stroke-width="0.5"/><rect x="663.6" y="606.2" width="64" height="12.4" fill="#cacaca" stroke="#4a4a4a" stroke-width="1" rx="1"/><rect x="689.4" y="608.4" width="13.4" height="7.6" fill="#4e4e4e"/><rect x="690.8" y="609.5" width="4.7" height="5.4" fill="#35c43a"/><rect x="692.1" y="610.8" width="2.1" height="2.8" fill="#c8ffc8"/><rect x="696.7" y="609.5" width="4.7" height="5.4" fill="#35c43a"/><rect x="698" y="610.8" width="2.1" height="2.8" fill="#c8ffc8"/><text x="688.8" y="612.6" transform="rotate(.03 688.8 612.6)" font-size="2.2" fill="#222" text-anchor="end">2Gb</text><path d="M687 610.2L687 614.6" stroke="#333" stroke-width="0.5"/><path d="M705 610.2L705 614.6" stroke="#333" stroke-width="0.5"/><path d="M702.8 610.6L705 610.6" stroke="#333" stroke-width="0.5"/><path d="M702.8 614L705 614" stroke="#333" stroke-width="0.5"/><rect x="748.2" y="588.8" width="63.6" height="12.4" fill="#cacaca" stroke="#4a4a4a" stroke-width="1" rx="1"/><rect x="773.8" y="591" width="13.4" height="7.6" fill="#4e4e4e"/><rect x="775.2" y="592.1" width="4.7" height="5.4" fill="#35c43a"/><rect x="776.5" y="593.4" width="2.1" height="2.8" fill="#c8ffc8"/><rect x="781.1" y="592.1" width="4.7" height="5.4" fill="#35c43a"/><rect x="782.4" y="593.4" width="2.1" height="2.8" fill="#c8ffc8"/><text x="773.2" y="595.2" transform="rotate(.03 773.2 595.2)" font-size="2.2" fill="#222" text-anchor="end">2Gb</text><path d="M771.4 592.8L771.4 597.2" stroke="#333" stroke-width="0.5"/><path d="M789.4 592.8L789.4 597.2" stroke="#333" stroke-width="0.5"/><path d="M787.2 593.2L789.4 593.2" stroke="#333" stroke-width="0.5"/><path d="M787.2 596.6L789.4 596.6" stroke="#333" stroke-width="0.5"/><rect x="748.2" y="606.2" width="63.6" height="12.4" fill="#cacaca" stroke="#4a4a4a" stroke-width="1" rx="1"/><rect x="773.8" y="608.4" width="13.4" height="7.6" fill="#4e4e4e"/><rect x="775.2" y="609.5" width="4.7" height="5.4" fill="#35c43a"/><rect x="776.5" y="610.8" width="2.1" height="2.8" fill="#c8ffc8"/><rect x="781.1" y="609.5" width="4.7" height="5.4" fill="#35c43a"/><rect x="782.4" y="610.8" width="2.1" height="2.8" fill="#c8ffc8"/><text x="773.2" y="612.6" transform="rotate(.03 773.2 612.6)" font-size="2.2" fill="#222" text-anchor="end">2Gb</text><path d="M771.4 610.2L771.4 614.6" stroke="#333" stroke-width="0.5"/><path d="M789.4 610.2L789.4 614.6" stroke="#333" stroke-width="0.5"/><path d="M787.2 610.6L789.4 610.6" stroke="#333" stroke-width="0.5"/><path d="M787.2 614L789.4 614" stroke="#333" stroke-width="0.5"/><text x="729.6" y="596.4" transform="rotate(.03 729.6 596.4)" font-size="3.9" fill="#111" font-weight="700">1</text><text x="729.6" y="613.8" transform="rotate(.03 729.6 613.8)" font-size="3.9" fill="#111" font-weight="700">2</text><text x="746.6" y="596.4" transform="rotate(.03 746.6 596.4)" font-size="3.9" fill="#111" font-weight="700" text-anchor="end">3</text><text x="746.6" y="613.8" transform="rotate(.03 746.6 613.8)" font-size="3.9" fill="#111" font-weight="700" text-anchor="end">4</text><rect x="650.6" y="629.8" width="10.2" height="9.4" fill="#fff"/><path d="M652.03 637.88H659.37V633.82Q659.37 631.12 655.7 631.12Q652.03 631.12 652.03 633.82Z" fill="#000"/><rect x="671.3" y="631.6" width="7.7" height="5.4" fill="#9a9a9a" stroke="#8a8a8a" stroke-width="0.4"/><rect x="682.1" y="631.6" width="7.7" height="5.4" fill="#9a9a9a" stroke="#8a8a8a" stroke-width="0.4"/><rect x="776.3" y="631.6" width="7.7" height="5.4" fill="#9a9a9a" stroke="#8a8a8a" stroke-width="0.4"/><rect x="787.2" y="631.6" width="7.7" height="5.4" fill="#9a9a9a" stroke="#8a8a8a" stroke-width="0.4"/><rect x="701.2" y="629.8" width="10.2" height="9.4" fill="#fff"/><path d="M702.63 637.88H709.97V633.82Q709.97 631.12 706.3 631.12Q702.63 631.12 702.63 633.82Z" fill="#000"/><rect x="712.8" y="629.8" width="10.2" height="9.4" fill="#fff"/><path d="M714.23 637.88H721.57V633.82Q721.57 631.12 717.9 631.12Q714.23 631.12 714.23 633.82Z" fill="#000"/><rect x="732.8" y="629.8" width="10.2" height="9.4" fill="#fff"/><path d="M734.23 637.88H741.57V633.82Q741.57 631.12 737.9 631.12Q734.23 631.12 734.23 633.82Z" fill="#000"/><rect x="749.2" y="629.8" width="10.2" height="9.4" fill="#fff"/><path d="M750.63 637.88H757.97V633.82Q757.97 631.12 754.3 631.12Q750.63 631.12 750.63 633.82Z" fill="#000"/><rect x="760.5" y="629.8" width="10.2" height="9.4" fill="#fff"/><path d="M761.93 637.88H769.27V633.82Q769.27 631.12 765.6 631.12Q761.93 631.12 761.93 633.82Z" fill="#000"/><text x="680.8" y="625.2" transform="rotate(.03 680.8 625.2)" font-size="3.6" fill="#111" font-weight="700" text-anchor="middle">2Gb</text><text x="711.8" y="625.2" transform="rotate(.03 711.8 625.2)" font-size="3.6" fill="#111" font-weight="700" text-anchor="middle">GbE</text><text x="759.8" y="625.2" transform="rotate(.03 759.8 625.2)" font-size="3.6" fill="#111" font-weight="700" text-anchor="middle">GbE</text><text x="785.6" y="625.2" transform="rotate(.03 785.6 625.2)" font-size="3.6" fill="#111" font-weight="700" text-anchor="middle">2Gb</text><text x="675.2" y="629.2" transform="rotate(.03 675.2 629.2)" font-size="3.4" fill="#111" font-weight="700" text-anchor="middle">0a</text><text x="686" y="629.2" transform="rotate(.03 686 629.2)" font-size="3.4" fill="#111" font-weight="700" text-anchor="middle">0b</text><text x="706.2" y="629.2" transform="rotate(.03 706.2 629.2)" font-size="3.4" fill="#111" font-weight="700" text-anchor="middle">0a</text><text x="717.8" y="629.2" transform="rotate(.03 717.8 629.2)" font-size="3.4" fill="#111" font-weight="700" text-anchor="middle">0b</text><text x="754.2" y="629.2" transform="rotate(.03 754.2 629.2)" font-size="3.4" fill="#111" font-weight="700" text-anchor="middle">0c</text><text x="765.6" y="629.2" transform="rotate(.03 765.6 629.2)" font-size="3.4" fill="#111" font-weight="700" text-anchor="middle">0d</text><text x="780.2" y="629.2" transform="rotate(.03 780.2 629.2)" font-size="3.4" fill="#111" font-weight="700" text-anchor="middle">0c</text><text x="791" y="629.2" transform="rotate(.03 791 629.2)" font-size="3.4" fill="#111" font-weight="700" text-anchor="middle">0d</text><text x="737.8" y="628.4" transform="rotate(.03 737.8 628.4)" font-size="3.6" fill="#111" font-weight="700" text-anchor="middle">RLM</text><text x="814" y="632.8" transform="rotate(.03 814 632.8)" font-size="3.5" fill="#111" font-weight="700" text-anchor="middle">SCSI</text><rect x="802.2" y="634" width="23.6" height="4.2" fill="#e4e4e4" stroke="#333" stroke-width="0.8" rx="2.1"/><path d="M804.4 636.1L823.6 636.1" stroke="#444" stroke-width="1.2"/><rect x="831.2" y="582.1" width="41.5" height="58.6" fill="#cdcdcd" stroke="#6e6e6e" stroke-width="1"/><rect x="833.2" y="584.9" width="37" height="5.1" fill="#b2b2b2" stroke="#777" stroke-width="0.8" rx="2.2"/><path d="M834.8 605.9h33.71M836.9 609.09h31.61M834.8 612.28h33.71M836.9 615.47h31.61M834.8 618.66h33.71M836.9 621.85h31.61M834.8 625.04h33.71M836.9 628.23h31.61M834.8 631.42h33.71M836.9 634.61h31.61M834.8 637.8h33.71" stroke="#0c0c0c" stroke-width="2.6" stroke-linecap="round" stroke-dasharray="0 4.2" fill="none"/><path d="M833.55 593.14a1.25 1.25 0 1 0 2.5 0a1.25 1.25 0 1 0-2.5 0M835.65 596.33a1.25 1.25 0 1 0 2.5 0a1.25 1.25 0 1 0-2.5 0M865.05 596.33a1.25 1.25 0 1 0 2.5 0a1.25 1.25 0 1 0-2.5 0M833.55 599.52a1.25 1.25 0 1 0 2.5 0a1.25 1.25 0 1 0-2.5 0M854.55 599.52a1.25 1.25 0 1 0 2.5 0a1.25 1.25 0 1 0-2.5 0M867.15 599.52a1.25 1.25 0 1 0 2.5 0a1.25 1.25 0 1 0-2.5 0M835.65 602.71a1.25 1.25 0 1 0 2.5 0a1.25 1.25 0 1 0-2.5 0M852.45 602.71a1.25 1.25 0 1 0 2.5 0a1.25 1.25 0 1 0-2.5 0M865.05 602.71a1.25 1.25 0 1 0 2.5 0a1.25 1.25 0 1 0-2.5 0" fill="#0c0c0c"/><rect x="839.9" y="592.7" width="11" height="8.5" fill="#8a8a8a" stroke="#666" stroke-width="0.5" rx="1"/><rect x="841.2" y="593.9" width="8.4" height="6.1" fill="#1fe02a"/><rect x="843.8" y="595.7" width="3.2" height="2.4" fill="#8dff90"/><rect x="858" y="593.6" width="6.2" height="9" fill="#484848" stroke="#333" stroke-width="0.5"/><rect x="859.4" y="594.5" width="3.4" height="3.4" fill="#5e5e5e"/><rect x="874.3" y="582.1" width="41.5" height="58.6" fill="#cdcdcd" stroke="#6e6e6e" stroke-width="1"/><rect x="876.3" y="584.9" width="37" height="5.1" fill="#b2b2b2" stroke="#777" stroke-width="0.8" rx="2.2"/><path d="M877.9 605.9h33.71M880 609.09h31.61M877.9 612.28h33.71M880 615.47h31.61M877.9 618.66h33.71M880 621.85h31.61M877.9 625.04h33.71M880 628.23h31.61M877.9 631.42h33.71M880 634.61h31.61M877.9 637.8h33.71" stroke="#0c0c0c" stroke-width="2.6" stroke-linecap="round" stroke-dasharray="0 4.2" fill="none"/><path d="M876.65 593.14a1.25 1.25 0 1 0 2.5 0a1.25 1.25 0 1 0-2.5 0M878.75 596.33a1.25 1.25 0 1 0 2.5 0a1.25 1.25 0 1 0-2.5 0M908.15 596.33a1.25 1.25 0 1 0 2.5 0a1.25 1.25 0 1 0-2.5 0M876.65 599.52a1.25 1.25 0 1 0 2.5 0a1.25 1.25 0 1 0-2.5 0M897.65 599.52a1.25 1.25 0 1 0 2.5 0a1.25 1.25 0 1 0-2.5 0M910.25 599.52a1.25 1.25 0 1 0 2.5 0a1.25 1.25 0 1 0-2.5 0M878.75 602.71a1.25 1.25 0 1 0 2.5 0a1.25 1.25 0 1 0-2.5 0M895.55 602.71a1.25 1.25 0 1 0 2.5 0a1.25 1.25 0 1 0-2.5 0M908.15 602.71a1.25 1.25 0 1 0 2.5 0a1.25 1.25 0 1 0-2.5 0" fill="#0c0c0c"/><rect x="883" y="592.7" width="11" height="8.5" fill="#8a8a8a" stroke="#666" stroke-width="0.5" rx="1"/><rect x="884.3" y="593.9" width="8.4" height="6.1" fill="#1fe02a"/><rect x="886.9" y="595.7" width="3.2" height="2.4" fill="#8dff90"/><rect x="901.1" y="593.6" width="6.2" height="9" fill="#484848" stroke="#333" stroke-width="0.5"/><rect x="902.5" y="594.5" width="3.4" height="3.4" fill="#5e5e5e"/><path d="M644.3 642.8L926.9 642.8" stroke="#000" stroke-width="1.3"/><rect x="644.3" y="642.8" width="282.6" height="62.8" fill="#c0c0c0"/><text x="645.6" y="648.6" transform="rotate(.03 645.6 648.6)" font-size="5.6" fill="#111">NetApp</text><text x="725.4" y="648.7" transform="rotate(.03 725.4 648.7)" font-size="6.2" fill="#444" textLength="29.6" lengthAdjust="spacingAndGlyphs">FAS3020C</text><text x="651.4" y="688.8" font-size="3.8" fill="#7c7c7c" transform="rotate(-90 651.4 688.8)">FAS3020C-1003</text><rect x="663.6" y="651.6" width="64" height="12.4" fill="#cacaca" stroke="#4a4a4a" stroke-width="1" rx="1"/><rect x="689.4" y="653.8" width="13.4" height="7.6" fill="#4e4e4e"/><rect x="690.8" y="654.9" width="4.7" height="5.4" fill="#35c43a"/><rect x="692.1" y="656.2" width="2.1" height="2.8" fill="#c8ffc8"/><rect x="696.7" y="654.9" width="4.7" height="5.4" fill="#35c43a"/><rect x="698" y="656.2" width="2.1" height="2.8" fill="#c8ffc8"/><text x="688.8" y="658" transform="rotate(.03 688.8 658)" font-size="2.2" fill="#222" text-anchor="end">2Gb</text><path d="M687 655.6L687 660" stroke="#333" stroke-width="0.5"/><path d="M705 655.6L705 660" stroke="#333" stroke-width="0.5"/><path d="M702.8 656L705 656" stroke="#333" stroke-width="0.5"/><path d="M702.8 659.4L705 659.4" stroke="#333" stroke-width="0.5"/><rect x="663.6" y="669" width="64" height="12.4" fill="#cacaca" stroke="#4a4a4a" stroke-width="1" rx="1"/><rect x="689.4" y="671.2" width="13.4" height="7.6" fill="#4e4e4e"/><rect x="690.8" y="672.3" width="4.7" height="5.4" fill="#35c43a"/><rect x="692.1" y="673.6" width="2.1" height="2.8" fill="#c8ffc8"/><rect x="696.7" y="672.3" width="4.7" height="5.4" fill="#35c43a"/><rect x="698" y="673.6" width="2.1" height="2.8" fill="#c8ffc8"/><text x="688.8" y="675.4" transform="rotate(.03 688.8 675.4)" font-size="2.2" fill="#222" text-anchor="end">2Gb</text><path d="M687 673L687 677.4" stroke="#333" stroke-width="0.5"/><path d="M705 673L705 677.4" stroke="#333" stroke-width="0.5"/><path d="M702.8 673.4L705 673.4" stroke="#333" stroke-width="0.5"/><path d="M702.8 676.8L705 676.8" stroke="#333" stroke-width="0.5"/><rect x="748.2" y="651.6" width="63.6" height="12.4" fill="#cacaca" stroke="#4a4a4a" stroke-width="1" rx="1"/><rect x="773.8" y="653.8" width="13.4" height="7.6" fill="#4e4e4e"/><rect x="775.2" y="654.9" width="4.7" height="5.4" fill="#35c43a"/><rect x="776.5" y="656.2" width="2.1" height="2.8" fill="#c8ffc8"/><rect x="781.1" y="654.9" width="4.7" height="5.4" fill="#35c43a"/><rect x="782.4" y="656.2" width="2.1" height="2.8" fill="#c8ffc8"/><text x="773.2" y="658" transform="rotate(.03 773.2 658)" font-size="2.2" fill="#222" text-anchor="end">2Gb</text><path d="M771.4 655.6L771.4 660" stroke="#333" stroke-width="0.5"/><path d="M789.4 655.6L789.4 660" stroke="#333" stroke-width="0.5"/><path d="M787.2 656L789.4 656" stroke="#333" stroke-width="0.5"/><path d="M787.2 659.4L789.4 659.4" stroke="#333" stroke-width="0.5"/><rect x="748.2" y="669" width="63.6" height="12.4" fill="#cacaca" stroke="#4a4a4a" stroke-width="1" rx="1"/><rect x="773.8" y="671.2" width="13.4" height="7.6" fill="#4e4e4e"/><rect x="775.2" y="672.3" width="4.7" height="5.4" fill="#35c43a"/><rect x="776.5" y="673.6" width="2.1" height="2.8" fill="#c8ffc8"/><rect x="781.1" y="672.3" width="4.7" height="5.4" fill="#35c43a"/><rect x="782.4" y="673.6" width="2.1" height="2.8" fill="#c8ffc8"/><text x="773.2" y="675.4" transform="rotate(.03 773.2 675.4)" font-size="2.2" fill="#222" text-anchor="end">2Gb</text><path d="M771.4 673L771.4 677.4" stroke="#333" stroke-width="0.5"/><path d="M789.4 673L789.4 677.4" stroke="#333" stroke-width="0.5"/><path d="M787.2 673.4L789.4 673.4" stroke="#333" stroke-width="0.5"/><path d="M787.2 676.8L789.4 676.8" stroke="#333" stroke-width="0.5"/><text x="729.6" y="659.2" transform="rotate(.03 729.6 659.2)" font-size="3.9" fill="#111" font-weight="700">1</text><text x="729.6" y="676.6" transform="rotate(.03 729.6 676.6)" font-size="3.9" fill="#111" font-weight="700">2</text><text x="746.6" y="659.2" transform="rotate(.03 746.6 659.2)" font-size="3.9" fill="#111" font-weight="700" text-anchor="end">3</text><text x="746.6" y="676.6" transform="rotate(.03 746.6 676.6)" font-size="3.9" fill="#111" font-weight="700" text-anchor="end">4</text><rect x="650.6" y="692.6" width="10.2" height="9.4" fill="#fff"/><path d="M652.03 700.68H659.37V696.62Q659.37 693.92 655.7 693.92Q652.03 693.92 652.03 696.62Z" fill="#000"/><rect x="671.3" y="694.4" width="7.7" height="5.4" fill="#9a9a9a" stroke="#8a8a8a" stroke-width="0.4"/><rect x="682.1" y="694.4" width="7.7" height="5.4" fill="#9a9a9a" stroke="#8a8a8a" stroke-width="0.4"/><rect x="776.3" y="694.4" width="7.7" height="5.4" fill="#9a9a9a" stroke="#8a8a8a" stroke-width="0.4"/><rect x="787.2" y="694.4" width="7.7" height="5.4" fill="#9a9a9a" stroke="#8a8a8a" stroke-width="0.4"/><rect x="701.2" y="692.6" width="10.2" height="9.4" fill="#fff"/><path d="M702.63 700.68H709.97V696.62Q709.97 693.92 706.3 693.92Q702.63 693.92 702.63 696.62Z" fill="#000"/><rect x="712.8" y="692.6" width="10.2" height="9.4" fill="#fff"/><path d="M714.23 700.68H721.57V696.62Q721.57 693.92 717.9 693.92Q714.23 693.92 714.23 696.62Z" fill="#000"/><rect x="732.8" y="692.6" width="10.2" height="9.4" fill="#fff"/><path d="M734.23 700.68H741.57V696.62Q741.57 693.92 737.9 693.92Q734.23 693.92 734.23 696.62Z" fill="#000"/><rect x="749.2" y="692.6" width="10.2" height="9.4" fill="#fff"/><path d="M750.63 700.68H757.97V696.62Q757.97 693.92 754.3 693.92Q750.63 693.92 750.63 696.62Z" fill="#000"/><rect x="760.5" y="692.6" width="10.2" height="9.4" fill="#fff"/><path d="M761.93 700.68H769.27V696.62Q769.27 693.92 765.6 693.92Q761.93 693.92 761.93 696.62Z" fill="#000"/><text x="680.8" y="688" transform="rotate(.03 680.8 688)" font-size="3.6" fill="#111" font-weight="700" text-anchor="middle">2Gb</text><text x="711.8" y="688" transform="rotate(.03 711.8 688)" font-size="3.6" fill="#111" font-weight="700" text-anchor="middle">GbE</text><text x="759.8" y="688" transform="rotate(.03 759.8 688)" font-size="3.6" fill="#111" font-weight="700" text-anchor="middle">GbE</text><text x="785.6" y="688" transform="rotate(.03 785.6 688)" font-size="3.6" fill="#111" font-weight="700" text-anchor="middle">2Gb</text><text x="675.2" y="692" transform="rotate(.03 675.2 692)" font-size="3.4" fill="#111" font-weight="700" text-anchor="middle">0a</text><text x="686" y="692" transform="rotate(.03 686 692)" font-size="3.4" fill="#111" font-weight="700" text-anchor="middle">0b</text><text x="706.2" y="692" transform="rotate(.03 706.2 692)" font-size="3.4" fill="#111" font-weight="700" text-anchor="middle">0a</text><text x="717.8" y="692" transform="rotate(.03 717.8 692)" font-size="3.4" fill="#111" font-weight="700" text-anchor="middle">0b</text><text x="754.2" y="692" transform="rotate(.03 754.2 692)" font-size="3.4" fill="#111" font-weight="700" text-anchor="middle">0c</text><text x="765.6" y="692" transform="rotate(.03 765.6 692)" font-size="3.4" fill="#111" font-weight="700" text-anchor="middle">0d</text><text x="780.2" y="692" transform="rotate(.03 780.2 692)" font-size="3.4" fill="#111" font-weight="700" text-anchor="middle">0c</text><text x="791" y="692" transform="rotate(.03 791 692)" font-size="3.4" fill="#111" font-weight="700" text-anchor="middle">0d</text><text x="737.8" y="691.2" transform="rotate(.03 737.8 691.2)" font-size="3.6" fill="#111" font-weight="700" text-anchor="middle">RLM</text><text x="814" y="695.6" transform="rotate(.03 814 695.6)" font-size="3.5" fill="#111" font-weight="700" text-anchor="middle">SCSI</text><rect x="802.2" y="696.8" width="23.6" height="4.2" fill="#e4e4e4" stroke="#333" stroke-width="0.8" rx="2.1"/><path d="M804.4 698.9L823.6 698.9" stroke="#444" stroke-width="1.2"/><rect x="831.2" y="644.9" width="41.5" height="58.6" fill="#cdcdcd" stroke="#6e6e6e" stroke-width="1"/><rect x="833.2" y="647.7" width="37" height="5.1" fill="#b2b2b2" stroke="#777" stroke-width="0.8" rx="2.2"/><path d="M834.8 668.7h33.71M836.9 671.89h31.61M834.8 675.08h33.71M836.9 678.27h31.61M834.8 681.46h33.71M836.9 684.65h31.61M834.8 687.84h33.71M836.9 691.03h31.61M834.8 694.22h33.71M836.9 697.41h31.61M834.8 700.6h33.71" stroke="#0c0c0c" stroke-width="2.6" stroke-linecap="round" stroke-dasharray="0 4.2" fill="none"/><path d="M833.55 655.94a1.25 1.25 0 1 0 2.5 0a1.25 1.25 0 1 0-2.5 0M835.65 659.13a1.25 1.25 0 1 0 2.5 0a1.25 1.25 0 1 0-2.5 0M865.05 659.13a1.25 1.25 0 1 0 2.5 0a1.25 1.25 0 1 0-2.5 0M833.55 662.32a1.25 1.25 0 1 0 2.5 0a1.25 1.25 0 1 0-2.5 0M854.55 662.32a1.25 1.25 0 1 0 2.5 0a1.25 1.25 0 1 0-2.5 0M867.15 662.32a1.25 1.25 0 1 0 2.5 0a1.25 1.25 0 1 0-2.5 0M835.65 665.51a1.25 1.25 0 1 0 2.5 0a1.25 1.25 0 1 0-2.5 0M852.45 665.51a1.25 1.25 0 1 0 2.5 0a1.25 1.25 0 1 0-2.5 0M865.05 665.51a1.25 1.25 0 1 0 2.5 0a1.25 1.25 0 1 0-2.5 0" fill="#0c0c0c"/><rect x="839.9" y="655.5" width="11" height="8.5" fill="#8a8a8a" stroke="#666" stroke-width="0.5" rx="1"/><rect x="841.2" y="656.7" width="8.4" height="6.1" fill="#1fe02a"/><rect x="843.8" y="658.5" width="3.2" height="2.4" fill="#8dff90"/><rect x="858" y="656.4" width="6.2" height="9" fill="#484848" stroke="#333" stroke-width="0.5"/><rect x="859.4" y="657.3" width="3.4" height="3.4" fill="#5e5e5e"/><rect x="874.3" y="644.9" width="41.5" height="58.6" fill="#cdcdcd" stroke="#6e6e6e" stroke-width="1"/><rect x="876.3" y="647.7" width="37" height="5.1" fill="#b2b2b2" stroke="#777" stroke-width="0.8" rx="2.2"/><path d="M877.9 668.7h33.71M880 671.89h31.61M877.9 675.08h33.71M880 678.27h31.61M877.9 681.46h33.71M880 684.65h31.61M877.9 687.84h33.71M880 691.03h31.61M877.9 694.22h33.71M880 697.41h31.61M877.9 700.6h33.71" stroke="#0c0c0c" stroke-width="2.6" stroke-linecap="round" stroke-dasharray="0 4.2" fill="none"/><path d="M876.65 655.94a1.25 1.25 0 1 0 2.5 0a1.25 1.25 0 1 0-2.5 0M878.75 659.13a1.25 1.25 0 1 0 2.5 0a1.25 1.25 0 1 0-2.5 0M908.15 659.13a1.25 1.25 0 1 0 2.5 0a1.25 1.25 0 1 0-2.5 0M876.65 662.32a1.25 1.25 0 1 0 2.5 0a1.25 1.25 0 1 0-2.5 0M897.65 662.32a1.25 1.25 0 1 0 2.5 0a1.25 1.25 0 1 0-2.5 0M910.25 662.32a1.25 1.25 0 1 0 2.5 0a1.25 1.25 0 1 0-2.5 0M878.75 665.51a1.25 1.25 0 1 0 2.5 0a1.25 1.25 0 1 0-2.5 0M895.55 665.51a1.25 1.25 0 1 0 2.5 0a1.25 1.25 0 1 0-2.5 0M908.15 665.51a1.25 1.25 0 1 0 2.5 0a1.25 1.25 0 1 0-2.5 0" fill="#0c0c0c"/><rect x="883" y="655.5" width="11" height="8.5" fill="#8a8a8a" stroke="#666" stroke-width="0.5" rx="1"/><rect x="884.3" y="656.7" width="8.4" height="6.1" fill="#1fe02a"/><rect x="886.9" y="658.5" width="3.2" height="2.4" fill="#8dff90"/><rect x="901.1" y="656.4" width="6.2" height="9" fill="#484848" stroke="#333" stroke-width="0.5"/><rect x="902.5" y="657.3" width="3.4" height="3.4" fill="#5e5e5e"/><path d="M644.3 705.6L926.9 705.6" stroke="#000" stroke-width="1.3"/><path d="M644.3 328.4L926.9 328.4" stroke="#000" stroke-width="1.4"/><path d="M644.3 454.2L926.9 454.2" stroke="#000" stroke-width="1.4"/><path d="M644.3 517.1L926.9 517.1" stroke="#000" stroke-width="1.4"/><path d="M644.3 579.9L926.9 579.9" stroke="#000" stroke-width="1.4"/><path d="M644.3 642.7L926.9 642.7" stroke="#000" stroke-width="1.4"/><path d="M644.3 203.2L644.3 701.5" stroke="#000" stroke-width="1.15"/><path d="M926.9 203.2L926.9 701.5" stroke="#000" stroke-width="1.15"/></g><path d="M631.3 701.5V203.2H939.4V701.5" fill="none" stroke="#e23a2a" stroke-width="1.2"/><rect x="941.4" y="205" width="4.4" height="100" fill="#f1f1f1" rx="2.2"/></svg>
</body></html>
